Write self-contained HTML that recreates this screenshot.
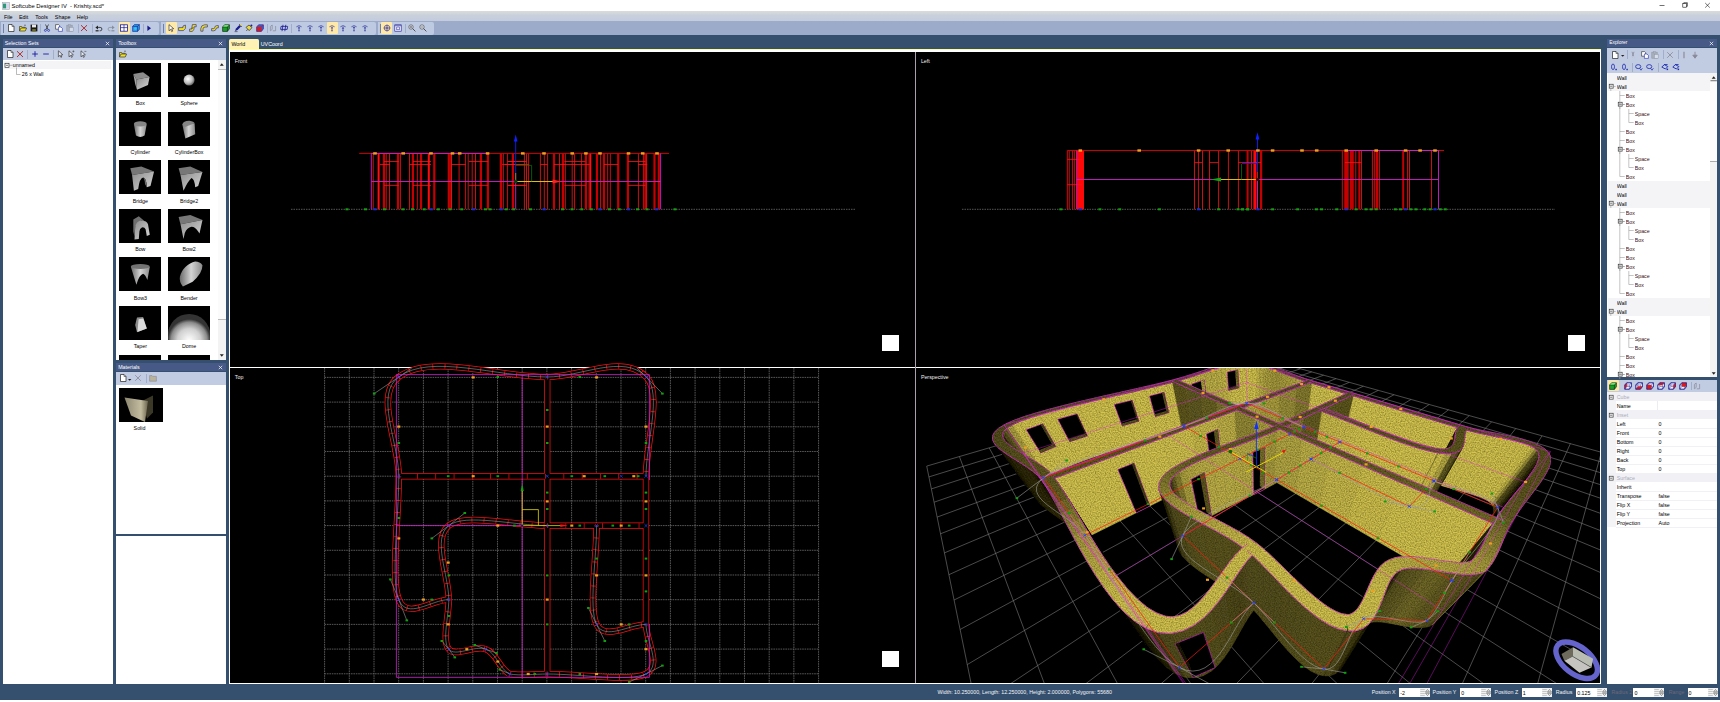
<!DOCTYPE html>
<html><head><meta charset="utf-8"><title>Softcube Designer IV - Krishty.scd*</title><style>
html,body{margin:0;padding:0;background:#fff;overflow:hidden}
#r{position:relative;width:1720px;height:702px;overflow:hidden;font-family:"Liberation Sans",sans-serif}
#r div,#r svg,#r span{position:absolute;display:block}
#r svg{overflow:visible}
#r .t{white-space:pre;line-height:8px;height:8px}
#r svg text{font-family:"Liberation Sans",sans-serif}
</style></head><body><div id="r">
<div style="left:0px;top:0px;width:1720px;height:702px;background:#fff;"></div>
<svg style="left:1.5px;top:2px" width="8" height="8" viewBox="0 0 8 8"><rect x=".3" y=".3" width="7.400" height="7.400" fill="#e8e8f0" stroke="#99a" stroke-width=".5"/><rect x="1" y="1.600" width="3.200" height="4.800" fill="#2a9a78"/><rect x="4.600" y="1.600" width="2.400" height="4.800" fill="#d8d8ee"/></svg>
<span class="t" style="left:11.6px;top:1.5999999999999996px;color:#000;font-size:5.85px;">Softcube Designer IV&nbsp; - Krishty.scd*</span>
<svg style="left:1655px;top:0px" width="60" height="11" viewBox="0 0 60 11"><path d="M4.500 5.500h5" stroke="#111" stroke-width=".6"/><rect x="27.800" y="3.600" width="3.600" height="3.600" fill="none" stroke="#111" stroke-width=".6"/><path d="M28.800 3.600v-.9h3.600v3.600h-1" fill="none" stroke="#111" stroke-width=".6"/><path d="M50.200 3l4.600 4.600M54.800 3l-4.600 4.600" stroke="#111" stroke-width=".6"/></svg>
<div style="left:0px;top:11px;width:1720px;height:10px;background:linear-gradient(#d8ddd9,#c9d0dc 45%,#c3cbdd);"></div>
<span class="t" style="left:3.9px;top:12.600000000000001px;color:#000;font-size:5.4px;">File</span>
<span class="t" style="left:18.9px;top:12.600000000000001px;color:#000;font-size:5.4px;">Edit</span>
<span class="t" style="left:35.3px;top:12.600000000000001px;color:#000;font-size:5.4px;">Tools</span>
<span class="t" style="left:54.8px;top:12.600000000000001px;color:#000;font-size:5.4px;">Shape</span>
<span class="t" style="left:76.8px;top:12.600000000000001px;color:#000;font-size:5.4px;">Help</span>
<div style="left:0px;top:21px;width:1720px;height:14px;background:#9cabc9;"></div>
<div style="left:1px;top:22px;width:158px;height:12.5px;background:#bdcae1;border-radius:0 2px 2px 0"></div>
<div style="left:3.2px;top:24px;width:0.6px;height:8.5px;background:#6f7fa6;"></div>
<div style="left:161px;top:22px;width:214.5px;height:12.5px;background:#bdcae1;border-radius:0 2px 2px 0"></div>
<div style="left:163.2px;top:24px;width:0.6px;height:8.5px;background:#6f7fa6;"></div>
<div style="left:377.5px;top:22px;width:56.0px;height:12.5px;background:#bdcae1;border-radius:0 2px 2px 0"></div>
<div style="left:379.7px;top:24px;width:0.6px;height:8.5px;background:#6f7fa6;"></div>
<div style="left:118.7px;top:22.45px;width:11px;height:11.5px;background:#ffe9a8;border-radius:1px"></div>
<div style="left:165.7px;top:22.45px;width:11px;height:11.5px;background:#ffe9a8;border-radius:1px"></div>
<div style="left:326.7px;top:22.45px;width:11px;height:11.5px;background:#ffe9a8;border-radius:1px"></div>
<div style="left:381.3px;top:22.45px;width:11px;height:11.5px;background:#ffe9a8;border-radius:1px"></div>
<svg style="left:7.4px;top:24.2px" width="8" height="8" viewBox="0 0 8 8"><path d="M1.5 .5h3.5l2 2v5h-5.5z" fill="#fff" stroke="#222" stroke-width=".7"/><path d="M5 .5v2h2" fill="none" stroke="#222" stroke-width=".5"/></svg>
<svg style="left:18.8px;top:24.2px" width="8" height="8" viewBox="0 0 8 8"><path d="M.5 7V2.5h2l.7.8h3v1" fill="#e8d840" stroke="#222" stroke-width=".6"/><path d="M.5 7l1.5-3h5.6l-1.4 3z" fill="#f0e020" stroke="#222" stroke-width=".6"/><path d="M5 1.5q1-1.2 2 0" fill="none" stroke="#222" stroke-width=".5"/></svg>
<svg style="left:29.6px;top:24.2px" width="8" height="8" viewBox="0 0 8 8"><rect x=".6" y=".6" width="6.8" height="6.8" fill="#1a1a1a"/><rect x="2" y=".6" width="4" height="2.8" fill="#e8e8e8"/><rect x="2.2" y="5" width="3.6" height="2.4" fill="#6b6b20"/></svg>
<svg style="left:43.2px;top:24.2px" width="8" height="8" viewBox="0 0 8 8"><path d="M2.5 .5l2.5 5M5.5 .5l-2.5 5" stroke="#222" stroke-width=".7" fill="none"/><circle cx="2.4" cy="6.4" r="1" fill="none" stroke="#1a2ab0" stroke-width=".7"/><circle cx="5.6" cy="6.4" r="1" fill="none" stroke="#1a2ab0" stroke-width=".7"/></svg>
<svg style="left:55px;top:24.2px" width="8" height="8" viewBox="0 0 8 8"><path d="M.6 .6h3l1 1v3.6h-4z" fill="#fff" stroke="#222" stroke-width=".6"/><path d="M3.4 3h2.6l1.4 1.4v3h-4z" fill="#fff" stroke="#1a2ab0" stroke-width=".6"/></svg>
<svg style="left:66px;top:24.2px" width="8" height="8" viewBox="0 0 8 8"><g opacity="0.35" style="filter:grayscale(1)"><rect x=".8" y="1.2" width="5.4" height="6" fill="#8a7a50" stroke="#333" stroke-width=".6"/><rect x="2.4" y=".4" width="2.2" height="1.6" fill="#999" stroke="#333" stroke-width=".4"/><rect x="3.4" y="3.4" width="3.8" height="4" fill="#fff" stroke="#333" stroke-width=".5"/></g></svg>
<svg style="left:80px;top:24.2px" width="8" height="8" viewBox="0 0 8 8"><path d="M1 1.2l6 5.8M7 1.2l-6 5.8" stroke="#a81414" stroke-width=".85" fill="none"/></svg>
<svg style="left:94.8px;top:24.2px" width="8" height="8" viewBox="0 0 8 8"><path d="M2.2 3.4h3a1.7 1.7 0 010 3.4H4.6" fill="none" stroke="#222" stroke-width=".8"/><path d="M.4 3.4l2.6-2v4z" fill="#222"/><rect x=".6" y="6.2" width="3" height="1.2" fill="#222"/></svg>
<svg style="left:106.6px;top:24.2px" width="8" height="8" viewBox="0 0 8 8"><g opacity="0.35" style="filter:grayscale(1)"><path d="M5.8 3.4h-3a1.7 1.7 0 000 3.4h.6" fill="none" stroke="#222" stroke-width=".8"/><path d="M7.6 3.4l-2.6-2v4z" fill="#222"/><rect x="4.4" y="6.2" width="3" height="1.2" fill="#222"/></g></svg>
<svg style="left:120.2px;top:24.2px" width="8" height="8" viewBox="0 0 8 8"><rect x=".5" y=".8" width="7" height="6.4" fill="#fff" stroke="#1a1a90" stroke-width=".8"/><path d="M4 .8v6.4M.5 3.6h7" stroke="#1a1a90" stroke-width=".7"/></svg>
<svg style="left:131.8px;top:24.2px" width="8" height="8" viewBox="0 0 8 8"><path d="M.6 2.4l1.8-1.8h5v4.6l-1.8 2.2h-5z" fill="#20a0e8" stroke="#1a1a90" stroke-width=".6"/><path d="M.6 2.4h5v5M5.6 2.4l1.8-1.8" fill="none" stroke="#1a1a90" stroke-width=".6"/><circle cx="3.4" cy="4.6" r="1.3" fill="#30c8f0"/></svg>
<svg style="left:145.2px;top:24.2px" width="8" height="8" viewBox="0 0 8 8"><path d="M2.4 1.4l3.6 2.8-3.6 2.8z" fill="#1a1a90"/></svg>
<svg style="left:167.2px;top:24.2px" width="8" height="8" viewBox="0 0 8 8"><path d="M2 .6v6.2l1.6-1.5 1.1 2.3 1-.5-1.1-2.2 2.1-.2z" fill="#fff" stroke="#111" stroke-width=".6"/></svg>
<svg style="left:178.2px;top:24.2px" width="8" height="8" viewBox="0 0 8 8"><path d="M.6 3.6h4.4v-1.6l2.4-1v3.4l-2 2.2h-4.8z" fill="#f4e010" stroke="#1a1a90" stroke-width=".6"/></svg>
<svg style="left:189.2px;top:24.2px" width="8" height="8" viewBox="0 0 8 8"><path d="M3.4 .6h3.8v2.2h-2.2v2.4l-1.6 2.2h-2.8v-2.4h2z" fill="#f4e010" stroke="#1a1a90" stroke-width=".6"/><path d="M2.6 5q1.4-.2 1.4-2" fill="none" stroke="#1a1a90" stroke-width=".5"/></svg>
<svg style="left:200.2px;top:24.2px" width="8" height="8" viewBox="0 0 8 8"><path d="M.8 7.2v-2.6q.2-3.6 3.8-3.8h2.8v2.2h-2.4q-1.8.2-2 1.8v2.4z" fill="#f4e010" stroke="#1a1a90" stroke-width=".6"/></svg>
<svg style="left:211.2px;top:24.2px" width="8" height="8" viewBox="0 0 8 8"><path d="M.6 6.8v-2.2h2q1 0 1.2-1.2.2-1.8 2-1.8h1.6v2.2h-1.4q-.8 0-1 1.200-.4 1.800-2.200 1.800z" fill="#f4e010" stroke="#1a1a90" stroke-width=".6"/></svg>
<svg style="left:222.2px;top:24.2px" width="8" height="8" viewBox="0 0 8 8"><path d="M.6 3l2-2.200h4.800v4l-2 2.600h-4.800z" fill="#18a028" stroke="#111" stroke-width=".6"/><path d="M.6 3h4.800v4.400M5.400 3l2-2.200" fill="none" stroke="#111" stroke-width=".5"/><path d="M.9 2.800l1.800-1.800h4.200l-1.700 1.800z" fill="#70e070"/></svg>
<svg style="left:233.6px;top:24.2px" width="8" height="8" viewBox="0 0 8 8"><path d="M1 7l1-2.600 3.400-3.400 1.600 1.600-3.400 3.400z" fill="#1a1a90"/><path d="M5.400 .4l2.200 2.200" stroke="#111" stroke-width=".9"/><circle cx="6.600" cy="1" r=".8" fill="#f4e010"/><path d="M.6 7.600h3" stroke="#111" stroke-width=".5"/></svg>
<svg style="left:244.6px;top:24.2px" width="8" height="8" viewBox="0 0 8 8"><path d="M1 3.400l3-2.400 3 2.600-2.800 3z" fill="#e8d840" stroke="#111" stroke-width=".6"/><circle cx="6.400" cy="1.400" r="1" fill="#1a1a90"/><path d="M1.400 6.800l1.400-1.400" stroke="#111" stroke-width=".7"/></svg>
<svg style="left:255.6px;top:24.2px" width="8" height="8" viewBox="0 0 8 8"><path d="M.6 3l2-2.200h4.800v4l-2 2.600h-4.800z" fill="#e01818" stroke="#1a1a90" stroke-width=".6"/><path d="M.9 2.800l1.800-1.800h4.200l-1.700 1.800z" fill="#2060e0"/><path d="M5.600 3.200l1.600-1.900v3.500l-1.600 2.100z" fill="#2060e0"/></svg>
<svg style="left:269.2px;top:24.2px" width="8" height="8" viewBox="0 0 8 8"><path d="M1.400 6.800v-4.400l1.800-1.400v4.400zM3.800 6.800h2.800v-4.800" fill="none" stroke="#889" stroke-width=".7"/></svg>
<svg style="left:280px;top:24.2px" width="8" height="8" viewBox="0 0 8 8"><path d="M3 .8l-1 6.400M5.800 .8l-1 6.400M1 2.400h6.600M.6 5.400h6.600M1 2.400l-.4 3M7.600 2.400l-.4 3" fill="none" stroke="#1a1a90" stroke-width=".8"/></svg>
<svg style="left:295px;top:24.2px" width="8" height="8" viewBox="0 0 8 8"><path d="M4 2.600v4.800" stroke="#1a1a90" stroke-width=".6"/><path d="M1.400 2.800q2.600-2.400 5.200 0" fill="none" stroke="#1a1a90" stroke-width=".6"/><path d="M2.900 3.9h2.200" stroke="#1a1a90" stroke-width=".6"/><path d="M3.300 6.600h1.400" stroke="#1a1a90" stroke-width=".5"/></svg>
<svg style="left:306px;top:24.2px" width="8" height="8" viewBox="0 0 8 8"><path d="M4 2.600v4.800" stroke="#1a1a90" stroke-width=".6"/><path d="M1.400 2.800q2.600-2.400 5.200 0" fill="none" stroke="#1a1a90" stroke-width=".6"/><path d="M2.900 4.2h2.200" stroke="#1a1a90" stroke-width=".6"/><path d="M3.300 6.600h1.400" stroke="#1a1a90" stroke-width=".5"/></svg>
<svg style="left:317px;top:24.2px" width="8" height="8" viewBox="0 0 8 8"><path d="M4 2.600v4.800" stroke="#1a1a90" stroke-width=".6"/><path d="M1.400 2.800q2.600-2.400 5.200 0" fill="none" stroke="#1a1a90" stroke-width=".6"/><path d="M2.900 3.6h2.200" stroke="#1a1a90" stroke-width=".6"/><path d="M3.300 6.600h1.400" stroke="#1a1a90" stroke-width=".5"/></svg>
<svg style="left:328.2px;top:24.2px" width="8" height="8" viewBox="0 0 8 8"><path d="M4 2.600v4.800" stroke="#1a1a90" stroke-width=".6"/><path d="M1.400 2.800q2.600-2.400 5.200 0" fill="none" stroke="#1a1a90" stroke-width=".6"/><path d="M2.900 3.9h2.200" stroke="#1a1a90" stroke-width=".6"/><path d="M3.300 6.600h1.400" stroke="#1a1a90" stroke-width=".5"/></svg>
<svg style="left:339px;top:24.2px" width="8" height="8" viewBox="0 0 8 8"><path d="M4 2.600v4.800" stroke="#1a1a90" stroke-width=".6"/><path d="M1.400 2.800q2.600-2.400 5.200 0" fill="none" stroke="#1a1a90" stroke-width=".6"/><path d="M2.900 4.2h2.200" stroke="#1a1a90" stroke-width=".6"/><path d="M3.300 6.600h1.400" stroke="#1a1a90" stroke-width=".5"/></svg>
<svg style="left:350px;top:24.2px" width="8" height="8" viewBox="0 0 8 8"><path d="M4 2.600v4.800" stroke="#1a1a90" stroke-width=".6"/><path d="M1.400 2.800q2.600-2.400 5.200 0" fill="none" stroke="#1a1a90" stroke-width=".6"/><path d="M2.900 3.6h2.200" stroke="#1a1a90" stroke-width=".6"/><path d="M3.300 6.600h1.400" stroke="#1a1a90" stroke-width=".5"/></svg>
<svg style="left:361px;top:24.2px" width="8" height="8" viewBox="0 0 8 8"><path d="M4 2.600v4.800" stroke="#1a1a90" stroke-width=".6"/><path d="M1.400 2.800q2.600-2.400 5.200 0" fill="none" stroke="#1a1a90" stroke-width=".6"/><path d="M2.900 3.9h2.200" stroke="#1a1a90" stroke-width=".6"/><path d="M3.300 6.600h1.400" stroke="#1a1a90" stroke-width=".5"/></svg>
<svg style="left:382.8px;top:24.2px" width="8" height="8" viewBox="0 0 8 8"><circle cx="4" cy="4" r="2.800" fill="none" stroke="#1a1a90" stroke-width=".6"/><circle cx="4" cy="4" r="1.100" fill="none" stroke="#1a1a90" stroke-width=".5"/><path d="M4 .4v7.200M.4 4h7.200" stroke="#1a1a90" stroke-width=".4"/></svg>
<svg style="left:393.6px;top:24.2px" width="8" height="8" viewBox="0 0 8 8"><rect x=".8" y=".8" width="6.400" height="6.400" fill="#eef" stroke="#1a1a90" stroke-width=".6"/><rect x="2.800" y="3" width="2.600" height="2.800" fill="none" stroke="#1a1a90" stroke-width=".5"/><path d="M.8 1.700h6.400" stroke="#1a1a90" stroke-width=".6"/></svg>
<svg style="left:408px;top:24.2px" width="8" height="8" viewBox="0 0 8 8"><circle cx="3" cy="3" r="2.200" fill="#dfe3ee" stroke="#333" stroke-width=".55"/><path d="M4.600 4.600l2.800 2.800" stroke="#333" stroke-width=".8"/><path d="M1.800 3h2.400M3 1.800v2.400" stroke="#333" stroke-width=".5"/></svg>
<svg style="left:419px;top:24.2px" width="8" height="8" viewBox="0 0 8 8"><circle cx="3" cy="3" r="2.200" fill="#dfe3ee" stroke="#333" stroke-width=".55"/><path d="M4.600 4.600l2.800 2.800" stroke="#333" stroke-width=".8"/><path d="M1.800 3h2.400" stroke="#333" stroke-width=".5"/></svg>
<div style="left:40.2px;top:24px;width:0.5px;height:8.5px;background:#a0aeCC;"></div>
<div style="left:77.6px;top:24px;width:0.5px;height:8.5px;background:#a0aeCC;"></div>
<div style="left:91.6px;top:24px;width:0.5px;height:8.5px;background:#a0aeCC;"></div>
<div style="left:142.6px;top:24px;width:0.5px;height:8.5px;background:#a0aeCC;"></div>
<div style="left:267px;top:24px;width:0.5px;height:8.5px;background:#a0aeCC;"></div>
<div style="left:290.6px;top:24px;width:0.5px;height:8.5px;background:#a0aeCC;"></div>
<div style="left:404.6px;top:24px;width:0.5px;height:8.5px;background:#a0aeCC;"></div>
<div style="left:0px;top:35px;width:1720px;height:665.4px;background:#35506e;"></div>
<div style="left:2.5px;top:38.8px;width:110.5px;height:8.5px;background:#475986;"></div>
<span class="t" style="left:4.7px;top:39.35px;color:#fff;font-size:5.3px;">Selection Sets</span>
<svg style="left:104.5px;top:40.65px" width="5" height="5" viewBox="0 0 5 5"><path d="M.8 .8l3.400 3.400M4.200 .8l-3.400 3.400" stroke="#fff" stroke-width=".7"/></svg>
<div style="left:2.5px;top:48px;width:110.5px;height:12px;background:#c1cbe1;"></div>
<svg style="left:5.6px;top:50.2px" width="8" height="8" viewBox="0 0 8 8"><path d="M1.5 .5h3.5l2 2v5h-5.5z" fill="#fff" stroke="#222" stroke-width=".7"/><path d="M5 .5v2h2" fill="none" stroke="#222" stroke-width=".5"/></svg>
<svg style="left:16.4px;top:50.2px" width="8" height="8" viewBox="0 0 8 8"><path d="M1 1.2l6 5.8M7 1.2l-6 5.8" stroke="#a81414" stroke-width=".85" fill="none"/></svg>
<svg style="left:30.8px;top:50.2px" width="8" height="8" viewBox="0 0 8 8"><path d="M4 1.200v5.600M1.200 4h5.600" stroke="#1c1ca0" stroke-width=".9"/></svg>
<svg style="left:42px;top:50.2px" width="8" height="8" viewBox="0 0 8 8"><path d="M1.200 4h5.600" stroke="#1c1ca0" stroke-width=".9"/></svg>
<svg style="left:56px;top:50.2px" width="8" height="8" viewBox="0 0 8 8"><path d="M2.400 .8v6l1.500-1.400 1 2 .9-.4-1-2 2-.2z" fill="#e4e9f2" stroke="#222" stroke-width=".6"/></svg>
<svg style="left:67.4px;top:50.2px" width="8" height="8" viewBox="0 0 8 8"><path d="M2 .8v6l1.500-1.400 1 2 .9-.4-1-2 2-.2z" fill="#e4e9f2" stroke="#222" stroke-width=".6"/><path d="M5.400 1.400h2M6.400 .4v2" stroke="#333" stroke-width=".5"/></svg>
<svg style="left:78.6px;top:50.2px" width="8" height="8" viewBox="0 0 8 8"><path d="M2 .8v6l1.500-1.400 1 2 .9-.4-1-2 2-.2z" fill="#e4e9f2" stroke="#222" stroke-width=".6"/><path d="M5.400 1.400h2" stroke="#333" stroke-width=".5"/></svg>
<div style="left:27.4px;top:50px;width:0.5px;height:8.5px;background:#a3aec9;"></div>
<div style="left:53px;top:50px;width:0.5px;height:8.5px;background:#a3aec9;"></div>
<div style="left:2.5px;top:60px;width:110.5px;height:624.2px;background:#fff;"></div>
<div style="left:4.2px;top:60.6px;width:107px;height:8.8px;background:#f4f4f7;"></div>
<svg style="left:3.5px;top:61px" width="20" height="18" viewBox="0 0 20 18"><rect x="1" y="2.300" width="4" height="4" fill="#fff" stroke="#333" stroke-width=".7"/><path d="M2 4.300h2" stroke="#111" stroke-width=".6"/><path d="M5 4.300h3.500M12.500 6.500v7h4" fill="none" stroke="#777" stroke-width=".5"/></svg>
<span class="t" style="left:12.8px;top:61.3px;color:#000;font-size:5.3px;">unnamed</span>
<span class="t" style="left:21.8px;top:70.3px;color:#000;font-size:5.3px;">26 x Wall</span>
<div style="left:116px;top:38.8px;width:110px;height:8.5px;background:#475986;"></div>
<span class="t" style="left:118.2px;top:39.35px;color:#fff;font-size:5.3px;">Toolbox</span>
<svg style="left:217.5px;top:40.65px" width="5" height="5" viewBox="0 0 5 5"><path d="M.8 .8l3.400 3.400M4.200 .8l-3.400 3.400" stroke="#fff" stroke-width=".7"/></svg>
<div style="left:116px;top:48px;width:110px;height:12px;background:#c1cbe1;"></div>
<svg style="left:118.6px;top:50.2px" width="8" height="8" viewBox="0 0 8 8"><path d="M.5 7V2.5h2l.7.8h3v1" fill="#e8d840" stroke="#222" stroke-width=".6"/><path d="M.5 7l1.5-3h5.6l-1.4 3z" fill="#f0e020" stroke="#222" stroke-width=".6"/><path d="M5 1.5q1-1.2 2 0" fill="none" stroke="#222" stroke-width=".5"/></svg>
<div style="left:116px;top:60px;width:110px;height:299.8px;background:#fff;"></div>
<svg style="left:0px;top:0px" width="1" height="1" viewBox="0 0 1 1"><defs><linearGradient id="gA" x1="0" y1="0" x2="1" y2="1"><stop offset="0" stop-color="#8c8c8c"/><stop offset="1" stop-color="#d8d8d8"/></linearGradient><linearGradient id="gB" x1="0" y1="0" x2="1" y2="0"><stop offset="0" stop-color="#6a6a6a"/><stop offset=".5" stop-color="#d4d4d4"/><stop offset="1" stop-color="#8a8a8a"/></linearGradient><radialGradient id="gS" cx=".4" cy=".4" r=".65"><stop offset="0" stop-color="#fff"/><stop offset=".6" stop-color="#bbb"/><stop offset="1" stop-color="#555"/></radialGradient><radialGradient id="gD" cx=".5" cy=".62" r=".5"><stop offset="0" stop-color="#fff"/><stop offset=".55" stop-color="#d0d0d0"/><stop offset=".85" stop-color="#8a8a8a"/><stop offset="1" stop-color="#333"/></radialGradient></defs></svg><div style="left:119.2px;top:63.2px;width:42.2px;height:34px;background:#000;"></div><svg style="left:119.2px;top:63.2px;overflow:hidden" width="42.2" height="34" viewBox="0 0 42.2 34"><path d="M14.3 11L24.100 9.200 30.600 14.100 17.400 16.500z" fill="#8c8c8c"/><path d="M17.400 16.500L30.600 14.100 29 22 18 26.700z" fill="url(#gA)"/><path d="M14.300 11L17.400 16.500 18 26.700 16.200 21z" fill="#a4a4a4"/></svg><span class="t" style="left:140.3px;top:99.4px;color:#000;font-size:5.3px;transform:translateX(-50%)">Box</span><div style="left:168px;top:63.2px;width:42.2px;height:34px;background:#000;"></div><svg style="left:168px;top:63.2px;overflow:hidden" width="42.2" height="34" viewBox="0 0 42.2 34"><circle cx="21.100" cy="17.100" r="5.500" fill="url(#gS)"/></svg><span class="t" style="left:189.1px;top:99.4px;color:#000;font-size:5.3px;transform:translateX(-50%)">Sphere</span><div style="left:119.2px;top:111.75px;width:42.2px;height:34px;background:#000;"></div><svg style="left:119.2px;top:111.75px;overflow:hidden" width="42.2" height="34" viewBox="0 0 42.2 34"><path d="M14.900 12.400L17 23.600Q21.300 26.400 25.600 23.600L27.700 12.400z" fill="url(#gB)"/><ellipse cx="21.300" cy="11.900" rx="6.400" ry="2.600" fill="#858585"/></svg><span class="t" style="left:140.3px;top:147.95px;color:#000;font-size:5.3px;transform:translateX(-50%)">Cylinder</span><div style="left:168px;top:111.75px;width:42.2px;height:34px;background:#000;"></div><svg style="left:168px;top:111.75px;overflow:hidden" width="42.2" height="34" viewBox="0 0 42.2 34"><path d="M14.300 12.500L17.400 26.600 27.200 22.300 26.600 11.300z" fill="url(#gB)"/><path d="M14.300 12.500Q15.500 8.600 21.500 8.800 26.200 9.400 26.600 11.300L17 15z" fill="#858585"/></svg><span class="t" style="left:189.1px;top:147.95px;color:#000;font-size:5.3px;transform:translateX(-50%)">CylinderBox</span><div style="left:119.2px;top:160.3px;width:42.2px;height:34px;background:#000;"></div><svg style="left:119.2px;top:160.3px;overflow:hidden" width="42.2" height="34" viewBox="0 0 42.2 34"><path d="M11.300 8.200L22.300 6.600 35.100 11.500 13.100 14.900z" fill="#777"/><path d="M13.100 14.900L35.100 11.500 31.500 26 27.800 27.200Q27.500 17.500 24.100 17.400 20.500 18 19.200 29L14.900 30.800z" fill="url(#gA)"/><path d="M24.100 17.400Q27.500 17.500 27.800 27.200L26 24Q25.800 19 24.100 17.400z" fill="#6c6c6c"/></svg><span class="t" style="left:140.3px;top:196.5px;color:#000;font-size:5.3px;transform:translateX(-50%)">Bridge</span><div style="left:168px;top:160.3px;width:42.2px;height:34px;background:#000;"></div><svg style="left:168px;top:160.3px;overflow:hidden" width="42.2" height="34" viewBox="0 0 42.2 34"><path d="M10.600 8.200L22.300 6.600 34.500 11.900 12.500 14.900z" fill="#777"/><path d="M12.500 14.900L34.500 11.900 30.200 26 27.200 27.200Q26.500 19 23.500 18 20 21 15.500 30.800z" fill="url(#gA)"/></svg><span class="t" style="left:189.1px;top:196.5px;color:#000;font-size:5.3px;transform:translateX(-50%)">Bridge2</span><div style="left:119.2px;top:208.85px;width:42.2px;height:34px;background:#000;"></div><svg style="left:119.2px;top:208.85px;overflow:hidden" width="42.2" height="34" viewBox="0 0 42.2 34"><path d="M14.300 10.400L19.800 7.300 27.200 13.500 22.300 11.600 16.200 17.700 15.500 27.500 14.300 22.600z" fill="#6e6e6e"/><path d="M15.500 30.600L16.200 17.700Q17.500 12 22.300 11.600 28 12 29 15.300L30.800 25.700 27.800 26.900 26.600 20.200Q25.500 18 22.900 18.400 20.600 19.500 20.400 22.600L19.800 30z" fill="url(#gA)"/></svg><span class="t" style="left:140.3px;top:245.05px;color:#000;font-size:5.3px;transform:translateX(-50%)">Bow</span><div style="left:168px;top:208.85px;width:42.2px;height:34px;background:#000;"></div><svg style="left:168px;top:208.85px;overflow:hidden" width="42.2" height="34" viewBox="0 0 42.2 34"><path d="M10.600 8L22.300 6.100 34.500 11 12.500 15.300z" fill="#777"/><path d="M12.500 15.300L34.500 11 31.500 24.500 30.200 22.600Q27 17.500 23.500 17.700 19 18.500 16.800 23.900L15.500 30z" fill="url(#gA)"/></svg><span class="t" style="left:189.1px;top:245.05px;color:#000;font-size:5.3px;transform:translateX(-50%)">Bow2</span><div style="left:119.2px;top:257.4px;width:42.2px;height:34px;background:#000;"></div><svg style="left:119.2px;top:257.4px;overflow:hidden" width="42.2" height="34" viewBox="0 0 42.2 34"><path d="M11.900 10L17.400 27.800Q20 18 24.100 16.800 26.500 18 28.400 22.900L30.800 10z" fill="url(#gB)"/><ellipse cx="21.300" cy="9.400" rx="9.500" ry="2.500" fill="#727272"/></svg><span class="t" style="left:140.3px;top:293.6px;color:#000;font-size:5.3px;transform:translateX(-50%)">Bow3</span><div style="left:168px;top:257.4px;width:42.2px;height:34px;background:#000;"></div><svg style="left:168px;top:257.4px;overflow:hidden" width="42.2" height="34" viewBox="0 0 42.2 34"><path d="M14.900 29.600Q11 25 11.900 19.800 13.500 13.500 17.400 10 22 5.500 27.200 4.500 32 4.500 34.500 8.200 34.500 12 32.100 16.200 29 21 24.700 24.700z" fill="url(#gB)"/></svg><span class="t" style="left:189.1px;top:293.6px;color:#000;font-size:5.3px;transform:translateX(-50%)">Bender</span><div style="left:119.2px;top:305.95px;width:42.2px;height:34px;background:#000;"></div><svg style="left:119.2px;top:305.95px;overflow:hidden" width="42.2" height="34" viewBox="0 0 42.2 34"><path d="M18 26.300L16.200 19 18 11.600 24.100 11 27.800 22.600z" fill="#8a8a8a"/><path d="M19.600 13.200L24.300 12.600 27.800 22.600 18.400 26z" fill="#dcdcdc"/></svg><span class="t" style="left:140.3px;top:342.15px;color:#000;font-size:5.3px;transform:translateX(-50%)">Taper</span><div style="left:168px;top:305.95px;width:42.2px;height:34px;background:#000;"></div><svg style="left:168px;top:305.95px;overflow:hidden" width="42.2" height="34" viewBox="0 0 42.2 34"><circle cx="21.100" cy="29.300" r="21.300" fill="url(#gD)"/></svg><span class="t" style="left:189.1px;top:342.15px;color:#000;font-size:5.3px;transform:translateX(-50%)">Dome</span><div style="left:119.2px;top:354.5px;width:42.2px;height:5.3px;background:#000;"></div><div style="left:168px;top:354.5px;width:42.2px;height:5.3px;background:#000;"></div>
<div style="left:218.4px;top:60px;width:7.6px;height:299.8px;background:#f3f3f3;"></div>
<div style="left:218.4px;top:68.5px;width:7.6px;height:249.5px;background:#fbfbfb;border-bottom:.5px solid #bbb;border-top:.5px solid #bbb"></div>
<svg style="left:218.4px;top:61px" width="7.6" height="7" viewBox="0 0 7.6 7"><path d="M1.800 4.800l2-2.600 2 2.600z" fill="#222"/></svg>
<svg style="left:218.4px;top:352px" width="7.6" height="7" viewBox="0 0 7.6 7"><path d="M1.800 2.200l2 2.600 2-2.600z" fill="#222"/></svg>
<div style="left:116px;top:363.1px;width:110px;height:7.800000000000001px;background:#475986;"></div>
<span class="t" style="left:118.2px;top:363.3px;color:#fff;font-size:5.3px;">Materials</span>
<svg style="left:217.5px;top:364.59999999999997px" width="5" height="5" viewBox="0 0 5 5"><path d="M.8 .8l3.400 3.400M4.200 .8l-3.400 3.400" stroke="#fff" stroke-width=".7"/></svg>
<div style="left:116px;top:371.6px;width:110px;height:13px;background:#c1cbe1;"></div>
<svg style="left:118.6px;top:374.2px" width="8" height="8" viewBox="0 0 8 8"><path d="M1.5 .5h3.5l2 2v5h-5.5z" fill="#fff" stroke="#222" stroke-width=".7"/><path d="M5 .5v2h2" fill="none" stroke="#222" stroke-width=".5"/></svg>
<svg style="left:128px;top:376px" width="4" height="6" viewBox="0 0 4 6"><path d="M0 3h3.400l-1.700 1.800z" fill="#222"/></svg>
<svg style="left:134.2px;top:374.2px" width="8" height="8" viewBox="0 0 8 8"><path d="M1.200 1.200l5.600 5.600M6.800 1.200l-5.600 5.600" stroke="#889" stroke-width=".8"/></svg>
<div style="left:145.6px;top:374px;width:0.5px;height:8.5px;background:#a0aeCC;"></div>
<svg style="left:149.2px;top:374.2px" width="8" height="8" viewBox="0 0 8 8"><path d="M.6 7.200v-5.600h2.400l.6.800h3.800v4.800z" fill="#b9b39a" stroke="#889" stroke-width=".6"/></svg>
<div style="left:116px;top:384.6px;width:110px;height:149px;background:#fff;"></div>
<div style="left:116px;top:536px;width:110px;height:148.2px;background:#fff;"></div>
<div style="left:118.6px;top:387.6px;width:44.2px;height:34.8px;background:#000;"></div><svg style="left:118.6px;top:387.6px" width="44.2" height="34.8" viewBox="0 0 44.2 34.8"><defs><linearGradient id="gM" x1="0" y1="0" x2="1" y2="0"><stop offset="0" stop-color="#8c8670"/><stop offset=".7" stop-color="#c4bca0"/><stop offset="1" stop-color="#6a644c"/></linearGradient></defs><path d="M23 13l11-5.500 0 17-6 6z" fill="#3c3828"/><path d="M5.500 9.500l23.500 3.500-3 21-14-6.500z" fill="url(#gM)"/></svg>
<span class="t" style="left:133.6px;top:424px;color:#000;font-size:5.3px;">Solid</span>
<div style="left:229px;top:38.7px;width:30px;height:10.5px;background:#fff2b4;border-radius:1.5px 1.5px 0 0"></div>
<span class="t" style="left:231.4px;top:39.9px;color:#000;font-size:5.3px;">World</span>
<span class="t" style="left:260.8px;top:39.9px;color:#fff;font-size:5.3px;">UVCoord</span>
<div style="left:229px;top:48.7px;width:1372px;height:1.8px;background:#ffff9a;"></div>
<div style="left:229px;top:50.4px;width:1372px;height:633.8px;background:#fff;"></div>
<div style="left:230.2px;top:51.8px;width:1370px;height:631.6px;background:#000;"></div>
<div style="left:230.2px;top:367px;width:1370px;height:1px;background:#fff;"></div><div style="left:914.6px;top:51.8px;width:1px;height:631.2px;background:#a9a0ac;"></div><span class="t" style="left:234.8px;top:56.5px;color:#f0f0f0;font-size:5.3px;">Front</span><span class="t" style="left:920.9px;top:56.5px;color:#f0f0f0;font-size:5.3px;">Left</span><span class="t" style="left:234.8px;top:372.6px;color:#f0f0f0;font-size:5.3px;">Top</span><span class="t" style="left:920.9px;top:372.6px;color:#f0f0f0;font-size:5.3px;">Perspective</span><div style="left:882.4px;top:335.1px;width:16.4px;height:15.9px;background:#fff;"></div><div style="left:1568.2px;top:335.1px;width:16.4px;height:15.9px;background:#fff;"></div><div style="left:882.4px;top:651.3px;width:16.4px;height:15.9px;background:#fff;"></div><svg style="left:0;top:0" width="1720" height="702" viewBox="0 0 1720 702"><path d="M291 209.3H855" stroke="#7a7a7a" stroke-width=".7" stroke-dasharray="1.5 1"/><path d="M378.6 153.4V209.3M384 153.4V209.3M398 153.4V209.3M412.9 153.4V209.3M421 153.4V209.3M428.8 153.4V209.3M434.3 153.4V209.3M448.8 153.4V209.3M480.9 153.4V209.3M487.9 153.4V209.3M500.9 153.4V209.3M512.9 153.4V209.3M554 153.4V209.3M562.9 153.4V209.3M585.9 153.4V209.3M589.7 153.4V209.3M597 153.4V209.3M604 153.4V209.3M618.2 153.4V209.3M627.9 153.4V209.3M645.4 153.4V209.3M654.5 153.4V209.3M658.8 153.4V209.3" stroke="#c40000" stroke-width="2.200" fill="none"/><path d="M373.2 153.4V209.3M386.2 153.4V209.3M389.5 153.4V209.3M400.4 153.4V209.3M409.5 153.4V209.3M417.3 153.4V209.3M451.2 153.4V209.3M459.1 153.4V209.3M465.4 153.4V209.3M468.2 153.4V209.3M472.2 153.4V209.3M475.5 153.4V209.3M503.3 153.4V209.3M507.4 153.4V209.3M524.4 153.4V209.3M526.5 153.4V209.3M528.6 153.4V209.3M540.4 153.4V209.3M544.3 153.4V209.3M547.6 153.4V209.3M559.5 153.4V209.3M565.3 153.4V209.3M572.2 153.4V209.3M574.6 153.4V209.3M581.6 153.4V209.3M590.6 153.4V209.3M600.6 153.4V209.3M607.7 153.4V209.3M610.3 153.4V209.3M638.4 153.4V209.3M643.4 153.4V209.3M646.6 153.4V209.3" stroke="#ff1414" stroke-width=".8" fill="none"/><path d="M378.6 153.4V209.3M428.8 153.4V209.3M590.6 153.4V209.3M451.2 153.4V209.3" stroke="#ff1010" stroke-width="1.300" fill="none"/><path d="M384.1 161.5H398.8M413.1 161.5H431M468.8 161.5H488.2M508.1 161.5H525M379.8 164.5H390.1M409.5 164.5H431M451.2 164.5H465.8M502.1 164.5H525M384.1 185.4H398.8M413.1 185.4H431M468.8 185.4H488.2M508.1 185.4H525M507.4 161.5H526.8M564.3 161.5H585.5M627.9 161.5H645.4M505 164.5H529.2M540.4 164.5H547.6M554 164.5H589.7M604 164.5H618.2M638.2 164.5H647.3M507.4 185.4H526.8M564.3 185.4H585.9M627.9 185.4H645.4" stroke="#ff1414" stroke-width=".8" fill="none"/><path d="M359.2 153.4H669" stroke="#e40000" stroke-width=".9"/><path d="M371.3 209.3V153.4H487M371.3 181.5H660.6M660.6 153.4V209.3M515.7 181.5V209.3" stroke="#d020d0" stroke-width=".9" fill="none"/><path d="M515.7 181.5V140" stroke="#1020ff" stroke-width=".9"/><path d="M513.9 141.500L515.700 134.500 517.500 141.500z" fill="#1020ff"/><path d="M515.7 181.5H554" stroke="#e0d000" stroke-width=".9"/><path d="M552.5 179.400L561.500 181.5 552.500 183.600z" fill="#ff2020"/><path d="M515.7 165.400H531.600V181.5" stroke="#0a7a0a" stroke-width=".7" fill="none"/><path d="M515.7 173V181.5" stroke="#d08000" stroke-width=".9"/><circle cx="515.7" cy="181.5" r="1.600" fill="#0a3a0a" stroke="#1a5a1a" stroke-width=".4"/><rect x="373.2" y="152.20000000000002" width="3.600" height="2.400" fill="#f0a020"/><rect x="401.4" y="152.20000000000002" width="3.600" height="2.400" fill="#f0a020"/><rect x="429.2" y="152.20000000000002" width="3.600" height="2.400" fill="#f0a020"/><rect x="450.7" y="152.20000000000002" width="3.600" height="2.400" fill="#f0a020"/><rect x="457.9" y="152.20000000000002" width="3.600" height="2.400" fill="#f0a020"/><rect x="485.8" y="152.20000000000002" width="3.600" height="2.400" fill="#f0a020"/><rect x="521" y="152.20000000000002" width="3.600" height="2.400" fill="#f0a020"/><rect x="542.2" y="152.20000000000002" width="3.600" height="2.400" fill="#f0a020"/><rect x="570.4" y="152.20000000000002" width="3.600" height="2.400" fill="#f0a020"/><rect x="584.1" y="152.20000000000002" width="3.600" height="2.400" fill="#f0a020"/><rect x="598.2" y="152.20000000000002" width="3.600" height="2.400" fill="#f0a020"/><rect x="626.7" y="152.20000000000002" width="3.600" height="2.400" fill="#f0a020"/><rect x="640.9" y="152.20000000000002" width="3.600" height="2.400" fill="#f0a020"/><rect x="655.2" y="152.20000000000002" width="3.600" height="2.400" fill="#f0a020"/><rect x="345.5" y="208.3" width="3" height="2" fill="#10a010"/><rect x="364" y="208.3" width="3" height="2" fill="#10a010"/><rect x="383" y="208.3" width="3" height="2" fill="#10a010"/><rect x="401.5" y="208.3" width="3" height="2" fill="#10a010"/><rect x="411" y="208.3" width="3" height="2" fill="#10a010"/><rect x="422.8" y="208.3" width="3" height="2" fill="#10a010"/><rect x="436.8" y="208.3" width="3" height="2" fill="#10a010"/><rect x="448.5" y="208.3" width="3" height="2" fill="#10a010"/><rect x="460.2" y="208.3" width="3" height="2" fill="#10a010"/><rect x="484" y="208.3" width="3" height="2" fill="#10a010"/><rect x="488.5" y="208.3" width="3" height="2" fill="#10a010"/><rect x="504.8" y="208.3" width="3" height="2" fill="#10a010"/><rect x="512.2" y="208.3" width="3" height="2" fill="#10a010"/><rect x="529" y="208.3" width="3" height="2" fill="#10a010"/><rect x="561" y="208.3" width="3" height="2" fill="#10a010"/><rect x="570.5" y="208.3" width="3" height="2" fill="#10a010"/><rect x="580.2" y="208.3" width="3" height="2" fill="#10a010"/><rect x="589.8" y="208.3" width="3" height="2" fill="#10a010"/><rect x="608" y="208.3" width="3" height="2" fill="#10a010"/><rect x="617.8" y="208.3" width="3" height="2" fill="#10a010"/><rect x="636" y="208.3" width="3" height="2" fill="#10a010"/><rect x="645.5" y="208.3" width="3" height="2" fill="#10a010"/><rect x="673.5" y="208.3" width="3" height="2" fill="#10a010"/><rect x="373.4" y="208.3" width="3.200" height="2" fill="#1030e0"/><rect x="429.6" y="208.3" width="3.200" height="2" fill="#1030e0"/><rect x="472.1" y="208.3" width="3.200" height="2" fill="#1030e0"/><rect x="499.6" y="208.3" width="3.200" height="2" fill="#1030e0"/><rect x="542.6" y="208.3" width="3.200" height="2" fill="#1030e0"/><rect x="598.4" y="208.3" width="3.200" height="2" fill="#1030e0"/><rect x="627.1" y="208.3" width="3.200" height="2" fill="#1030e0"/><rect x="655.1" y="208.3" width="3.200" height="2" fill="#1030e0"/></svg><svg style="left:0;top:0" width="1720" height="702" viewBox="0 0 1720 702"><path d="M962 209.3H1555" stroke="#7a7a7a" stroke-width=".7" stroke-dasharray="1.500 1"/><rect x="1077" y="150.5" width="7" height="58.80000000000001" fill="#ff0808"/><rect x="1246.6" y="150.5" width="2" height="58.80000000000001" fill="#c40000"/><rect x="1253.4" y="150.5" width="3" height="58.80000000000001" fill="#ff0808"/><rect x="1260" y="150.5" width="2.2" height="58.80000000000001" fill="#c40000"/><rect x="1344.2" y="150.5" width="4.5" height="58.80000000000001" fill="#c40000"/><rect x="1350" y="150.5" width="3.8" height="58.80000000000001" fill="#c40000"/><rect x="1358.3" y="150.5" width="1.9" height="58.80000000000001" fill="#c40000"/><rect x="1375.6" y="150.5" width="2.5" height="58.80000000000001" fill="#c40000"/><rect x="1402.2" y="150.5" width="2" height="58.80000000000001" fill="#c40000"/><path d="M1067.3 150.5V209.3M1069.2 150.5V209.3M1072.4 150.5V209.3M1074.3 150.5V209.3M1194.5 150.5V209.3M1198.4 150.5V209.3M1202.5 150.5V209.3M1209.5 150.5V209.3M1218.6 150.5V209.3M1228.4 150.5V209.3M1238.4 150.5V209.3M1251.5 150.5V209.3M1342.3 150.5V209.3M1355.8 150.5V209.3M1361.5 150.5V209.3M1372.4 150.5V209.3M1374.3 150.5V209.3M1379.4 150.5V209.3M1407.6 150.5V209.3M1409.5 150.5V209.3M1431.5 150.5V209.3" stroke="#ff1414" stroke-width=".8" fill="none"/><path d="M1067.3 159.400H1082M1067.3 184.700H1082M1194.5 162.600H1202.500M1209.5 162.600H1218.600M1238.4 162.600H1261M1344.9 162.600H1361.500" stroke="#ff1414" stroke-width=".8" fill="none"/><path d="M1067.3 150.5H1444" stroke="#e40000" stroke-width=".9"/><path d="M1076.6 150.5V209.3M1076.6 179.5H1438.500M1347.4 150.5H1438.500V209.3M1257.5 179.5V209.3" stroke="#d020d0" stroke-width=".9" fill="none"/><path d="M1257.5 179.5V138" stroke="#1020ff" stroke-width=".9"/><path d="M1255.6 139.500L1257.500 132.300 1259.400 139.500z" fill="#1020ff"/><path d="M1257.5 179.5H1220" stroke="#e0d000" stroke-width=".9"/><path d="M1221 177.500L1211 179.5 1221 181.500z" fill="#10a818"/><path d="M1241.9 163.500H1257.500" stroke="#1020ff" stroke-width=".8"/><path d="M1241.5 164V179.5" stroke="#0a7a0a" stroke-width=".7"/><path d="M1257.5 172V179.5" stroke="#d02000" stroke-width=".9"/><circle cx="1257.5" cy="179.5" r="1.600" fill="#3a0a0a"/><rect x="1078.5" y="149.3" width="3.600" height="2.400" fill="#f0a020"/><rect x="1137.4" y="149.3" width="3.600" height="2.400" fill="#f0a020"/><rect x="1196.8" y="149.3" width="3.600" height="2.400" fill="#f0a020"/><rect x="1226.4" y="149.3" width="3.600" height="2.400" fill="#f0a020"/><rect x="1256.1" y="149.3" width="3.600" height="2.400" fill="#f0a020"/><rect x="1270.8" y="149.3" width="3.600" height="2.400" fill="#f0a020"/><rect x="1300.2" y="149.3" width="3.600" height="2.400" fill="#f0a020"/><rect x="1314.9" y="149.3" width="3.600" height="2.400" fill="#f0a020"/><rect x="1344.4" y="149.3" width="3.600" height="2.400" fill="#f0a020"/><rect x="1374.4" y="149.3" width="3.600" height="2.400" fill="#f0a020"/><rect x="1403.8" y="149.3" width="3.600" height="2.400" fill="#f0a020"/><rect x="1418.3" y="149.3" width="3.600" height="2.400" fill="#f0a020"/><rect x="1433.2" y="149.3" width="3.600" height="2.400" fill="#f0a020"/><rect x="1059.4" y="208.3" width="3" height="2" fill="#10a010"/><rect x="1098.4" y="208.3" width="3" height="2" fill="#10a010"/><rect x="1118.2" y="208.3" width="3" height="2" fill="#10a010"/><rect x="1157.9" y="208.3" width="3" height="2" fill="#10a010"/><rect x="1217.1" y="208.3" width="3" height="2" fill="#10a010"/><rect x="1236.5" y="208.3" width="3" height="2" fill="#10a010"/><rect x="1241" y="208.3" width="3" height="2" fill="#10a010"/><rect x="1246.1" y="208.3" width="3" height="2" fill="#10a010"/><rect x="1241.1" y="208.3" width="3" height="2" fill="#10a010"/><rect x="1246.2" y="208.3" width="3" height="2" fill="#10a010"/><rect x="1271.1" y="208.3" width="3" height="2" fill="#10a010"/><rect x="1296.1" y="208.3" width="3" height="2" fill="#10a010"/><rect x="1314.9" y="208.3" width="3" height="2" fill="#10a010"/><rect x="1320" y="208.3" width="3" height="2" fill="#10a010"/><rect x="1335.3" y="208.3" width="3" height="2" fill="#10a010"/><rect x="1354.6" y="208.3" width="3" height="2" fill="#10a010"/><rect x="1364.5" y="208.3" width="3" height="2" fill="#10a010"/><rect x="1369.6" y="208.3" width="3" height="2" fill="#10a010"/><rect x="1374.7" y="208.3" width="3" height="2" fill="#10a010"/><rect x="1393.9" y="208.3" width="3" height="2" fill="#10a010"/><rect x="1399" y="208.3" width="3" height="2" fill="#10a010"/><rect x="1409.3" y="208.3" width="3" height="2" fill="#10a010"/><rect x="1414.4" y="208.3" width="3" height="2" fill="#10a010"/><rect x="1423.3" y="208.3" width="3" height="2" fill="#10a010"/><rect x="1428.7" y="208.3" width="3" height="2" fill="#10a010"/><rect x="1438.9" y="208.3" width="3" height="2" fill="#10a010"/><rect x="1443.8" y="208.3" width="3" height="2" fill="#10a010"/><rect x="1078.7" y="208.3" width="3.200" height="2" fill="#1030e0"/><rect x="1197" y="208.3" width="3.200" height="2" fill="#1030e0"/><rect x="1256.3" y="208.3" width="3.200" height="2" fill="#1030e0"/><rect x="1344.6" y="208.3" width="3.200" height="2" fill="#1030e0"/><rect x="1404" y="208.3" width="3.200" height="2" fill="#1030e0"/><rect x="1433.5" y="208.3" width="3.200" height="2" fill="#1030e0"/></svg><svg style="left:230.2px;top:368px" width="684.400" height="315.200" viewBox="230.2 368 684.4 315.2"><path d="M324.8 368V683.200M349.5 368V683.200M374.2 368V683.200M398.9 368V683.200M423.6 368V683.200M448.3 368V683.200M473 368V683.200M497.7 368V683.200M522.4 368V683.200M547.1 368V683.200M571.8 368V683.200M596.5 368V683.200M621.2 368V683.200M645.9 368V683.200M670.6 368V683.200M695.3 368V683.200M720 368V683.200M744.7 368V683.200M769.4 368V683.200M794.1 368V683.200M818.8 368V683.200M324.8 377.4H818.8M324.8 402.1H818.8M324.8 426.8H818.8M324.8 451.5H818.8M324.8 476.2H818.8M324.8 500.9H818.8M324.8 525.6H818.8M324.8 550.3H818.8M324.8 575H818.8M324.8 599.7H818.8M324.8 624.4H818.8M324.8 649.1H818.8M324.8 673.8H818.8" stroke="#7c7c7c" stroke-width=".7" stroke-dasharray="1.600 .8" fill="none"/><path d="M399 377C374.4 393.6 399 443 399 476.2M399 377C430 353 498 377 547.4 377M547.4 377C580.3 377.2 624 353 646.6 377M646.6 377C662.6 393.6 646.2 443 646.2 476.2M399 476.2C399 518 390.6 579.4 399 599.6M399 599.6C407 620.4 432 599.6 449 599.6M449 525.6C465 513 514.6 525.6 547.4 525.6M449 525.6C432 538.4 449 575.4 449 599.6M449 599.6C449 616 442 641 449 649.2M449 649.2C455 657.4 475 645 486 649.2M486 649.2C496.6 653 500 669.6 510 674M510 674C520 676 535 674 547.4 674M547.4 674C580 674 629.4 682 646.2 674M646.2 624.4C646.2 641 662.6 665.6 646.2 674M596.8 624.4C605 641 629.4 624.4 646.2 624.4M596.8 525.6C596.8 558.6 588.6 608 596.8 624.4M399 476.2L646.2 476.2M547.4 377L547.4 674M547.4 476.2L547.4 476.2M547.4 525.6L646.2 525.6M646.2 476.2L646.2 624.4" stroke="#f81010" stroke-width="6.4" fill="none" stroke-linecap="butt" stroke-linejoin="round"/><path d="M399 377C374.4 393.6 399 443 399 476.2M399 377C430 353 498 377 547.4 377M547.4 377C580.3 377.2 624 353 646.6 377M646.6 377C662.6 393.6 646.2 443 646.2 476.2M399 476.2C399 518 390.6 579.4 399 599.6M399 599.6C407 620.4 432 599.6 449 599.6M449 525.6C465 513 514.6 525.6 547.4 525.6M449 525.6C432 538.4 449 575.4 449 599.6M449 599.6C449 616 442 641 449 649.2M449 649.2C455 657.4 475 645 486 649.2M486 649.2C496.6 653 500 669.6 510 674M510 674C520 676 535 674 547.4 674M547.4 674C580 674 629.4 682 646.2 674M646.2 624.4C646.2 641 662.6 665.6 646.2 674M596.8 624.4C605 641 629.4 624.4 646.2 624.4M596.8 525.6C596.8 558.6 588.6 608 596.8 624.4M399 476.2L646.2 476.2M547.4 377L547.4 674M547.4 476.2L547.4 476.2M547.4 525.6L646.2 525.6M646.2 476.2L646.2 624.4" stroke="#000" stroke-width="4.9" fill="none" stroke-linecap="square"/><path d="M399 377C374.4 393.6 399 443 399 476.2M399 377C430 353 498 377 547.4 377M547.4 377C580.3 377.2 624 353 646.6 377M646.6 377C662.6 393.6 646.2 443 646.2 476.2M399 476.2C399 518 390.6 579.4 399 599.6M399 599.6C407 620.4 432 599.6 449 599.6M449 525.6C465 513 514.6 525.6 547.4 525.6M449 525.6C432 538.4 449 575.4 449 599.6M449 599.6C449 616 442 641 449 649.2M449 649.2C455 657.4 475 645 486 649.2M486 649.2C496.6 653 500 669.6 510 674M510 674C520 676 535 674 547.4 674M547.4 674C580 674 629.4 682 646.2 674M646.2 624.4C646.2 641 662.6 665.6 646.2 674M596.8 624.4C605 641 629.4 624.4 646.2 624.4M596.8 525.6C596.8 558.6 588.6 608 596.8 624.4" stroke="#f81010" stroke-width="4.9" fill="none" stroke-dasharray=".7 11.300"/><path d="M399 476.2H646.2M547.400 525.600H646.200" stroke="#f81010" stroke-width="4.9" fill="none" stroke-dasharray=".7 17.600"/><path d="M399 377C374.4 393.6 399 443 399 476.2M399 377C430 353 498 377 547.4 377M547.4 377C580.3 377.2 624 353 646.6 377M646.6 377C662.6 393.6 646.2 443 646.2 476.2M399 476.2C399 518 390.6 579.4 399 599.6M399 599.6C407 620.4 432 599.6 449 599.6M449 525.6C465 513 514.6 525.6 547.4 525.6M449 525.6C432 538.4 449 575.4 449 599.6M449 599.6C449 616 442 641 449 649.2M449 649.2C455 657.4 475 645 486 649.2M486 649.2C496.6 653 500 669.6 510 674M510 674C520 676 535 674 547.4 674M547.4 674C580 674 629.4 682 646.2 674M646.2 624.4C646.2 641 662.6 665.6 646.2 674M596.8 624.4C605 641 629.4 624.4 646.2 624.4M596.8 525.6C596.8 558.6 588.6 608 596.8 624.4" stroke="#9a9a9a" stroke-width=".6" fill="none"/><path d="M399 377L374.4 393.6M399 377L412 368M646.6 377L662.6 393.6M646.6 377L637 368M449 525.6L465 513M449 525.6L432 538.4M399 599.6L390.6 579.4M399 599.6L407 620.4M449 649.2L442 641M449 649.2L455 657.4M596.8 624.4L588.6 608M596.8 624.4L605 641M646.2 674L662.6 665.6M646.2 674L629.4 682M486 649.2L475 645M486 649.2L496.6 653M510 674L500 669.6" stroke="#9a9a9a" stroke-width=".6" fill="none"/><path d="M396.6 374.600H649.600M396.600 374.600V677.400H649.600M396.600 525.600H522.400M522.400 374.600V677.400M649.600 374.600V480M649.600 624V677.400" stroke="#d020d0" stroke-width=".8" fill="none"/><path d="M522.4 525.600V489M522.400 509.600H538.600V525.600M522.400 525.600H561" stroke="#e0d800" stroke-width=".8" fill="none"/><path d="M520.8 491L522.400 484 524 491z" fill="#10a010"/><path d="M560.5 524.200L568 525.600 560.500 527z" fill="#ff1010"/><rect x="521.4" y="524.600" width="2" height="2" fill="#101060"/><rect x="373.1" y="392.6" width="2.600" height="2" fill="#10a010"/><rect x="661.3" y="392.6" width="2.600" height="2" fill="#10a010"/><rect x="397.7" y="442" width="2.600" height="2" fill="#10a010"/><rect x="546.1" y="409" width="2.600" height="2" fill="#10a010"/><rect x="546.1" y="442" width="2.600" height="2" fill="#10a010"/><rect x="644.9" y="442" width="2.600" height="2" fill="#10a010"/><rect x="496.7" y="376" width="2.600" height="2" fill="#10a010"/><rect x="578.7" y="376" width="2.600" height="2" fill="#10a010"/><rect x="447.1" y="475.2" width="2.600" height="2" fill="#10a010"/><rect x="496.7" y="475.2" width="2.600" height="2" fill="#10a010"/><rect x="570.7" y="475.2" width="2.600" height="2" fill="#10a010"/><rect x="603.7" y="475.2" width="2.600" height="2" fill="#10a010"/><rect x="637.1" y="475.2" width="2.600" height="2" fill="#10a010"/><rect x="546.1" y="491.6" width="2.600" height="2" fill="#10a010"/><rect x="644.9" y="491.6" width="2.600" height="2" fill="#10a010"/><rect x="546.1" y="508" width="2.600" height="2" fill="#10a010"/><rect x="644.9" y="508" width="2.600" height="2" fill="#10a010"/><rect x="397.7" y="517" width="2.600" height="2" fill="#10a010"/><rect x="463.7" y="512" width="2.600" height="2" fill="#10a010"/><rect x="430.7" y="537.4" width="2.600" height="2" fill="#10a010"/><rect x="447.7" y="574.4" width="2.600" height="2" fill="#10a010"/><rect x="389.3" y="578.4" width="2.600" height="2" fill="#10a010"/><rect x="430.7" y="598.6" width="2.600" height="2" fill="#10a010"/><rect x="405.7" y="619.4" width="2.600" height="2" fill="#10a010"/><rect x="447.7" y="615" width="2.600" height="2" fill="#10a010"/><rect x="546.1" y="574.4" width="2.600" height="2" fill="#10a010"/><rect x="595.5" y="557.6" width="2.600" height="2" fill="#10a010"/><rect x="644.9" y="557.6" width="2.600" height="2" fill="#10a010"/><rect x="644.9" y="590.4" width="2.600" height="2" fill="#10a010"/><rect x="587.3" y="607" width="2.600" height="2" fill="#10a010"/><rect x="578.7" y="524.6" width="2.600" height="2" fill="#10a010"/><rect x="611.7" y="524.6" width="2.600" height="2" fill="#10a010"/><rect x="628.1" y="524.6" width="2.600" height="2" fill="#10a010"/><rect x="546.1" y="623.4" width="2.600" height="2" fill="#10a010"/><rect x="628.1" y="623.4" width="2.600" height="2" fill="#10a010"/><rect x="440.7" y="640" width="2.600" height="2" fill="#10a010"/><rect x="453.7" y="656.4" width="2.600" height="2" fill="#10a010"/><rect x="473.7" y="644" width="2.600" height="2" fill="#10a010"/><rect x="495.3" y="652" width="2.600" height="2" fill="#10a010"/><rect x="498.7" y="668.6" width="2.600" height="2" fill="#10a010"/><rect x="533.7" y="673" width="2.600" height="2" fill="#10a010"/><rect x="578.7" y="673" width="2.600" height="2" fill="#10a010"/><rect x="628.1" y="681" width="2.600" height="2" fill="#10a010"/><rect x="661.3" y="664.6" width="2.600" height="2" fill="#10a010"/><rect x="644.9" y="640" width="2.600" height="2" fill="#10a010"/><rect x="603.7" y="640" width="2.600" height="2" fill="#10a010"/><rect x="513.3" y="524.6" width="2.600" height="2" fill="#10a010"/><rect x="397.5" y="425.5" width="3" height="2.200" fill="#f0a020"/><rect x="545.9" y="425.5" width="3" height="2.200" fill="#f0a020"/><rect x="644.7" y="425.5" width="3" height="2.200" fill="#f0a020"/><rect x="471.9" y="376.3" width="3" height="2.200" fill="#f0a020"/><rect x="595.3" y="376.3" width="3" height="2.200" fill="#f0a020"/><rect x="471.9" y="475.1" width="3" height="2.200" fill="#f0a020"/><rect x="582.9" y="475.1" width="3" height="2.200" fill="#f0a020"/><rect x="632.5" y="475.1" width="3" height="2.200" fill="#f0a020"/><rect x="545.9" y="500.3" width="3" height="2.200" fill="#f0a020"/><rect x="644.7" y="500.3" width="3" height="2.200" fill="#f0a020"/><rect x="397.5" y="537.3" width="3" height="2.200" fill="#f0a020"/><rect x="446.9" y="561.5" width="3" height="2.200" fill="#f0a020"/><rect x="422.1" y="598.5" width="3" height="2.200" fill="#f0a020"/><rect x="496.5" y="524.5" width="3" height="2.200" fill="#f0a020"/><rect x="570.5" y="524.5" width="3" height="2.200" fill="#f0a020"/><rect x="619.9" y="524.5" width="3" height="2.200" fill="#f0a020"/><rect x="595.3" y="574.3" width="3" height="2.200" fill="#f0a020"/><rect x="644.7" y="574.3" width="3" height="2.200" fill="#f0a020"/><rect x="545.9" y="598.5" width="3" height="2.200" fill="#f0a020"/><rect x="446.9" y="623.3" width="3" height="2.200" fill="#f0a020"/><rect x="619.9" y="623.3" width="3" height="2.200" fill="#f0a020"/><rect x="465.5" y="648.1" width="3" height="2.200" fill="#f0a020"/><rect x="496.5" y="660.5" width="3" height="2.200" fill="#f0a020"/><rect x="526.9" y="672.9" width="3" height="2.200" fill="#f0a020"/><rect x="595.3" y="672.9" width="3" height="2.200" fill="#f0a020"/><rect x="644.7" y="648.1" width="3" height="2.200" fill="#f0a020"/><path d="M397.5 375.5l3 3m0-3l-3 3M545.9 375.5l3 3m0-3l-3 3M645.1 375.5l3 3m0-3l-3 3M397.5 474.7l3 3m0-3l-3 3M545.9 474.7l3 3m0-3l-3 3M644.7 474.7l3 3m0-3l-3 3M619.9 474.7l3 3m0-3l-3 3M447.5 524.1l3 3m0-3l-3 3M545.9 524.1l3 3m0-3l-3 3M595.3 524.1l3 3m0-3l-3 3M644.7 524.1l3 3m0-3l-3 3M397.5 598.1l3 3m0-3l-3 3M447.5 598.1l3 3m0-3l-3 3M447.5 647.7l3 3m0-3l-3 3M484.5 647.7l3 3m0-3l-3 3M508.5 672.5l3 3m0-3l-3 3M545.9 672.5l3 3m0-3l-3 3M644.7 672.5l3 3m0-3l-3 3M595.3 622.9l3 3m0-3l-3 3M644.7 622.9l3 3m0-3l-3 3" stroke="#2040ff" stroke-width=".7" fill="none"/></svg><svg style="left:915.6px;top:368.0px;overflow:hidden" width="684.6" height="315.2" viewBox="915.6 368.0 684.6 315.2"><path d="M2096.5 6192.2L926.3 466.1M1846.9 2828.5L959 456.6M1777.8 1897.3L988.8 447.9M1745.5 1460.6L1016.3 439.9M1726.7 1207.2L1041.5 432.5M1714.4 1041.7L1064.8 425.7M1705.7 925.1L1086.5 419.4M1699.3 838.6L1106.6 413.5M1694.3 771.8L1125.3 408M1690.4 718.6L1142.8 402.9M1687.2 675.4L1159.1 398.1M1684.5 639.5L1174.5 393.6M1682.3 609.2L1189 389.4M1680.4 583.3L1202.6 385.4M1678.7 561L1215.4 381.7M1677.3 541.4L1227.5 378.1M1676 524.2L1239 374.8M1674.9 508.9L1249.9 371.6M1673.8 495.3L1260.2 368.6M1672.9 483L1270 365.7M1672.1 472L1279.3 363M2096.5 6192.2L1672.1 472M1400.8 2787.8L1634.9 461.6M1212 1864.3L1601 452.2M1124.1 1434L1570 443.6M1073.2 1185L1541.6 435.8M1040.1 1022.8L1515.4 428.5M1016.7 908.7L1491.3 421.8M999.4 824L1468.9 415.6M986.1 758.7L1448.1 409.8M975.5 706.8L1428.8 404.5M966.9 664.6L1410.7 399.4M959.7 629.5L1393.7 394.7M953.7 600L1377.9 390.3M948.5 574.7L1363 386.2M944 552.9L1348.9 382.3M940.1 533.8L1335.7 378.6M936.7 517.1L1323.2 375.2M933.7 502.2L1311.3 371.9M931 488.9L1300.1 368.8M928.5 476.9L1289.4 365.8M926.3 466.1L1279.3 363" stroke="#7a7e7a" stroke-width=".6" fill="none"/><filter id="tx" x="0" y="0" width="100%" height="100%"><feTurbulence type="fractalNoise" baseFrequency=".8" numOctaves="1" seed="7" result="n"/><feColorMatrix in="n" type="matrix" values="0 0 0 0 0 0 0 0 0 0 0 0 0 0 0 1.300 0 0 0 -.42" result="a"/><feComposite in="a" in2="SourceGraphic" operator="in" result="d"/><feMerge><feMergeNode in="SourceGraphic"/><feMergeNode in="d"/></feMerge></filter><g filter="url(#tx)"><path d="M1246.5 404.1L1243.1 404.3L1241.4 362.7L1245.2 362.5z" fill="#d4c550" stroke="#d4c550" stroke-width=".5"/><path d="M1245.2 362.5L1241.4 362.7" stroke="#f028f0" stroke-width=".65" fill="none"/><path d="M1249.2 404.3L1245.8 404.1L1244.5 362.5L1248.2 362.7z" fill="#d4c550" stroke="#d4c550" stroke-width=".5"/><path d="M1248.2 362.7L1244.5 362.5" stroke="#f028f0" stroke-width=".65" fill="none"/><path d="M1243.1 404.3L1239.7 404.8L1237.8 363.1L1241.4 362.7z" fill="#d4c550" stroke="#d4c550" stroke-width=".5"/><path d="M1241.4 362.7L1237.8 363.1" stroke="#f028f0" stroke-width=".65" fill="none"/><path d="M1252.4 404.9L1249.2 404.3L1248.2 362.7L1251.8 363.2z" fill="#d4c550" stroke="#d4c550" stroke-width=".5"/><path d="M1251.8 363.2L1248.2 362.7" stroke="#f028f0" stroke-width=".65" fill="none"/><path d="M1239.7 404.8L1236.2 405.6L1233.8 363.7L1237.8 363.1z" fill="#d4c550" stroke="#d4c550" stroke-width=".5"/><path d="M1237.8 363.1L1233.8 363.7" stroke="#f028f0" stroke-width=".65" fill="none"/><path d="M1240.4 361.3L1244.8 361.1L1245.2 362.5L1241.4 362.7z" fill="#46411a" stroke="#46411a" stroke-width=".5"/><path d="M1240.4 361.3L1244.8 361.1M1241.4 362.7L1245.2 362.5" stroke="#f028f0" stroke-width=".65" fill="none"/><path d="M1255.8 405.8L1252.4 404.9L1251.8 363.2L1255.5 363.9z" fill="#d4c550" stroke="#d4c550" stroke-width=".5"/><path d="M1255.5 363.9L1251.8 363.2" stroke="#f028f0" stroke-width=".65" fill="none"/><path d="M1245.5 361.1L1249.8 361.3L1248.2 362.7L1244.5 362.5z" fill="#46411a" stroke="#46411a" stroke-width=".5"/><path d="M1245.5 361.1L1249.8 361.3M1244.5 362.5L1248.2 362.7" stroke="#f028f0" stroke-width=".65" fill="none"/><path d="M1235.8 361.8L1240.4 361.3L1241.4 362.7L1237.8 363.1z" fill="#46411a" stroke="#46411a" stroke-width=".5"/><path d="M1235.8 361.8L1240.4 361.3M1237.8 363.1L1241.4 362.7" stroke="#f028f0" stroke-width=".65" fill="none"/><path d="M1236.2 405.6L1232.4 406.7L1229.6 364.6L1233.8 363.7z" fill="#d4c550" stroke="#d4c550" stroke-width=".5"/><path d="M1233.8 363.7L1229.6 364.6" stroke="#f028f0" stroke-width=".65" fill="none"/><path d="M1249.8 361.3L1254.3 361.9L1251.8 363.2L1248.2 362.7z" fill="#46411a" stroke="#46411a" stroke-width=".5"/><path d="M1249.8 361.3L1254.3 361.9M1248.2 362.7L1251.8 363.2" stroke="#f028f0" stroke-width=".65" fill="none"/><path d="M1231.2 362.5L1235.8 361.8L1237.8 363.1L1233.8 363.7z" fill="#46411a" stroke="#46411a" stroke-width=".5"/><path d="M1231.2 362.5L1235.8 361.8M1233.8 363.7L1237.8 363.1" stroke="#f028f0" stroke-width=".65" fill="none"/><path d="M1259.3 407L1255.8 405.8L1255.5 363.9L1259.4 364.8z" fill="#c6b84b" stroke="#c6b84b" stroke-width=".5"/><path d="M1259.4 364.8L1255.5 363.9" stroke="#f028f0" stroke-width=".65" fill="none"/><path d="M1254.3 361.9L1258.6 362.7L1255.5 363.9L1251.8 363.2z" fill="#46411b" stroke="#46411b" stroke-width=".5"/><path d="M1254.3 361.9L1258.6 362.7M1251.8 363.2L1255.5 363.9" stroke="#f028f0" stroke-width=".65" fill="none"/><path d="M1232.4 406.7L1228.4 408.1L1225.1 365.8L1229.6 364.6z" fill="#cdbf4d" stroke="#cdbf4d" stroke-width=".5"/><path d="M1229.6 364.6L1225.1 365.8" stroke="#f028f0" stroke-width=".65" fill="none"/><path d="M1226.5 363.5L1231.2 362.5L1233.8 363.7L1229.6 364.6z" fill="#47421b" stroke="#47421b" stroke-width=".5"/><path d="M1226.5 363.5L1231.2 362.5M1229.6 364.6L1233.8 363.7" stroke="#f028f0" stroke-width=".65" fill="none"/><path d="M1263 408.4L1259.3 407L1259.4 364.8L1263.5 366z" fill="#b9ac46" stroke="#b9ac46" stroke-width=".5"/><path d="M1263.5 366L1259.4 364.8" stroke="#f028f0" stroke-width=".65" fill="none"/><path d="M1258.6 362.7L1262.9 363.7L1259.4 364.8L1255.5 363.9z" fill="#47421b" stroke="#47421b" stroke-width=".5"/><path d="M1258.6 362.7L1262.9 363.7M1255.5 363.9L1259.4 364.8" stroke="#f028f0" stroke-width=".65" fill="none"/><path d="M1228.4 408.1L1224.2 409.8L1220.5 367.1L1225.1 365.8z" fill="#c5b74a" stroke="#c5b74a" stroke-width=".5"/><path d="M1225.1 365.8L1220.5 367.1" stroke="#f028f0" stroke-width=".65" fill="none"/><path d="M1221.7 364.7L1226.5 363.5L1229.6 364.6L1225.1 365.8z" fill="#47421b" stroke="#47421b" stroke-width=".5"/><path d="M1221.7 364.7L1226.5 363.5M1225.1 365.8L1229.6 364.6" stroke="#f028f0" stroke-width=".65" fill="none"/><path d="M1262.9 363.7L1267.2 365L1263.5 366L1259.4 364.8z" fill="#48431b" stroke="#48431b" stroke-width=".5"/><path d="M1262.9 363.7L1267.2 365M1259.4 364.8L1263.5 366" stroke="#f028f0" stroke-width=".65" fill="none"/><path d="M1266.7 410.1L1263 408.4L1263.5 366L1267.6 367.4z" fill="#b0a342" stroke="#b0a342" stroke-width=".5"/><path d="M1267.6 367.4L1263.5 366" stroke="#f028f0" stroke-width=".65" fill="none"/><path d="M1216.9 366.1L1221.7 364.7L1225.1 365.8L1220.5 367.1z" fill="#48431b" stroke="#48431b" stroke-width=".5"/><path d="M1216.9 366.1L1221.7 364.7M1220.5 367.1L1225.1 365.8" stroke="#f028f0" stroke-width=".65" fill="none"/><path d="M1224.2 409.8L1219.8 411.7L1215.6 368.6L1220.5 367.1z" fill="#c0b349" stroke="#c0b349" stroke-width=".5"/><path d="M1220.5 367.1L1215.6 368.6" stroke="#f028f0" stroke-width=".65" fill="none"/><path d="M1267.2 365L1271.6 366.4L1267.6 367.4L1263.5 366z" fill="#49431b" stroke="#49431b" stroke-width=".5"/><path d="M1267.2 365L1271.6 366.4M1263.5 366L1267.6 367.4" stroke="#f028f0" stroke-width=".65" fill="none"/><path d="M1270.6 412.1L1266.7 410.1L1267.6 367.4L1272 368.9z" fill="#aa9e40" stroke="#aa9e40" stroke-width=".5"/><path d="M1272 368.9L1267.6 367.4" stroke="#f028f0" stroke-width=".65" fill="none"/><clipPath id="o6"><path d="M1228.2 390.6L1238.5 387.9L1237.6 369.7L1226.9 372.1z"/></clipPath><path d="M1228.2 390.6L1238.5 387.9L1237.6 369.7L1226.9 372.1z" fill="#000" stroke="#e020e0" stroke-width=".6"/><g clip-path="url(#o6)"><path d="M1228.2 390.6L1238.5 387.9L1235.7 386.6L1225.5 389.2z" fill="#565020"/><path d="M1238.5 387.9L1235.7 386.6L1234.7 368.5L1237.6 369.7z" fill="#766d2c"/></g><path d="M1211.8 367.6L1216.9 366.1L1220.5 367.1L1215.6 368.6z" fill="#49441b" stroke="#49441b" stroke-width=".5"/><path d="M1211.8 367.6L1216.9 366.1M1215.6 368.6L1220.5 367.1" stroke="#f028f0" stroke-width=".65" fill="none"/><path d="M1219.8 411.7L1215.3 413.8L1210.4 370.3L1215.6 368.6z" fill="#beb148" stroke="#beb148" stroke-width=".5"/><path d="M1215.6 368.6L1210.4 370.3" stroke="#f028f0" stroke-width=".65" fill="none"/><path d="M1271.6 366.4L1276.1 368L1272 368.9L1267.6 367.4z" fill="#4a441c" stroke="#4a441c" stroke-width=".5"/><path d="M1271.6 366.4L1276.1 368M1267.6 367.4L1272 368.9" stroke="#f028f0" stroke-width=".65" fill="none"/><path d="M1274.7 414.2L1270.6 412.1L1272 368.9L1276.5 370.7z" fill="#a4993e" stroke="#a4993e" stroke-width=".5"/><path d="M1276.5 370.7L1272 368.9" stroke="#f028f0" stroke-width=".65" fill="none"/><path d="M1206.6 369.3L1211.8 367.6L1215.6 368.6L1210.4 370.3z" fill="#4a451c" stroke="#4a451c" stroke-width=".5"/><path d="M1206.6 369.3L1211.8 367.6M1210.4 370.3L1215.6 368.6" stroke="#f028f0" stroke-width=".65" fill="none"/><path d="M1215.3 413.8L1210.6 415.9L1205.1 372.1L1210.4 370.3z" fill="#beb148" stroke="#beb148" stroke-width=".5"/><path d="M1210.4 370.3L1205.1 372.1" stroke="#f028f0" stroke-width=".65" fill="none"/><path d="M1276.1 368L1280.7 369.7L1276.5 370.7L1272 368.9z" fill="#4b451c" stroke="#4b451c" stroke-width=".5"/><path d="M1276.1 368L1280.7 369.7M1272 368.9L1276.5 370.7" stroke="#f028f0" stroke-width=".65" fill="none"/><path d="M1278.8 416.4L1274.7 414.2L1276.5 370.7L1281.2 372.5z" fill="#a4983e" stroke="#a4983e" stroke-width=".5"/><path d="M1281.2 372.5L1276.5 370.7" stroke="#f028f0" stroke-width=".65" fill="none"/><path d="M1201.3 371.1L1206.6 369.3L1210.4 370.3L1205.1 372.1z" fill="#4b451c" stroke="#4b451c" stroke-width=".5"/><path d="M1201.3 371.1L1206.6 369.3M1205.1 372.1L1210.4 370.3" stroke="#f028f0" stroke-width=".65" fill="none"/><path d="M1210.6 415.9L1205.7 418.2L1199.6 374L1205.1 372.1z" fill="#c1b349" stroke="#c1b349" stroke-width=".5"/><path d="M1205.1 372.1L1199.6 374" stroke="#f028f0" stroke-width=".65" fill="none"/><path d="M1195.8 372.9L1201.3 371.1L1205.1 372.1L1199.6 374z" fill="#4c461d" stroke="#4c461d" stroke-width=".5"/><path d="M1195.8 372.9L1201.3 371.1M1199.6 374L1205.1 372.1" stroke="#f028f0" stroke-width=".65" fill="none"/><path d="M1205.7 418.2L1200.7 420.5L1193.9 375.8L1199.6 374z" fill="#c5b74a" stroke="#c5b74a" stroke-width=".5"/><path d="M1199.6 374L1193.9 375.8" stroke="#f028f0" stroke-width=".65" fill="none"/><path d="M1280.7 369.7L1285.4 371.5L1281.2 372.5L1276.5 370.7z" fill="#4c461d" stroke="#4c461d" stroke-width=".5"/><path d="M1280.7 369.7L1285.4 371.5M1276.5 370.7L1281.2 372.5" stroke="#f028f0" stroke-width=".65" fill="none"/><path d="M1283.2 418.8L1278.8 416.4L1281.2 372.5L1286 374.4z" fill="#a99d40" stroke="#a99d40" stroke-width=".5"/><path d="M1286 374.4L1281.2 372.5" stroke="#f028f0" stroke-width=".65" fill="none"/><path d="M1200.7 420.5L1195.6 422.8L1188.1 377.7L1193.9 375.8z" fill="#cbbc4c" stroke="#cbbc4c" stroke-width=".5"/><path d="M1193.9 375.8L1188.1 377.7" stroke="#f028f0" stroke-width=".65" fill="none"/><path d="M1190.1 374.7L1195.8 372.9L1199.6 374L1193.9 375.8z" fill="#4d471d" stroke="#4d471d" stroke-width=".5"/><path d="M1190.1 374.7L1195.8 372.9M1193.9 375.8L1199.6 374" stroke="#f028f0" stroke-width=".65" fill="none"/><path d="M1285.4 371.5L1290.3 373.3L1286 374.4L1281.2 372.5z" fill="#4d481d" stroke="#4d481d" stroke-width=".5"/><path d="M1285.4 371.5L1290.3 373.3M1281.2 372.5L1286 374.4" stroke="#f028f0" stroke-width=".65" fill="none"/><path d="M1287.6 421.1L1283.2 418.8L1286 374.4L1291 376.3z" fill="#ada141" stroke="#ada141" stroke-width=".5"/><path d="M1291 376.3L1286 374.4" stroke="#f028f0" stroke-width=".65" fill="none"/><path d="M1195.6 422.8L1190.4 425L1182.1 379.5L1188.1 377.7z" fill="#d2c34f" stroke="#d2c34f" stroke-width=".5"/><path d="M1188.1 377.7L1182.1 379.5" stroke="#f028f0" stroke-width=".65" fill="none"/><path d="M1184.4 376.5L1190.1 374.7L1193.9 375.8L1188.1 377.7z" fill="#4e481d" stroke="#4e481d" stroke-width=".5"/><path d="M1184.4 376.5L1190.1 374.7M1188.1 377.7L1193.9 375.8" stroke="#f028f0" stroke-width=".65" fill="none"/><path d="M1292.2 423.5L1287.6 421.1L1291 376.3L1296.3 378.3z" fill="#b4a744" stroke="#b4a744" stroke-width=".5"/><path d="M1296.3 378.3L1291 376.3" stroke="#f028f0" stroke-width=".65" fill="none"/><path d="M1290.3 373.3L1295.3 375.2L1291 376.3L1286 374.4z" fill="#4e491e" stroke="#4e491e" stroke-width=".5"/><path d="M1290.3 373.3L1295.3 375.2M1286 374.4L1291 376.3" stroke="#f028f0" stroke-width=".65" fill="none"/><path d="M1182.1 425.4L1185.1 427.1L1176.1 381.2L1172.8 379.8z" fill="#615a25" stroke="#615a25" stroke-width=".5"/><path d="M1190.4 425L1185.1 427.1L1176.1 381.2L1182.1 379.5z" fill="#d4c550" stroke="#d4c550" stroke-width=".5"/><path d="M1182.1 379.5L1176.1 381.2" stroke="#f028f0" stroke-width=".65" fill="none"/><path d="M1178.6 378.2L1184.4 376.5L1188.1 377.7L1182.1 379.5z" fill="#4f491e" stroke="#4f491e" stroke-width=".5"/><path d="M1178.6 378.2L1184.4 376.5M1182.1 379.5L1188.1 377.7" stroke="#f028f0" stroke-width=".65" fill="none"/><clipPath id="o5"><path d="M1194.5 403.9L1206.4 399.1L1203.9 379.8L1191.3 384.2z"/></clipPath><path d="M1194.5 403.9L1206.4 399.1L1203.9 379.8L1191.3 384.2z" fill="#000" stroke="#e020e0" stroke-width=".6"/><g clip-path="url(#o5)"><path d="M1194.5 403.9L1206.4 399.1L1202.7 397.9L1190.8 402.6z" fill="#585221"/><path d="M1206.4 399.1L1202.7 397.9L1200.1 378.7L1203.9 379.8z" fill="#aa9e40"/></g><path d="M1296.9 425.8L1292.2 423.5L1296.3 378.3L1301.6 380.2z" fill="#bcaf47" stroke="#bcaf47" stroke-width=".5"/><path d="M1301.6 380.2L1296.3 378.3" stroke="#f028f0" stroke-width=".65" fill="none"/><path d="M1185 427.1L1176.8 430L1166.5 383.7L1176 381.2z" fill="#d4c550" stroke="#d4c550" stroke-width=".5"/><path d="M1176 381.2L1166.5 383.7" stroke="#f028f0" stroke-width=".65" fill="none"/><path d="M1295.3 375.2L1300.4 377.1L1296.3 378.3L1291 376.3z" fill="#4f4a1e" stroke="#4f4a1e" stroke-width=".5"/><path d="M1295.3 375.2L1300.4 377.1M1291 376.3L1296.3 378.3" stroke="#f028f0" stroke-width=".65" fill="none"/><path d="M1172.8 379.8L1178.6 378.2L1182.1 379.5L1176.1 381.2z" fill="#504a1e" stroke="#504a1e" stroke-width=".5"/><path d="M1172.8 379.8L1178.6 378.2M1176.1 381.2L1182.1 379.5" stroke="#f028f0" stroke-width=".65" fill="none"/><path d="M1176.8 430L1167.5 433.2L1155.9 386.3L1166.5 383.7z" fill="#d4c550" stroke="#d4c550" stroke-width=".5"/><path d="M1166.5 383.7L1155.9 386.3" stroke="#f028f0" stroke-width=".65" fill="none"/><path d="M1305.2 426.3L1301.7 427.9L1307.1 381.9L1310.9 380.6z" fill="#8f8536" stroke="#8f8536" stroke-width=".5"/><path d="M1301.7 427.9L1296.9 425.8L1301.6 380.2L1307.1 381.9z" fill="#c4b64a" stroke="#c4b64a" stroke-width=".5"/><path d="M1307.1 381.9L1301.6 380.2" stroke="#f028f0" stroke-width=".65" fill="none"/><path d="M1163.6 382.2L1172.9 379.8L1176 381.2L1166.5 383.7z" fill="#514b1e" stroke="#514b1e" stroke-width=".5"/><path d="M1163.6 382.2L1172.9 379.8M1166.5 383.7L1176 381.2" stroke="#f028f0" stroke-width=".65" fill="none"/><path d="M1300.4 377.1L1305.6 378.9L1301.6 380.2L1296.3 378.3z" fill="#514b1e" stroke="#514b1e" stroke-width=".5"/><path d="M1300.4 377.1L1305.6 378.9M1296.3 378.3L1301.6 380.2" stroke="#f028f0" stroke-width=".65" fill="none"/><path d="M1193.6 434.2L1181.3 427.1L1171.9 381.2L1185.3 387.2z" fill="#605924" stroke="#605924" stroke-width=".5"/><path d="M1185.3 387.2L1171.9 381.2" stroke="#f028f0" stroke-width=".65" fill="none"/><path d="M1167.5 433.2L1157.5 436.4L1144.3 389L1155.9 386.3z" fill="#d4c550" stroke="#d4c550" stroke-width=".5"/><path d="M1155.9 386.3L1144.3 389" stroke="#f028f0" stroke-width=".65" fill="none"/><path d="M1153.2 384.7L1163.6 382.2L1166.5 383.7L1155.9 386.3z" fill="#524c1f" stroke="#524c1f" stroke-width=".5"/><path d="M1153.2 384.7L1163.6 382.2M1155.9 386.3L1166.5 383.7" stroke="#f028f0" stroke-width=".65" fill="none"/><path d="M1305.6 378.9L1310.9 380.6L1307.1 381.9L1301.6 380.2z" fill="#524c1f" stroke="#524c1f" stroke-width=".5"/><path d="M1305.6 378.9L1310.9 380.6M1301.6 380.2L1307.1 381.9" stroke="#f028f0" stroke-width=".65" fill="none"/><path d="M1157.5 436.4L1146.8 439.8L1131.9 391.9L1144.3 389z" fill="#d4c550" stroke="#d4c550" stroke-width=".5"/><path d="M1144.3 389L1131.9 391.9" stroke="#f028f0" stroke-width=".65" fill="none"/><path d="M1177 379.8L1190.5 385.7L1185.3 387.2L1171.9 381.2z" fill="#524d1f" stroke="#524d1f" stroke-width=".5"/><path d="M1177 379.8L1190.5 385.7M1171.9 381.2L1185.3 387.2" stroke="#f028f0" stroke-width=".65" fill="none"/><path d="M1319.1 435.1L1301.8 427.9L1307.1 381.9L1326.9 387.9z" fill="#d0c24f" stroke="#d0c24f" stroke-width=".5"/><path d="M1326.9 387.9L1307.1 381.9" stroke="#f028f0" stroke-width=".65" fill="none"/><path d="M1141.8 387.3L1153.2 384.7L1155.9 386.3L1144.3 389z" fill="#524d1f" stroke="#524d1f" stroke-width=".5"/><path d="M1141.8 387.3L1153.2 384.7M1144.3 389L1155.9 386.3" stroke="#f028f0" stroke-width=".65" fill="none"/><path d="M1146.8 439.8L1135.5 443.4L1118.9 394.8L1131.9 391.9z" fill="#d4c550" stroke="#d4c550" stroke-width=".5"/><path d="M1131.9 391.9L1118.9 394.8" stroke="#f028f0" stroke-width=".65" fill="none"/><path d="M1305.6 428L1291.6 435L1295.8 387.8L1311.4 381.9z" fill="#867d33" stroke="#867d33" stroke-width=".5"/><path d="M1311.4 381.9L1295.8 387.8" stroke="#f028f0" stroke-width=".65" fill="none"/><path d="M1129.5 390.1L1141.8 387.3L1144.3 389L1131.9 391.9z" fill="#534d1f" stroke="#534d1f" stroke-width=".5"/><path d="M1129.5 390.1L1141.8 387.3M1131.9 391.9L1144.3 389" stroke="#f028f0" stroke-width=".65" fill="none"/><path d="M1135.5 443.4L1124 447L1105.3 398L1118.9 394.8z" fill="#d4c550" stroke="#d4c550" stroke-width=".5"/><path d="M1118.9 394.8L1105.3 398" stroke="#f028f0" stroke-width=".65" fill="none"/><path d="M1310.9 380.6L1330.6 386.4L1326.9 387.9L1307.1 381.9z" fill="#544e20" stroke="#544e20" stroke-width=".5"/><path d="M1310.9 380.6L1330.6 386.4M1307.1 381.9L1326.9 387.9" stroke="#f028f0" stroke-width=".65" fill="none"/><path d="M1124 447L1112.2 450.8L1091.5 401.2L1105.3 398z" fill="#d4c550" stroke="#d4c550" stroke-width=".5"/><path d="M1105.3 398L1091.5 401.2" stroke="#f028f0" stroke-width=".65" fill="none"/><path d="M1116.6 393L1129.5 390.1L1131.9 391.9L1118.9 394.8z" fill="#544e20" stroke="#544e20" stroke-width=".5"/><path d="M1116.6 393L1129.5 390.1M1118.9 394.8L1131.9 391.9" stroke="#f028f0" stroke-width=".65" fill="none"/><path d="M1112.2 450.8L1100.6 454.7L1077.7 404.5L1091.5 401.2z" fill="#d4c550" stroke="#d4c550" stroke-width=".5"/><path d="M1091.5 401.2L1077.7 404.5" stroke="#f028f0" stroke-width=".65" fill="none"/><path d="M1291.1 386.2L1306.7 380.5L1311.4 381.9L1295.8 387.8z" fill="#544e20" stroke="#544e20" stroke-width=".5"/><path d="M1291.1 386.2L1306.7 380.5M1295.8 387.8L1311.4 381.9" stroke="#f028f0" stroke-width=".65" fill="none"/><path d="M1103.2 396L1116.6 393L1118.9 394.8L1105.3 398z" fill="#554f20" stroke="#554f20" stroke-width=".5"/><path d="M1103.2 396L1116.6 393M1105.3 398L1118.9 394.8" stroke="#f028f0" stroke-width=".65" fill="none"/><path d="M1100.6 454.7L1089.2 458.6L1064.1 407.9L1077.7 404.5z" fill="#d4c550" stroke="#d4c550" stroke-width=".5"/><path d="M1077.7 404.5L1064.1 407.9" stroke="#f028f0" stroke-width=".65" fill="none"/><clipPath id="o4"><path d="M1154.8 416.7L1168.5 412.7L1163.8 392.3L1149.2 396z"/></clipPath><path d="M1154.8 416.7L1168.5 412.7L1163.8 392.3L1149.2 396z" fill="#000" stroke="#e020e0" stroke-width=".6"/><g clip-path="url(#o4)"><path d="M1154.8 416.7L1168.5 412.7L1165.8 410.9L1152.2 414.8z" fill="#5a5322"/><path d="M1168.5 412.7L1165.8 410.9L1161 390.6L1163.8 392.3z" fill="#595221"/></g><path d="M1089.2 458.6L1078.3 462.6L1051 411.3L1064.1 407.9z" fill="#d4c550" stroke="#d4c550" stroke-width=".5"/><path d="M1064.1 407.9L1051 411.3" stroke="#f028f0" stroke-width=".65" fill="none"/><path d="M1089.4 399.2L1103.2 396L1105.3 398L1091.5 401.2z" fill="#554f20" stroke="#554f20" stroke-width=".5"/><path d="M1089.4 399.2L1103.2 396M1091.5 401.2L1105.3 398" stroke="#f028f0" stroke-width=".65" fill="none"/><path d="M1337.8 443L1319.1 435.1L1326.9 387.9L1348.5 394.5z" fill="#d4c550" stroke="#d4c550" stroke-width=".5"/><path d="M1348.5 394.5L1326.9 387.9" stroke="#f028f0" stroke-width=".65" fill="none"/><path d="M1078.3 462.6L1068.3 466.6L1038.8 414.8L1051 411.3z" fill="#d4c550" stroke="#d4c550" stroke-width=".5"/><path d="M1051 411.3L1038.8 414.8" stroke="#f028f0" stroke-width=".65" fill="none"/><path d="M1207 442L1193.6 434.2L1185.3 387.2L1200 393.7z" fill="#625b25" stroke="#625b25" stroke-width=".5"/><path d="M1200 393.7L1185.3 387.2" stroke="#f028f0" stroke-width=".65" fill="none"/><path d="M1075.5 402.4L1089.4 399.2L1091.5 401.2L1077.7 404.5z" fill="#554f20" stroke="#554f20" stroke-width=".5"/><path d="M1075.5 402.4L1089.4 399.2M1077.7 404.5L1091.5 401.2" stroke="#f028f0" stroke-width=".65" fill="none"/><path d="M1068.3 466.6L1059.4 470.6L1027.9 418.3L1038.8 414.8z" fill="#d4c550" stroke="#d4c550" stroke-width=".5"/><path d="M1038.8 414.8L1027.9 418.3" stroke="#f028f0" stroke-width=".65" fill="none"/><path d="M1061.8 405.8L1075.5 402.4L1077.7 404.5L1064.1 407.9z" fill="#554f20" stroke="#554f20" stroke-width=".5"/><path d="M1061.8 405.8L1075.5 402.4M1064.1 407.9L1077.7 404.5" stroke="#f028f0" stroke-width=".65" fill="none"/><path d="M1341.1 441L1337.8 443L1348.5 394.5L1352.1 392.9z" fill="#5f5824" stroke="#5f5824" stroke-width=".5"/><path d="M1059.4 470.6L1052 474.4L1018.6 421.7L1027.9 418.3z" fill="#d4c550" stroke="#d4c550" stroke-width=".5"/><path d="M1027.9 418.3L1018.6 421.7" stroke="#f028f0" stroke-width=".65" fill="none"/><path d="M1048.4 409.3L1061.8 405.8L1064.1 407.9L1051 411.3z" fill="#554f20" stroke="#554f20" stroke-width=".5"/><path d="M1048.4 409.3L1061.8 405.8M1051 411.3L1064.1 407.9" stroke="#f028f0" stroke-width=".65" fill="none"/><path d="M1040.8 477L1046 478.3L1011 425.2L1005.2 424z" fill="#5f5824" stroke="#5f5824" stroke-width=".5"/><path d="M1035.7 412.9L1048.4 409.3L1051 411.3L1038.8 414.8z" fill="#554f20" stroke="#554f20" stroke-width=".5"/><path d="M1035.7 412.9L1048.4 409.3M1038.8 414.8L1051 411.3" stroke="#f028f0" stroke-width=".65" fill="none"/><path d="M1330.6 386.4L1352.1 392.9L1348.5 394.5L1326.9 387.9z" fill="#554f20" stroke="#554f20" stroke-width=".5"/><path d="M1330.6 386.4L1352.1 392.9M1326.9 387.9L1348.5 394.5" stroke="#f028f0" stroke-width=".65" fill="none"/><path d="M1052 474.4L1046 478.3L1011 425.2L1018.6 421.7z" fill="#d4c550" stroke="#d4c550" stroke-width=".5"/><path d="M1018.6 421.7L1011 425.2" stroke="#f028f0" stroke-width=".65" fill="none"/><path d="M1291.6 435L1276.4 442.5L1278.8 394.2L1295.8 387.8z" fill="#9a8f3a" stroke="#9a8f3a" stroke-width=".5"/><path d="M1295.8 387.8L1278.8 394.2" stroke="#f028f0" stroke-width=".65" fill="none"/><path d="M1024 416.5L1035.7 412.9L1038.8 414.8L1027.9 418.3z" fill="#564f20" stroke="#564f20" stroke-width=".5"/><path d="M1024 416.5L1035.7 412.9M1027.9 418.3L1038.8 414.8" stroke="#f028f0" stroke-width=".65" fill="none"/><clipPath id="o3"><path d="M1121.8 426L1138.5 421.3L1131.8 400.2L1113.9 404.6z"/></clipPath><path d="M1121.8 426L1138.5 421.3L1131.8 400.2L1113.9 404.6z" fill="#000" stroke="#e020e0" stroke-width=".6"/><g clip-path="url(#o3)"><path d="M1121.8 426L1138.5 421.3L1136.2 419.3L1119.6 423.9z" fill="#5a5422"/><path d="M1138.5 421.3L1136.2 419.3L1129.4 398.3L1131.8 400.2z" fill="#443f1a"/></g><path d="M1190.5 385.7L1205.3 392.1L1200 393.7L1185.3 387.2z" fill="#564f20" stroke="#564f20" stroke-width=".5"/><path d="M1190.5 385.7L1205.3 392.1M1185.3 387.2L1200 393.7" stroke="#f028f0" stroke-width=".65" fill="none"/><path d="M1046.7 477.8L1042.7 481.5L1006.6 428L1011.9 424.7z" fill="#aea142" stroke="#aea142" stroke-width=".5"/><path d="M1011.9 424.7L1006.6 428" stroke="#f028f0" stroke-width=".65" fill="none"/><path d="M1013.5 420.3L1024 416.5L1027.9 418.3L1018.6 421.7z" fill="#565020" stroke="#565020" stroke-width=".5"/><path d="M1013.5 420.3L1024 416.5M1018.6 421.7L1027.9 418.3" stroke="#f028f0" stroke-width=".65" fill="none"/><path d="M1005.2 424L1013.5 420.3L1018.6 421.7L1011 425.2z" fill="#565020" stroke="#565020" stroke-width=".5"/><path d="M1005.2 424L1013.5 420.3M1011 425.2L1018.6 421.7" stroke="#f028f0" stroke-width=".65" fill="none"/><path d="M1365.5 454.5L1337.8 443L1348.5 394.5L1380.9 404.4z" fill="#d4c550" stroke="#d4c550" stroke-width=".5"/><path d="M1380.9 404.4L1348.5 394.5" stroke="#f028f0" stroke-width=".65" fill="none"/><path d="M1042.7 481.5L1040.6 484.9L1003.5 431.1L1006.6 428z" fill="#665f26" stroke="#665f26" stroke-width=".5"/><path d="M1006.6 428L1003.5 431.1" stroke="#f028f0" stroke-width=".65" fill="none"/><path d="M1274 392.5L1291.1 386.2L1295.8 387.8L1278.8 394.2z" fill="#565020" stroke="#565020" stroke-width=".5"/><path d="M1274 392.5L1291.1 386.2M1278.8 394.2L1295.8 387.8" stroke="#f028f0" stroke-width=".65" fill="none"/><path d="M1341.9 443L1328.2 451.3L1338.1 401.6L1353.2 394.5z" fill="#5f5824" stroke="#5f5824" stroke-width=".5"/><path d="M1353.2 394.5L1338.1 401.6" stroke="#f028f0" stroke-width=".65" fill="none"/><clipPath id="o2"><path d="M1069.3 441.7L1087.1 436.1L1076.7 413.9L1057.4 419.2z"/></clipPath><path d="M1069.3 441.7L1087.1 436.1L1076.7 413.9L1057.4 419.2z" fill="#000" stroke="#e020e0" stroke-width=".6"/><g clip-path="url(#o2)"><path d="M1069.3 441.7L1087.1 436.1L1084.7 433.9L1067.1 439.4z" fill="#5b5522"/><path d="M1087.1 436.1L1084.7 433.9L1074.3 411.8L1076.7 413.9z" fill="#302d12"/></g><path d="M1011.9 424.7L1006.6 428L998.1 428.3L1004.3 424.5z" fill="#565021" stroke="#565021" stroke-width=".5"/><path d="M1011.9 424.7L1006.6 428M1004.3 424.5L998.1 428.3" stroke="#f028f0" stroke-width=".65" fill="none"/><path d="M1040.6 484.9L1040.1 488.3L1002.2 434.2L1003.5 431.1z" fill="#565021" stroke="#565021" stroke-width=".5"/><path d="M1003.5 431.1L1002.2 434.2" stroke="#f028f0" stroke-width=".65" fill="none"/><path d="M1352.1 392.9L1384.4 402.5L1380.9 404.4L1348.5 394.5z" fill="#565021" stroke="#565021" stroke-width=".5"/><path d="M1352.1 392.9L1384.4 402.5M1348.5 394.5L1380.9 404.4" stroke="#f028f0" stroke-width=".65" fill="none"/><path d="M1221.5 450.5L1207 442L1200 393.7L1216.3 400.9z" fill="#6b6328" stroke="#6b6328" stroke-width=".5"/><path d="M1216.3 400.9L1200 393.7" stroke="#f028f0" stroke-width=".65" fill="none"/><path d="M1006.6 428L1003.5 431.1L993.9 432.3L998.1 428.3z" fill="#575021" stroke="#575021" stroke-width=".5"/><path d="M1006.6 428L1003.5 431.1M998.1 428.3L993.9 432.3" stroke="#f028f0" stroke-width=".65" fill="none"/><clipPath id="o1"><path d="M1040.4 453L1055.5 446.6L1042.4 423.7L1025.9 429.7z"/></clipPath><path d="M1040.4 453L1055.5 446.6L1042.4 423.7L1025.9 429.7z" fill="#000" stroke="#e020e0" stroke-width=".6"/><g clip-path="url(#o1)"><path d="M1040.4 453L1055.5 446.6L1051.8 444.7L1036.7 450.9z" fill="#5c5523"/><path d="M1055.5 446.6L1051.8 444.7L1038.6 422L1042.4 423.7z" fill="#4e491e"/></g><path d="M1332.4 399.7L1347.5 392.8L1353.2 394.5L1338.1 401.6z" fill="#575121" stroke="#575121" stroke-width=".5"/><path d="M1332.4 399.7L1347.5 392.8M1338.1 401.6L1353.2 394.5" stroke="#f028f0" stroke-width=".65" fill="none"/><path d="M1040.1 488.3L1040.9 491.8L1002.5 437.3L1002.2 434.2z" fill="#302c12" stroke="#302c12" stroke-width=".5"/><path d="M1002.2 434.2L1002.5 437.3" stroke="#f028f0" stroke-width=".65" fill="none"/><path d="M1396.7 467.5L1365.5 454.5L1380.9 404.4L1418.2 415.7z" fill="#d4c550" stroke="#d4c550" stroke-width=".5"/><path d="M1418.2 415.7L1380.9 404.4" stroke="#f028f0" stroke-width=".65" fill="none"/><path d="M1276.4 442.5L1259.9 450.8L1260.1 401.2L1278.8 394.2z" fill="#ac9f41" stroke="#ac9f41" stroke-width=".5"/><path d="M1278.8 394.2L1260.1 401.2" stroke="#f028f0" stroke-width=".65" fill="none"/><path d="M1003.5 431.1L1002.2 434.2L992 436.2L993.9 432.3z" fill="#575121" stroke="#575121" stroke-width=".5"/><path d="M1003.5 431.1L1002.2 434.2M993.9 432.3L992 436.2" stroke="#f028f0" stroke-width=".65" fill="none"/><path d="M1205.3 392.1L1221.7 399.1L1216.3 400.9L1200 393.7z" fill="#575121" stroke="#575121" stroke-width=".5"/><path d="M1205.3 392.1L1221.7 399.1M1200 393.7L1216.3 400.9" stroke="#f028f0" stroke-width=".65" fill="none"/><path d="M1040.9 491.8L1043.1 495.4L1004.4 440.6L1002.5 437.3z" fill="#100f06" stroke="#100f06" stroke-width=".5"/><path d="M1002.5 437.3L1004.4 440.6" stroke="#f028f0" stroke-width=".65" fill="none"/><path d="M1483.5 498.7L1479.5 497L1519.5 442.1L1524.6 443.6z" fill="#d4c550" stroke="#d4c550" stroke-width=".5"/><path d="M1524.6 443.6L1519.5 442.1" stroke="#f028f0" stroke-width=".65" fill="none"/><path d="M1479.5 497L1474.9 495.4L1513.7 440.6L1519.5 442.1z" fill="#d4c550" stroke="#d4c550" stroke-width=".5"/><path d="M1519.5 442.1L1513.7 440.6" stroke="#f028f0" stroke-width=".65" fill="none"/><path d="M1486.9 500.5L1483.5 498.7L1524.6 443.6L1528.9 445.2z" fill="#d4c550" stroke="#d4c550" stroke-width=".5"/><path d="M1528.9 445.2L1524.6 443.6" stroke="#f028f0" stroke-width=".65" fill="none"/><path d="M1384.4 402.5L1421.4 413.5L1418.2 415.7L1380.9 404.4z" fill="#575121" stroke="#575121" stroke-width=".5"/><path d="M1384.4 402.5L1421.4 413.5M1380.9 404.4L1418.2 415.7" stroke="#f028f0" stroke-width=".65" fill="none"/><path d="M1474.9 495.4L1469.8 493.8L1507.4 439.1L1513.7 440.6z" fill="#d4c550" stroke="#d4c550" stroke-width=".5"/><path d="M1513.7 440.6L1507.4 439.1" stroke="#f028f0" stroke-width=".65" fill="none"/><path d="M1002.2 434.2L1002.5 437.3L992.2 440L992 436.2z" fill="#575121" stroke="#575121" stroke-width=".5"/><path d="M1002.2 434.2L1002.5 437.3M992 436.2L992.2 440" stroke="#f028f0" stroke-width=".65" fill="none"/><path d="M1489.5 502.2L1486.9 500.5L1528.9 445.2L1532.3 446.8z" fill="#d4c550" stroke="#d4c550" stroke-width=".5"/><path d="M1532.3 446.8L1528.9 445.2" stroke="#f028f0" stroke-width=".65" fill="none"/><path d="M1469.8 493.8L1464.4 492.2L1500.7 437.7L1507.4 439.1z" fill="#d4c550" stroke="#d4c550" stroke-width=".5"/><path d="M1507.4 439.1L1500.7 437.7" stroke="#f028f0" stroke-width=".65" fill="none"/><path d="M1435 479.5L1432.2 482.4L1461.5 428.8L1464.3 426.3z" fill="#27240f" stroke="#27240f" stroke-width=".5"/><path d="M1255.3 399.3L1274 392.5L1278.8 394.2L1260.1 401.2z" fill="#585121" stroke="#585121" stroke-width=".5"/><path d="M1255.3 399.3L1274 392.5M1260.1 401.2L1278.8 394.2" stroke="#f028f0" stroke-width=".65" fill="none"/><path d="M1432.2 482.4L1396.7 467.5L1418.2 415.7L1461.5 428.8z" fill="#d4c550" stroke="#d4c550" stroke-width=".5"/><path d="M1461.5 428.8L1418.2 415.7" stroke="#f028f0" stroke-width=".65" fill="none"/><path d="M1491.4 504.2L1489.5 502.2L1532.3 446.8L1535 448.6z" fill="#c0b348" stroke="#c0b348" stroke-width=".5"/><path d="M1535 448.6L1532.3 446.8" stroke="#f028f0" stroke-width=".65" fill="none"/><path d="M1464.4 492.2L1458.8 490.6L1493.9 436.3L1500.7 437.7z" fill="#d4c550" stroke="#d4c550" stroke-width=".5"/><path d="M1500.7 437.7L1493.9 436.3" stroke="#f028f0" stroke-width=".65" fill="none"/><path d="M1458.8 490.6L1453.2 489.1L1487 434.9L1493.9 436.3z" fill="#d4c550" stroke="#d4c550" stroke-width=".5"/><path d="M1493.9 436.3L1487 434.9" stroke="#f028f0" stroke-width=".65" fill="none"/><path d="M1437.3 482.3L1436 484.1L1466.1 430.4L1467.4 428.8z" fill="#100e06" stroke="#100e06" stroke-width=".5"/><path d="M1467.4 428.8L1466.1 430.4" stroke="#f028f0" stroke-width=".65" fill="none"/><path d="M1501.5 507.8L1493 506.7L1537.4 451L1547.8 452z" fill="#c4b64a" stroke="#c4b64a" stroke-width=".5"/><path d="M1453.2 489.1L1447.6 487.5L1480.2 433.5L1487 434.9z" fill="#d4c550" stroke="#d4c550" stroke-width=".5"/><path d="M1487 434.9L1480.2 433.5" stroke="#f028f0" stroke-width=".65" fill="none"/><path d="M1493 506.7L1491.4 504.2L1535 448.6L1537.4 451z" fill="#938938" stroke="#938938" stroke-width=".5"/><path d="M1537.4 451L1535 448.6" stroke="#f028f0" stroke-width=".65" fill="none"/><path d="M1328.2 451.3L1313.3 460.3L1321.5 409.4L1338.1 401.6z" fill="#615b25" stroke="#615b25" stroke-width=".5"/><path d="M1338.1 401.6L1321.5 409.4" stroke="#f028f0" stroke-width=".65" fill="none"/><path d="M1447.6 487.5L1442.2 485.9L1473.6 432L1480.2 433.5z" fill="#d4c550" stroke="#d4c550" stroke-width=".5"/><path d="M1480.2 433.5L1473.6 432" stroke="#f028f0" stroke-width=".65" fill="none"/><path d="M1038.3 502.8L1034.9 498.8L994.1 443.7L997.4 447.4z" fill="#0e0d05" stroke="#0e0d05" stroke-width=".5"/><path d="M997.4 447.4L994.1 443.7" stroke="#f028f0" stroke-width=".65" fill="none"/><path d="M1437 484.2L1432.5 482.5L1461.7 428.9L1467.3 430.5z" fill="#d4c550" stroke="#d4c550" stroke-width=".5"/><path d="M1467.3 430.5L1461.7 428.9" stroke="#f028f0" stroke-width=".65" fill="none"/><path d="M1442.2 485.9L1437 484.2L1467.3 430.5L1473.6 432z" fill="#d4c550" stroke="#d4c550" stroke-width=".5"/><path d="M1473.6 432L1467.3 430.5" stroke="#f028f0" stroke-width=".65" fill="none"/><path d="M1493.3 509.2L1492.7 506.2L1537 450.5L1538.3 453.3z" fill="#565020" stroke="#565020" stroke-width=".5"/><path d="M1538.3 453.3L1537 450.5" stroke="#f028f0" stroke-width=".65" fill="none"/><path d="M1521.2 439L1527.8 441L1524.6 443.6L1519.5 442.1z" fill="#585221" stroke="#585221" stroke-width=".5"/><path d="M1521.2 439L1527.8 441M1519.5 442.1L1524.6 443.6" stroke="#f028f0" stroke-width=".65" fill="none"/><path d="M1427.4 483.7L1428.5 481.5L1457 428L1456 430z" fill="#070603" stroke="#070603" stroke-width=".5"/><path d="M1456 430L1457 428" stroke="#f028f0" stroke-width=".65" fill="none"/><path d="M1514.4 437.3L1521.2 439L1519.5 442.1L1513.7 440.6z" fill="#585221" stroke="#585221" stroke-width=".5"/><path d="M1514.4 437.3L1521.2 439M1513.7 440.6L1519.5 442.1" stroke="#f028f0" stroke-width=".65" fill="none"/><path d="M1527.8 441L1534.1 443.3L1528.9 445.2L1524.6 443.6z" fill="#585221" stroke="#585221" stroke-width=".5"/><path d="M1527.8 441L1534.1 443.3M1524.6 443.6L1528.9 445.2" stroke="#f028f0" stroke-width=".65" fill="none"/><path d="M1002.5 437.3L1004.4 440.6L994.1 443.7L992.2 440z" fill="#585221" stroke="#585221" stroke-width=".5"/><path d="M1002.5 437.3L1004.4 440.6M992.2 440L994.1 443.7" stroke="#f028f0" stroke-width=".65" fill="none"/><path d="M1507.5 435.7L1514.4 437.3L1513.7 440.6L1507.4 439.1z" fill="#585221" stroke="#585221" stroke-width=".5"/><path d="M1507.5 435.7L1514.4 437.3M1507.4 439.1L1513.7 440.6" stroke="#f028f0" stroke-width=".65" fill="none"/><path d="M1534.1 443.3L1539.9 446L1532.3 446.8L1528.9 445.2z" fill="#585221" stroke="#585221" stroke-width=".5"/><path d="M1534.1 443.3L1539.9 446M1528.9 445.2L1532.3 446.8" stroke="#f028f0" stroke-width=".65" fill="none"/><path d="M1500.6 434.2L1507.5 435.7L1507.4 439.1L1500.7 437.7z" fill="#585221" stroke="#585221" stroke-width=".5"/><path d="M1500.6 434.2L1507.5 435.7M1500.7 437.7L1507.4 439.1" stroke="#f028f0" stroke-width=".65" fill="none"/><path d="M1237.4 459.7L1221.5 450.5L1216.3 400.9L1234.3 408.9z" fill="#7f7630" stroke="#7f7630" stroke-width=".5"/><path d="M1234.3 408.9L1216.3 400.9" stroke="#f028f0" stroke-width=".65" fill="none"/><path d="M1421.4 413.5L1464.3 426.3L1461.5 428.8L1418.2 415.7z" fill="#585221" stroke="#585221" stroke-width=".5"/><path d="M1421.4 413.5L1464.3 426.3M1418.2 415.7L1461.5 428.8" stroke="#f028f0" stroke-width=".65" fill="none"/><path d="M1493.7 432.8L1500.6 434.2L1500.7 437.7L1493.9 436.3z" fill="#585221" stroke="#585221" stroke-width=".5"/><path d="M1493.7 432.8L1500.6 434.2M1493.9 436.3L1500.7 437.7" stroke="#f028f0" stroke-width=".65" fill="none"/><path d="M1539.9 446L1544.6 449L1535 448.6L1532.3 446.8z" fill="#585221" stroke="#585221" stroke-width=".5"/><path d="M1539.9 446L1544.6 449M1532.3 446.8L1535 448.6" stroke="#f028f0" stroke-width=".65" fill="none"/><path d="M1487 431.5L1493.7 432.8L1493.9 436.3L1487 434.9z" fill="#585221" stroke="#585221" stroke-width=".5"/><path d="M1487 431.5L1493.7 432.8M1487 434.9L1493.9 436.3" stroke="#f028f0" stroke-width=".65" fill="none"/><path d="M1493 512.6L1493.3 509.2L1538.3 453.3L1538.6 456.4z" fill="#45401a" stroke="#45401a" stroke-width=".5"/><path d="M1538.6 456.4L1538.3 453.3" stroke="#f028f0" stroke-width=".65" fill="none"/><path d="M1259.9 450.8L1241.9 459.8L1239.4 408.9L1260.1 401.2z" fill="#b5a844" stroke="#b5a844" stroke-width=".5"/><path d="M1260.1 401.2L1239.4 408.9" stroke="#f028f0" stroke-width=".65" fill="none"/><path d="M1480.6 430.2L1487 431.5L1487 434.9L1480.2 433.5z" fill="#585221" stroke="#585221" stroke-width=".5"/><path d="M1480.6 430.2L1487 431.5M1480.2 433.5L1487 434.9" stroke="#f028f0" stroke-width=".65" fill="none"/><path d="M1426.5 486.2L1427.4 483.7L1456 430L1455.3 432.3z" fill="#161508" stroke="#161508" stroke-width=".5"/><path d="M1455.3 432.3L1456 430" stroke="#f028f0" stroke-width=".65" fill="none"/><path d="M1474.6 428.9L1480.6 430.2L1480.2 433.5L1473.6 432z" fill="#585221" stroke="#585221" stroke-width=".5"/><path d="M1474.6 428.9L1480.6 430.2M1473.6 432L1480.2 433.5" stroke="#f028f0" stroke-width=".65" fill="none"/><path d="M1464 426.2L1469.1 427.6L1467.3 430.5L1461.7 428.9z" fill="#585221" stroke="#585221" stroke-width=".5"/><path d="M1464 426.2L1469.1 427.6M1461.7 428.9L1467.3 430.5" stroke="#f028f0" stroke-width=".65" fill="none"/><path d="M1469.1 427.6L1474.6 428.9L1473.6 432L1467.3 430.5z" fill="#585221" stroke="#585221" stroke-width=".5"/><path d="M1469.1 427.6L1474.6 428.9M1467.3 430.5L1473.6 432" stroke="#f028f0" stroke-width=".65" fill="none"/><path d="M1042.8 506.8L1038.3 502.8L997.4 447.4L1001.9 451.1z" fill="#1e1c0b" stroke="#1e1c0b" stroke-width=".5"/><path d="M1001.9 451.1L997.4 447.4" stroke="#f028f0" stroke-width=".65" fill="none"/><path d="M1544.6 449L1547.8 452L1537.4 451L1535 448.6z" fill="#585221" stroke="#585221" stroke-width=".5"/><path d="M1544.6 449L1547.8 452M1535 448.6L1537.4 451" stroke="#f028f0" stroke-width=".65" fill="none"/><path d="M1315.7 407.3L1332.4 399.7L1338.1 401.6L1321.5 409.4z" fill="#585221" stroke="#585221" stroke-width=".5"/><path d="M1315.7 407.3L1332.4 399.7M1321.5 409.4L1338.1 401.6" stroke="#f028f0" stroke-width=".65" fill="none"/><path d="M1457 428L1458.5 426.3L1467.4 428.8L1466.1 430.4z" fill="#595221" stroke="#595221" stroke-width=".5"/><path d="M1457 428L1458.5 426.3M1466.1 430.4L1467.4 428.8" stroke="#f028f0" stroke-width=".65" fill="none"/><path d="M1004.4 440.6L1007.7 443.9L997.4 447.4L994.1 443.7z" fill="#595221" stroke="#595221" stroke-width=".5"/><path d="M1004.4 440.6L1007.7 443.9M994.1 443.7L997.4 447.4" stroke="#f028f0" stroke-width=".65" fill="none"/><path d="M1425.8 488.8L1426.5 486.2L1455.3 432.3L1454.9 434.6z" fill="#201d0c" stroke="#201d0c" stroke-width=".5"/><path d="M1454.9 434.6L1455.3 432.3" stroke="#f028f0" stroke-width=".65" fill="none"/><path d="M1491.8 516.3L1493 512.6L1538.6 456.4L1538 460z" fill="#302c12" stroke="#302c12" stroke-width=".5"/><path d="M1538 460L1538.6 456.4" stroke="#f028f0" stroke-width=".65" fill="none"/><path d="M1538.3 453.3L1537 450.5L1548.3 452.6L1549.9 455.8z" fill="#595221" stroke="#595221" stroke-width=".5"/><path d="M1538.3 453.3L1537 450.5M1549.9 455.8L1548.3 452.6" stroke="#f028f0" stroke-width=".65" fill="none"/><path d="M1237.7 457.4L1241.9 459.8L1239.4 408.9L1234.7 406.8z" fill="#8e8436" stroke="#8e8436" stroke-width=".5"/><path d="M1242.1 457.4L1237.4 459.7L1234.3 408.9L1239.7 406.9z" fill="#bcae47" stroke="#bcae47" stroke-width=".5"/><path d="M1314.7 463.2L1308.8 460.3L1316.3 409.3L1323.2 411.9z" fill="#c9ba4c" stroke="#c9ba4c" stroke-width=".5"/><path d="M1323.2 411.9L1316.3 409.3" stroke="#f028f0" stroke-width=".65" fill="none"/><path d="M1221.7 399.1L1239.7 406.9L1234.3 408.9L1216.3 400.9z" fill="#595322" stroke="#595322" stroke-width=".5"/><path d="M1221.7 399.1L1239.7 406.9M1216.3 400.9L1234.3 408.9" stroke="#f028f0" stroke-width=".65" fill="none"/><path d="M1456 430L1457 428L1466.1 430.4L1465.3 432.2z" fill="#595322" stroke="#595322" stroke-width=".5"/><path d="M1456 430L1457 428M1465.3 432.2L1466.1 430.4" stroke="#f028f0" stroke-width=".65" fill="none"/><path d="M1234.7 406.8L1255.3 399.3L1260.1 401.2L1239.4 408.9z" fill="#595322" stroke="#595322" stroke-width=".5"/><path d="M1234.7 406.8L1255.3 399.3M1239.4 408.9L1260.1 401.2" stroke="#f028f0" stroke-width=".65" fill="none"/><path d="M1425.2 491.5L1425.8 488.8L1454.9 434.6L1454.6 437z" fill="#24210d" stroke="#24210d" stroke-width=".5"/><path d="M1454.6 437L1454.9 434.6" stroke="#f028f0" stroke-width=".65" fill="none"/><path d="M1048 510.8L1042.8 506.8L1001.9 451.1L1007.3 454.8z" fill="#28250f" stroke="#28250f" stroke-width=".5"/><path d="M1007.3 454.8L1001.9 451.1" stroke="#f028f0" stroke-width=".65" fill="none"/><path d="M1538.6 456.4L1538.3 453.3L1549.9 455.8L1550.5 459.5z" fill="#595322" stroke="#595322" stroke-width=".5"/><path d="M1538.6 456.4L1538.3 453.3M1550.5 459.5L1549.9 455.8" stroke="#f028f0" stroke-width=".65" fill="none"/><path d="M1489.8 520.4L1491.8 516.3L1538 460L1536.5 463.9z" fill="#211f0d" stroke="#211f0d" stroke-width=".5"/><path d="M1536.5 463.9L1538 460" stroke="#f028f0" stroke-width=".65" fill="none"/><path d="M1320.9 466.5L1314.7 463.2L1323.2 411.9L1330.6 414.7z" fill="#c9bb4c" stroke="#c9bb4c" stroke-width=".5"/><path d="M1330.6 414.7L1323.2 411.9" stroke="#f028f0" stroke-width=".65" fill="none"/><path d="M1455.3 432.3L1456 430L1465.3 432.2L1464.8 434.3z" fill="#595322" stroke="#595322" stroke-width=".5"/><path d="M1455.3 432.3L1456 430M1464.8 434.3L1465.3 432.2" stroke="#f028f0" stroke-width=".65" fill="none"/><path d="M1007.7 443.9L1012.1 447.4L1001.9 451.1L997.4 447.4z" fill="#595322" stroke="#595322" stroke-width=".5"/><path d="M1007.7 443.9L1012.1 447.4M997.4 447.4L1001.9 451.1" stroke="#f028f0" stroke-width=".65" fill="none"/><path d="M1424.6 494.2L1425.2 491.5L1454.6 437L1454.2 439.5z" fill="#23200d" stroke="#23200d" stroke-width=".5"/><path d="M1454.2 439.5L1454.6 437" stroke="#f028f0" stroke-width=".65" fill="none"/><path d="M1313.3 460.3L1296.9 470.2L1303 418L1321.5 409.4z" fill="#665f27" stroke="#665f27" stroke-width=".5"/><path d="M1321.5 409.4L1303 418" stroke="#f028f0" stroke-width=".65" fill="none"/><path d="M1327.5 470L1320.9 466.5L1330.6 414.7L1338.4 417.9z" fill="#cabc4c" stroke="#cabc4c" stroke-width=".5"/><path d="M1338.4 417.9L1330.6 414.7" stroke="#f028f0" stroke-width=".65" fill="none"/><path d="M1320.8 407.3L1327.7 409.9L1323.2 411.9L1316.3 409.3z" fill="#5a5322" stroke="#5a5322" stroke-width=".5"/><path d="M1320.8 407.3L1327.7 409.9M1316.3 409.3L1323.2 411.9" stroke="#f028f0" stroke-width=".65" fill="none"/><path d="M1538 460L1538.6 456.4L1550.5 459.5L1550 463.4z" fill="#5a5322" stroke="#5a5322" stroke-width=".5"/><path d="M1538 460L1538.6 456.4M1550 463.4L1550.5 459.5" stroke="#f028f0" stroke-width=".65" fill="none"/><path d="M1454.9 434.6L1455.3 432.3L1464.8 434.3L1464.5 436.6z" fill="#5a5322" stroke="#5a5322" stroke-width=".5"/><path d="M1454.9 434.6L1455.3 432.3M1464.5 436.6L1464.8 434.3" stroke="#f028f0" stroke-width=".65" fill="none"/><path d="M1241.9 459.8L1222.1 469.6L1216.4 417.5L1239.4 408.9z" fill="#bfb148" stroke="#bfb148" stroke-width=".5"/><path d="M1239.4 408.9L1216.4 417.5" stroke="#f028f0" stroke-width=".65" fill="none"/><path d="M1254.8 469.9L1237.4 459.7L1234.3 408.9L1254.2 417.7z" fill="#948a38" stroke="#948a38" stroke-width=".5"/><path d="M1254.2 417.7L1234.3 408.9" stroke="#f028f0" stroke-width=".65" fill="none"/><path d="M1487.1 524.9L1489.8 520.4L1536.5 463.9L1534.2 468.1z" fill="#171609" stroke="#171609" stroke-width=".5"/><path d="M1534.2 468.1L1536.5 463.9" stroke="#f028f0" stroke-width=".65" fill="none"/><path d="M1423.8 496.7L1424.6 494.2L1454.2 439.5L1453.7 441.8z" fill="#1c1a0b" stroke="#1c1a0b" stroke-width=".5"/><path d="M1453.7 441.8L1454.2 439.5" stroke="#f028f0" stroke-width=".65" fill="none"/><path d="M1053.7 514.9L1048 510.8L1007.3 454.8L1013.4 458.6z" fill="#2e2b12" stroke="#2e2b12" stroke-width=".5"/><path d="M1013.4 458.6L1007.3 454.8" stroke="#f028f0" stroke-width=".65" fill="none"/><path d="M1334.5 473.8L1327.5 470L1338.4 417.9L1346.7 421.2z" fill="#ccbd4d" stroke="#ccbd4d" stroke-width=".5"/><path d="M1346.7 421.2L1338.4 417.9" stroke="#f028f0" stroke-width=".65" fill="none"/><path d="M1327.7 409.9L1335.2 412.7L1330.6 414.7L1323.2 411.9z" fill="#5a5422" stroke="#5a5422" stroke-width=".5"/><path d="M1327.7 409.9L1335.2 412.7M1323.2 411.9L1330.6 414.7" stroke="#f028f0" stroke-width=".65" fill="none"/><path d="M1454.6 437L1454.9 434.6L1464.5 436.6L1464.3 439.1z" fill="#5a5422" stroke="#5a5422" stroke-width=".5"/><path d="M1454.6 437L1454.9 434.6M1464.3 439.1L1464.5 436.6" stroke="#f028f0" stroke-width=".65" fill="none"/><path d="M1012.1 447.4L1017.5 450.9L1007.3 454.8L1001.9 451.1z" fill="#5a5422" stroke="#5a5422" stroke-width=".5"/><path d="M1012.1 447.4L1017.5 450.9M1001.9 451.1L1007.3 454.8" stroke="#f028f0" stroke-width=".65" fill="none"/><path d="M1422.8 499.1L1423.8 496.7L1453.7 441.8L1452.8 443.9z" fill="#100e06" stroke="#100e06" stroke-width=".5"/><path d="M1452.8 443.9L1453.7 441.8" stroke="#f028f0" stroke-width=".65" fill="none"/><path d="M1536.5 463.9L1538 460L1550 463.4L1548.6 467.7z" fill="#5a5422" stroke="#5a5422" stroke-width=".5"/><path d="M1536.5 463.9L1538 460M1548.6 467.7L1550 463.4" stroke="#f028f0" stroke-width=".65" fill="none"/><path d="M1341.8 477.8L1334.5 473.8L1346.7 421.2L1355.5 424.8z" fill="#cebf4e" stroke="#cebf4e" stroke-width=".5"/><path d="M1355.5 424.8L1346.7 421.2" stroke="#f028f0" stroke-width=".65" fill="none"/><path d="M1297.1 415.7L1315.7 407.3L1321.5 409.4L1303 418z" fill="#5a5422" stroke="#5a5422" stroke-width=".5"/><path d="M1297.1 415.7L1315.7 407.3M1303 418L1321.5 409.4" stroke="#f028f0" stroke-width=".65" fill="none"/><path d="M1335.2 412.7L1343.1 415.8L1338.4 417.9L1330.6 414.7z" fill="#5a5422" stroke="#5a5422" stroke-width=".5"/><path d="M1335.2 412.7L1343.1 415.8M1330.6 414.7L1338.4 417.9" stroke="#f028f0" stroke-width=".65" fill="none"/><path d="M1483.8 529.7L1487.1 524.9L1534.2 468.1L1531.1 472.7z" fill="#110f06" stroke="#110f06" stroke-width=".5"/><path d="M1531.1 472.7L1534.2 468.1" stroke="#f028f0" stroke-width=".65" fill="none"/><path d="M1454.2 439.5L1454.6 437L1464.3 439.1L1464 441.6z" fill="#5b5422" stroke="#5b5422" stroke-width=".5"/><path d="M1454.2 439.5L1454.6 437M1464 441.6L1464.3 439.1" stroke="#f028f0" stroke-width=".65" fill="none"/><path d="M1430.8 502L1429.3 504.5L1461.3 448.9L1462.7 446.6z" fill="#0b0a04" stroke="#0b0a04" stroke-width=".5"/><path d="M1462.7 446.6L1461.3 448.9" stroke="#f028f0" stroke-width=".65" fill="none"/><path d="M1211.7 415.2L1234.7 406.8L1239.4 408.9L1216.4 417.5z" fill="#5b5422" stroke="#5b5422" stroke-width=".5"/><path d="M1211.7 415.2L1234.7 406.8M1216.4 417.5L1239.4 408.9" stroke="#f028f0" stroke-width=".65" fill="none"/><path d="M1059.6 519.1L1053.7 514.9L1013.4 458.6L1019.7 462.6z" fill="#312d12" stroke="#312d12" stroke-width=".5"/><path d="M1019.7 462.6L1013.4 458.6" stroke="#f028f0" stroke-width=".65" fill="none"/><path d="M1239.7 406.9L1259.7 415.5L1254.2 417.7L1234.3 408.9z" fill="#5b5422" stroke="#5b5422" stroke-width=".5"/><path d="M1239.7 406.9L1259.7 415.5M1234.3 408.9L1254.2 417.7" stroke="#f028f0" stroke-width=".65" fill="none"/><path d="M1349.3 482L1341.8 477.8L1355.5 424.8L1364.5 428.4z" fill="#d1c24f" stroke="#d1c24f" stroke-width=".5"/><path d="M1364.5 428.4L1355.5 424.8" stroke="#f028f0" stroke-width=".65" fill="none"/><path d="M1343.1 415.8L1351.5 419L1346.7 421.2L1338.4 417.9z" fill="#5b5522" stroke="#5b5522" stroke-width=".5"/><path d="M1343.1 415.8L1351.5 419M1338.4 417.9L1346.7 421.2" stroke="#f028f0" stroke-width=".65" fill="none"/><path d="M1453.7 441.8L1454.2 439.5L1464 441.6L1463.5 444.2z" fill="#5b5522" stroke="#5b5522" stroke-width=".5"/><path d="M1453.7 441.8L1454.2 439.5M1463.5 444.2L1464 441.6" stroke="#f028f0" stroke-width=".65" fill="none"/><path d="M1429.3 504.5L1427.1 506.7L1459.1 450.9L1461.3 448.9z" fill="#292610" stroke="#292610" stroke-width=".5"/><path d="M1461.3 448.9L1459.1 450.9" stroke="#f028f0" stroke-width=".65" fill="none"/><path d="M1534.2 468.1L1536.5 463.9L1548.6 467.7L1546.5 472.2z" fill="#5b5522" stroke="#5b5522" stroke-width=".5"/><path d="M1534.2 468.1L1536.5 463.9M1546.5 472.2L1548.6 467.7" stroke="#f028f0" stroke-width=".65" fill="none"/><path d="M1017.5 450.9L1023.5 454.5L1013.4 458.6L1007.3 454.8z" fill="#5b5522" stroke="#5b5522" stroke-width=".5"/><path d="M1017.5 450.9L1023.5 454.5M1007.3 454.8L1013.4 458.6" stroke="#f028f0" stroke-width=".65" fill="none"/><path d="M1222.1 469.6L1200.4 480.5L1190.7 427.1L1216.4 417.5z" fill="#c8ba4c" stroke="#c8ba4c" stroke-width=".5"/><path d="M1216.4 417.5L1190.7 427.1" stroke="#f028f0" stroke-width=".65" fill="none"/><path d="M1357 486.1L1349.3 482L1364.5 428.4L1373.9 432.2z" fill="#d4c550" stroke="#d4c550" stroke-width=".5"/><path d="M1373.9 432.2L1364.5 428.4" stroke="#f028f0" stroke-width=".65" fill="none"/><path d="M1479.9 534.9L1483.8 529.7L1531.1 472.7L1527.5 477.7z" fill="#0c0b04" stroke="#0c0b04" stroke-width=".5"/><path d="M1527.5 477.7L1531.1 472.7" stroke="#f028f0" stroke-width=".65" fill="none"/><path d="M1427.1 506.7L1424.1 508.4L1455.7 452.5L1459.1 450.9z" fill="#524d1f" stroke="#524d1f" stroke-width=".5"/><path d="M1459.1 450.9L1455.7 452.5" stroke="#f028f0" stroke-width=".65" fill="none"/><path d="M1452.8 443.9L1453.7 441.8L1463.5 444.2L1462.7 446.6z" fill="#5b5522" stroke="#5b5522" stroke-width=".5"/><path d="M1452.8 443.9L1453.7 441.8M1462.7 446.6L1463.5 444.2" stroke="#f028f0" stroke-width=".65" fill="none"/><path d="M1351.5 419L1360.2 422.5L1355.5 424.8L1346.7 421.2z" fill="#5b5522" stroke="#5b5522" stroke-width=".5"/><path d="M1351.5 419L1360.2 422.5M1346.7 421.2L1355.5 424.8" stroke="#f028f0" stroke-width=".65" fill="none"/><path d="M1296.9 470.2L1278.9 481.1L1282.3 427.7L1303 418z" fill="#7c732f" stroke="#7c732f" stroke-width=".5"/><path d="M1303 418L1282.3 427.7" stroke="#f028f0" stroke-width=".65" fill="none"/><path d="M1065.5 523.4L1059.6 519.1L1019.7 462.6L1026.1 466.7z" fill="#302c12" stroke="#302c12" stroke-width=".5"/><path d="M1026.1 466.7L1019.7 462.6" stroke="#f028f0" stroke-width=".65" fill="none"/><path d="M1364.9 490.3L1357 486.1L1373.9 432.2L1383.5 436z" fill="#d4c550" stroke="#d4c550" stroke-width=".5"/><path d="M1383.5 436L1373.9 432.2" stroke="#f028f0" stroke-width=".65" fill="none"/><path d="M1274 481.1L1254.8 469.9L1254.2 417.7L1276.6 427.7z" fill="#aa9e40" stroke="#aa9e40" stroke-width=".5"/><path d="M1276.6 427.7L1254.2 417.7" stroke="#f028f0" stroke-width=".65" fill="none"/><path d="M1424.1 508.4L1420 509.4L1451 453.5L1455.7 452.5z" fill="#625b25" stroke="#625b25" stroke-width=".5"/><path d="M1455.7 452.5L1451 453.5" stroke="#f028f0" stroke-width=".65" fill="none"/><path d="M1531.1 472.7L1534.2 468.1L1546.5 472.2L1543.6 477.1z" fill="#5c5523" stroke="#5c5523" stroke-width=".5"/><path d="M1531.1 472.7L1534.2 468.1M1543.6 477.1L1546.5 472.2" stroke="#f028f0" stroke-width=".65" fill="none"/><path d="M1451.6 445.8L1452.8 443.9L1462.7 446.6L1461.3 448.9z" fill="#5c5523" stroke="#5c5523" stroke-width=".5"/><path d="M1451.6 445.8L1452.8 443.9M1461.3 448.9L1462.7 446.6" stroke="#f028f0" stroke-width=".65" fill="none"/><path d="M1360.2 422.5L1369.2 426.1L1364.5 428.4L1355.5 424.8z" fill="#5c5523" stroke="#5c5523" stroke-width=".5"/><path d="M1360.2 422.5L1369.2 426.1M1355.5 424.8L1364.5 428.4" stroke="#f028f0" stroke-width=".65" fill="none"/><path d="M1372.8 494.3L1364.9 490.3L1383.5 436L1393.2 439.6z" fill="#d4c550" stroke="#d4c550" stroke-width=".5"/><path d="M1393.2 439.6L1383.5 436" stroke="#f028f0" stroke-width=".65" fill="none"/><path d="M1023.5 454.5L1030 458.3L1019.7 462.6L1013.4 458.6z" fill="#5c5523" stroke="#5c5523" stroke-width=".5"/><path d="M1023.5 454.5L1030 458.3M1013.4 458.6L1019.7 462.6" stroke="#f028f0" stroke-width=".65" fill="none"/><path d="M1420 509.4L1414.9 509.6L1445 453.7L1451 453.5z" fill="#b4a844" stroke="#b4a844" stroke-width=".5"/><path d="M1451 453.5L1445 453.7" stroke="#f028f0" stroke-width=".65" fill="none"/><path d="M1408.3 503.9L1409.5 508.8L1438.4 453L1436.3 448.4z" fill="#585221" stroke="#585221" stroke-width=".5"/><path d="M1475.5 540.3L1479.9 534.9L1527.5 477.7L1523.3 483z" fill="#090803" stroke="#090803" stroke-width=".5"/><path d="M1523.3 483L1527.5 477.7" stroke="#f028f0" stroke-width=".65" fill="none"/><path d="M1186.1 424.6L1211.7 415.2L1216.4 417.5L1190.7 427.1z" fill="#5c5623" stroke="#5c5623" stroke-width=".5"/><path d="M1186.1 424.6L1211.7 415.2M1190.7 427.1L1216.4 417.5" stroke="#f028f0" stroke-width=".65" fill="none"/><path d="M1380.6 498.2L1372.8 494.3L1393.2 439.6L1402.8 443.1z" fill="#d4c550" stroke="#d4c550" stroke-width=".5"/><path d="M1402.8 443.1L1393.2 439.6" stroke="#f028f0" stroke-width=".65" fill="none"/><path d="M1449.8 447.3L1451.6 445.8L1461.3 448.9L1459.1 450.9z" fill="#5c5623" stroke="#5c5623" stroke-width=".5"/><path d="M1449.8 447.3L1451.6 445.8M1459.1 450.9L1461.3 448.9" stroke="#f028f0" stroke-width=".65" fill="none"/><clipPath id="o8"><path d="M1212 474.8L1221.9 469.8L1217.5 429.3L1206.2 433.9z"/></clipPath><path d="M1212 474.8L1221.9 469.8L1217.5 429.3L1206.2 433.9z" fill="#000" stroke="#e020e0" stroke-width=".6"/><g clip-path="url(#o8)"><path d="M1221.9 469.8L1217.8 467.1L1212.9 426.9L1217.5 429.3z" fill="#645d26"/></g><path d="M1278.7 478.3L1274 481.1L1276.6 427.7L1282.1 425.1z" fill="#8c8235" stroke="#8c8235" stroke-width=".5"/><path d="M1273.9 478.2L1278.9 481.1L1282.3 427.7L1276.4 425.1z" fill="#b1a543" stroke="#b1a543" stroke-width=".5"/><path d="M1414.9 509.6L1409.5 508.8L1438.4 453L1445 453.7z" fill="#d0c14e" stroke="#d0c14e" stroke-width=".5"/><path d="M1445 453.7L1438.4 453" stroke="#f028f0" stroke-width=".65" fill="none"/><path d="M1369.2 426.1L1378.5 429.7L1373.9 432.2L1364.5 428.4z" fill="#5c5623" stroke="#5c5623" stroke-width=".5"/><path d="M1369.2 426.1L1378.5 429.7M1364.5 428.4L1373.9 432.2" stroke="#f028f0" stroke-width=".65" fill="none"/><path d="M1388.2 501.6L1380.6 498.2L1402.8 443.1L1412.2 446.3z" fill="#d4c550" stroke="#d4c550" stroke-width=".5"/><path d="M1412.2 446.3L1402.8 443.1" stroke="#f028f0" stroke-width=".65" fill="none"/><path d="M1071.1 527.9L1065.5 523.4L1026.1 466.7L1032 471z" fill="#2a2710" stroke="#2a2710" stroke-width=".5"/><path d="M1032 471L1026.1 466.7" stroke="#f028f0" stroke-width=".65" fill="none"/><path d="M1200.4 480.5L1176.4 492.5L1161.8 438L1190.7 427.1z" fill="#d1c24f" stroke="#d1c24f" stroke-width=".5"/><path d="M1190.7 427.1L1161.8 438" stroke="#f028f0" stroke-width=".65" fill="none"/><path d="M1408.6 508.7L1402.5 507.1L1429.9 451.3L1437.3 452.8z" fill="#d4c550" stroke="#d4c550" stroke-width=".5"/><path d="M1437.3 452.8L1429.9 451.3" stroke="#f028f0" stroke-width=".65" fill="none"/><path d="M1395.6 504.6L1388.2 501.6L1412.2 446.3L1421.3 449.1z" fill="#d4c550" stroke="#d4c550" stroke-width=".5"/><path d="M1421.3 449.1L1412.2 446.3" stroke="#f028f0" stroke-width=".65" fill="none"/><path d="M1402.5 507.1L1395.6 504.6L1421.3 449.1L1429.9 451.3z" fill="#d4c550" stroke="#d4c550" stroke-width=".5"/><path d="M1429.9 451.3L1421.3 449.1" stroke="#f028f0" stroke-width=".65" fill="none"/><path d="M1447.6 448.3L1449.8 447.3L1459.1 450.9L1455.7 452.5z" fill="#5d5623" stroke="#5d5623" stroke-width=".5"/><path d="M1447.6 448.3L1449.8 447.3M1455.7 452.5L1459.1 450.9" stroke="#f028f0" stroke-width=".65" fill="none"/><path d="M1527.5 477.7L1531.1 472.7L1543.6 477.1L1540.1 482.4z" fill="#5d5623" stroke="#5d5623" stroke-width=".5"/><path d="M1527.5 477.7L1531.1 472.7M1540.1 482.4L1543.6 477.1" stroke="#f028f0" stroke-width=".65" fill="none"/><path d="M1276.4 425.1L1297.1 415.7L1303 418L1282.3 427.7z" fill="#5d5623" stroke="#5d5623" stroke-width=".5"/><path d="M1276.4 425.1L1297.1 415.7M1282.3 427.7L1303 418" stroke="#f028f0" stroke-width=".65" fill="none"/><path d="M1378.5 429.7L1387.9 433.3L1383.5 436L1373.9 432.2z" fill="#5d5623" stroke="#5d5623" stroke-width=".5"/><path d="M1378.5 429.7L1387.9 433.3M1373.9 432.2L1383.5 436" stroke="#f028f0" stroke-width=".65" fill="none"/><path d="M1259.7 415.5L1282.1 425.1L1276.6 427.7L1254.2 417.7z" fill="#5d5623" stroke="#5d5623" stroke-width=".5"/><path d="M1259.7 415.5L1282.1 425.1M1254.2 417.7L1276.6 427.7" stroke="#f028f0" stroke-width=".65" fill="none"/><path d="M1278.9 481.2L1273 484.5L1275.5 430.7L1282.3 427.7z" fill="#978c39" stroke="#978c39" stroke-width=".5"/><path d="M1282.3 427.7L1275.5 430.7" stroke="#f028f0" stroke-width=".65" fill="none"/><path d="M1030 458.3L1036.4 462.3L1026.1 466.7L1019.7 462.6z" fill="#5d5623" stroke="#5d5623" stroke-width=".5"/><path d="M1030 458.3L1036.4 462.3M1019.7 462.6L1026.1 466.7" stroke="#f028f0" stroke-width=".65" fill="none"/><path d="M1444.9 448.9L1447.6 448.3L1455.7 452.5L1451 453.5z" fill="#5d5623" stroke="#5d5623" stroke-width=".5"/><path d="M1444.9 448.9L1447.6 448.3M1451 453.5L1455.7 452.5" stroke="#f028f0" stroke-width=".65" fill="none"/><path d="M1470.8 546L1475.5 540.3L1523.3 483L1518.7 488.5z" fill="#070703" stroke="#070703" stroke-width=".5"/><path d="M1518.7 488.5L1523.3 483" stroke="#f028f0" stroke-width=".65" fill="none"/><path d="M1387.9 433.3L1397.3 436.8L1393.2 439.6L1383.5 436z" fill="#5d5623" stroke="#5d5623" stroke-width=".5"/><path d="M1387.9 433.3L1397.3 436.8M1383.5 436L1393.2 439.6" stroke="#f028f0" stroke-width=".65" fill="none"/><path d="M1441.5 449L1444.9 448.9L1451 453.5L1445 453.7z" fill="#5d5723" stroke="#5d5723" stroke-width=".5"/><path d="M1441.5 449L1444.9 448.9M1445 453.7L1451 453.5" stroke="#f028f0" stroke-width=".65" fill="none"/><path d="M1076.1 532.6L1071.1 527.9L1032 471L1037.2 475.5z" fill="#201e0c" stroke="#201e0c" stroke-width=".5"/><path d="M1037.2 475.5L1032 471" stroke="#f028f0" stroke-width=".65" fill="none"/><path d="M1397.3 436.8L1406.5 440L1402.8 443.1L1393.2 439.6z" fill="#5d5723" stroke="#5d5723" stroke-width=".5"/><path d="M1397.3 436.8L1406.5 440M1393.2 439.6L1402.8 443.1" stroke="#f028f0" stroke-width=".65" fill="none"/><path d="M1273 484.5L1266.4 488L1267.7 433.9L1275.5 430.7z" fill="#a79b3f" stroke="#a79b3f" stroke-width=".5"/><path d="M1275.5 430.7L1267.7 433.9" stroke="#f028f0" stroke-width=".65" fill="none"/><path d="M1295.3 493.5L1274 481.1L1276.6 427.7L1301.9 438.9z" fill="#b4a744" stroke="#b4a744" stroke-width=".5"/><path d="M1301.9 438.9L1276.6 427.7" stroke="#f028f0" stroke-width=".65" fill="none"/><path d="M1436.3 448.4L1441.5 449L1445 453.7L1438.4 453z" fill="#5d5723" stroke="#5d5723" stroke-width=".5"/><path d="M1436.3 448.4L1441.5 449M1438.4 453L1445 453.7" stroke="#f028f0" stroke-width=".65" fill="none"/><path d="M1406.5 440L1415.4 443L1412.2 446.3L1402.8 443.1z" fill="#5d5723" stroke="#5d5723" stroke-width=".5"/><path d="M1406.5 440L1415.4 443M1402.8 443.1L1412.2 446.3" stroke="#f028f0" stroke-width=".65" fill="none"/><path d="M1176.4 492.5L1149.7 505.8L1129.1 450.2L1161.8 438z" fill="#d4c550" stroke="#d4c550" stroke-width=".5"/><path d="M1161.8 438L1129.1 450.2" stroke="#f028f0" stroke-width=".65" fill="none"/><path d="M1430.8 447.3L1437.3 448.6L1437.3 452.8L1429.9 451.3z" fill="#5e5723" stroke="#5e5723" stroke-width=".5"/><path d="M1430.8 447.3L1437.3 448.6M1429.9 451.3L1437.3 452.8" stroke="#f028f0" stroke-width=".65" fill="none"/><path d="M1157.4 435L1186.1 424.6L1190.7 427.1L1161.8 438z" fill="#5e5723" stroke="#5e5723" stroke-width=".5"/><path d="M1157.4 435L1186.1 424.6M1161.8 438L1190.7 427.1" stroke="#f028f0" stroke-width=".65" fill="none"/><path d="M1523.3 483L1527.5 477.7L1540.1 482.4L1536 487.9z" fill="#5e5723" stroke="#5e5723" stroke-width=".5"/><path d="M1523.3 483L1527.5 477.7M1536 487.9L1540.1 482.4" stroke="#f028f0" stroke-width=".65" fill="none"/><path d="M1415.4 443L1423.6 445.4L1421.3 449.1L1412.2 446.3z" fill="#5e5723" stroke="#5e5723" stroke-width=".5"/><path d="M1415.4 443L1423.6 445.4M1412.2 446.3L1421.3 449.1" stroke="#f028f0" stroke-width=".65" fill="none"/><path d="M1423.6 445.4L1430.8 447.3L1429.9 451.3L1421.3 449.1z" fill="#5e5723" stroke="#5e5723" stroke-width=".5"/><path d="M1423.6 445.4L1430.8 447.3M1421.3 449.1L1429.9 451.3" stroke="#f028f0" stroke-width=".65" fill="none"/><path d="M1036.4 462.3L1042.7 466.5L1032 471L1026.1 466.7z" fill="#5e5723" stroke="#5e5723" stroke-width=".5"/><path d="M1036.4 462.3L1042.7 466.5M1026.1 466.7L1032 471" stroke="#f028f0" stroke-width=".65" fill="none"/><path d="M1465.9 551.9L1470.8 546L1518.7 488.5L1513.7 494.4z" fill="#070602" stroke="#070602" stroke-width=".5"/><path d="M1513.7 494.4L1518.7 488.5" stroke="#f028f0" stroke-width=".65" fill="none"/><path d="M1266.4 488L1259.1 491.7L1259.3 437.2L1267.7 433.9z" fill="#b0a342" stroke="#b0a342" stroke-width=".5"/><path d="M1267.7 433.9L1259.3 437.2" stroke="#f028f0" stroke-width=".65" fill="none"/><path d="M1080.2 537.6L1076.1 532.6L1037.2 475.5L1041.4 480.3z" fill="#161508" stroke="#161508" stroke-width=".5"/><path d="M1041.4 480.3L1037.2 475.5" stroke="#f028f0" stroke-width=".65" fill="none"/><path d="M1269.8 427.9L1276.5 425.1L1282.3 427.7L1275.5 430.7z" fill="#5e5724" stroke="#5e5724" stroke-width=".5"/><path d="M1269.8 427.9L1276.5 425.1M1275.5 430.7L1282.3 427.7" stroke="#f028f0" stroke-width=".65" fill="none"/><path d="M1149.7 505.8L1119.8 520.8L1091.8 464.2L1129.1 450.2z" fill="#d4c550" stroke="#d4c550" stroke-width=".5"/><path d="M1129.1 450.2L1091.8 464.2" stroke="#f028f0" stroke-width=".65" fill="none"/><path d="M1088.9 533L1080.2 537.6L1041.4 480.3L1052.8 475.9z" fill="#d4c550" stroke="#d4c550" stroke-width=".5"/><path d="M1083 533L1086.2 537.5L1048.8 480.3L1045.6 475.9z" fill="#0b0b04" stroke="#0b0b04" stroke-width=".5"/><path d="M1518.7 488.5L1523.3 483L1536 487.9L1531.6 493.7z" fill="#5f5824" stroke="#5f5824" stroke-width=".5"/><path d="M1518.7 488.5L1523.3 483M1531.6 493.7L1536 487.9" stroke="#f028f0" stroke-width=".65" fill="none"/><path d="M1259.1 491.7L1251.4 495.4L1250.2 440.6L1259.3 437.2z" fill="#b5a844" stroke="#b5a844" stroke-width=".5"/><path d="M1259.3 437.2L1250.2 440.6" stroke="#f028f0" stroke-width=".65" fill="none"/><path d="M1262.3 430.9L1269.8 427.9L1275.5 430.7L1267.7 433.9z" fill="#5f5824" stroke="#5f5824" stroke-width=".5"/><path d="M1262.3 430.9L1269.8 427.9M1267.7 433.9L1275.5 430.7" stroke="#f028f0" stroke-width=".65" fill="none"/><path d="M1282.1 425.1L1307.3 436L1301.9 438.9L1276.6 427.7z" fill="#5f5824" stroke="#5f5824" stroke-width=".5"/><path d="M1282.1 425.1L1307.3 436M1276.6 427.7L1301.9 438.9" stroke="#f028f0" stroke-width=".65" fill="none"/><path d="M1119.8 520.8L1086.2 537.5L1048.8 480.3L1091.8 464.2z" fill="#d4c550" stroke="#d4c550" stroke-width=".5"/><path d="M1091.8 464.2L1048.8 480.3" stroke="#f028f0" stroke-width=".65" fill="none"/><path d="M1125 446.9L1157.4 435L1161.8 438L1129.1 450.2z" fill="#5f5824" stroke="#5f5824" stroke-width=".5"/><path d="M1125 446.9L1157.4 435M1129.1 450.2L1161.8 438" stroke="#f028f0" stroke-width=".65" fill="none"/><path d="M1042.7 466.5L1048.3 471.1L1037.2 475.5L1032 471z" fill="#5f5824" stroke="#5f5824" stroke-width=".5"/><path d="M1042.7 466.5L1048.3 471.1M1032 471L1037.2 475.5" stroke="#f028f0" stroke-width=".65" fill="none"/><path d="M1460.8 558.1L1465.9 551.9L1513.7 494.4L1508.7 500.6z" fill="#070703" stroke="#070703" stroke-width=".5"/><path d="M1508.7 500.6L1513.7 494.4" stroke="#f028f0" stroke-width=".65" fill="none"/><path d="M1319.1 507.4L1295.3 493.5L1301.9 438.9L1330.6 451.6z" fill="#beb148" stroke="#beb148" stroke-width=".5"/><path d="M1330.6 451.6L1301.9 438.9" stroke="#f028f0" stroke-width=".65" fill="none"/><path d="M1251.4 495.4L1243.4 499.3L1240.6 444.2L1250.2 440.6z" fill="#b9ac46" stroke="#b9ac46" stroke-width=".5"/><path d="M1250.2 440.6L1240.6 444.2" stroke="#f028f0" stroke-width=".65" fill="none"/><path d="M1254 434.1L1262.3 430.9L1267.7 433.9L1259.3 437.2z" fill="#605924" stroke="#605924" stroke-width=".5"/><path d="M1254 434.1L1262.3 430.9M1259.3 437.2L1267.7 433.9" stroke="#f028f0" stroke-width=".65" fill="none"/><path d="M1513.7 494.4L1518.7 488.5L1531.6 493.7L1526.9 499.9z" fill="#605924" stroke="#605924" stroke-width=".5"/><path d="M1513.7 494.4L1518.7 488.5M1526.9 499.9L1531.6 493.7" stroke="#f028f0" stroke-width=".65" fill="none"/><path d="M1088.1 460.4L1125 446.9L1129.1 450.2L1091.8 464.2z" fill="#605924" stroke="#605924" stroke-width=".5"/><path d="M1088.1 460.4L1125 446.9M1091.8 464.2L1129.1 450.2" stroke="#f028f0" stroke-width=".65" fill="none"/><path d="M1243.4 499.3L1235.2 503.3L1230.8 447.9L1240.6 444.2z" fill="#bcaf47" stroke="#bcaf47" stroke-width=".5"/><path d="M1240.6 444.2L1230.8 447.9" stroke="#f028f0" stroke-width=".65" fill="none"/><path d="M1048.3 471.1L1052.8 475.9L1041.4 480.3L1037.2 475.5z" fill="#605924" stroke="#605924" stroke-width=".5"/><path d="M1048.3 471.1L1052.8 475.9M1037.2 475.5L1041.4 480.3" stroke="#f028f0" stroke-width=".65" fill="none"/><path d="M1455.7 564.4L1460.8 558.1L1508.7 500.6L1503.7 507z" fill="#0a0904" stroke="#0a0904" stroke-width=".5"/><path d="M1503.7 507L1508.7 500.6" stroke="#f028f0" stroke-width=".65" fill="none"/><clipPath id="o7"><path d="M1135.9 512.8L1149.5 506L1133.6 463.1L1117.5 469.6z"/></clipPath><path d="M1135.9 512.8L1149.5 506L1133.6 463.1L1117.5 469.6z" fill="#000" stroke="#e020e0" stroke-width=".6"/><g clip-path="url(#o7)"><path d="M1149.5 506L1145.7 502.4L1129.6 459.6L1133.6 463.1z" fill="#443f1a"/></g><clipPath id="o10"><path d="M1253.3 494.6L1264 489.3L1264.7 447.3L1252.5 452.3z"/></clipPath><path d="M1253.3 494.6L1264 489.3L1264.7 447.3L1252.5 452.3z" fill="#000" stroke="#e020e0" stroke-width=".6"/><g clip-path="url(#o10)"><path d="M1264 489.3L1259.4 485.9L1259.6 444.2L1264.7 447.3z" fill="#776f2d"/></g><path d="M1245 437.4L1254 434.1L1259.3 437.2L1250.2 440.6z" fill="#605924" stroke="#605924" stroke-width=".5"/><path d="M1245 437.4L1254 434.1M1250.2 440.6L1259.3 437.2" stroke="#f028f0" stroke-width=".65" fill="none"/><path d="M1045.6 475.9L1088.1 460.4L1091.8 464.2L1048.8 480.3z" fill="#605a24" stroke="#605a24" stroke-width=".5"/><path d="M1045.6 475.9L1088.1 460.4M1048.8 480.3L1091.8 464.2" stroke="#f028f0" stroke-width=".65" fill="none"/><path d="M1235.2 503.3L1226.9 507.4L1220.9 451.7L1230.8 447.9z" fill="#beb148" stroke="#beb148" stroke-width=".5"/><path d="M1230.8 447.9L1220.9 451.7" stroke="#f028f0" stroke-width=".65" fill="none"/><path d="M1345.7 522.9L1319.1 507.4L1330.6 451.6L1363.5 466.2z" fill="#c7b94b" stroke="#c7b94b" stroke-width=".5"/><path d="M1363.5 466.2L1330.6 451.6" stroke="#f028f0" stroke-width=".65" fill="none"/><path d="M1307.3 436L1335.9 448.3L1330.6 451.6L1301.9 438.9z" fill="#615a25" stroke="#615a25" stroke-width=".5"/><path d="M1307.3 436L1335.9 448.3M1301.9 438.9L1330.6 451.6" stroke="#f028f0" stroke-width=".65" fill="none"/><path d="M1235.6 440.8L1245 437.4L1250.2 440.6L1240.6 444.2z" fill="#615a25" stroke="#615a25" stroke-width=".5"/><path d="M1235.6 440.8L1245 437.4M1240.6 444.2L1250.2 440.6" stroke="#f028f0" stroke-width=".65" fill="none"/><path d="M1508.7 500.6L1513.7 494.4L1526.9 499.9L1522.1 506.3z" fill="#615a25" stroke="#615a25" stroke-width=".5"/><path d="M1508.7 500.6L1513.7 494.4M1522.1 506.3L1526.9 499.9" stroke="#f028f0" stroke-width=".65" fill="none"/><path d="M1226.9 507.4L1218.9 511.6L1211.2 455.5L1220.9 451.7z" fill="#bfb148" stroke="#bfb148" stroke-width=".5"/><path d="M1220.9 451.7L1211.2 455.5" stroke="#f028f0" stroke-width=".65" fill="none"/><path d="M1450.9 570.9L1455.7 564.4L1503.7 507L1498.8 513.6z" fill="#0d0c05" stroke="#0d0c05" stroke-width=".5"/><path d="M1498.8 513.6L1503.7 507" stroke="#f028f0" stroke-width=".65" fill="none"/><path d="M1052.9 476L1057.7 482.7L1045.9 487.1L1041.3 480.2z" fill="#615a25" stroke="#615a25" stroke-width=".5"/><path d="M1052.9 476L1057.7 482.7M1041.3 480.2L1045.9 487.1" stroke="#f028f0" stroke-width=".65" fill="none"/><path d="M1218.9 511.6L1211.2 515.8L1201.8 459.5L1211.2 455.5z" fill="#beb048" stroke="#beb048" stroke-width=".5"/><path d="M1211.2 455.5L1201.8 459.5" stroke="#f028f0" stroke-width=".65" fill="none"/><path d="M1225.8 444.4L1235.6 440.8L1240.6 444.2L1230.8 447.9z" fill="#625b25" stroke="#625b25" stroke-width=".5"/><path d="M1225.8 444.4L1235.6 440.8M1230.8 447.9L1240.6 444.2" stroke="#f028f0" stroke-width=".65" fill="none"/><path d="M1098.9 547.8L1104.3 556.4L1068 498.9L1062.7 490.4z" fill="#070703" stroke="#070703" stroke-width=".5"/><path d="M1062.7 490.4L1068 498.9" stroke="#f028f0" stroke-width=".65" fill="none"/><path d="M1211.2 515.8L1204.1 520.1L1193.1 463.5L1201.8 459.5z" fill="#bbae47" stroke="#bbae47" stroke-width=".5"/><path d="M1201.8 459.5L1193.1 463.5" stroke="#f028f0" stroke-width=".65" fill="none"/><path d="M1375.9 540.5L1345.7 522.9L1363.5 466.2L1401.7 483.2z" fill="#cfc04e" stroke="#cfc04e" stroke-width=".5"/><path d="M1401.7 483.2L1363.5 466.2" stroke="#f028f0" stroke-width=".65" fill="none"/><path d="M1446.4 577.5L1450.9 570.9L1498.8 513.6L1494.4 520.4z" fill="#111006" stroke="#111006" stroke-width=".5"/><path d="M1494.4 520.4L1498.8 513.6" stroke="#f028f0" stroke-width=".65" fill="none"/><path d="M1503.7 507L1508.7 500.6L1522.1 506.3L1517.4 512.9z" fill="#625b25" stroke="#625b25" stroke-width=".5"/><path d="M1503.7 507L1508.7 500.6M1517.4 512.9L1522.1 506.3" stroke="#f028f0" stroke-width=".65" fill="none"/><path d="M1215.9 448.1L1225.8 444.4L1230.8 447.9L1220.9 451.7z" fill="#625b25" stroke="#625b25" stroke-width=".5"/><path d="M1215.9 448.1L1225.8 444.4M1220.9 451.7L1230.8 447.9" stroke="#f028f0" stroke-width=".65" fill="none"/><path d="M1204.1 520.1L1197.8 524.3L1185.4 467.6L1193.1 463.5z" fill="#b6a945" stroke="#b6a945" stroke-width=".5"/><path d="M1193.1 463.5L1185.4 467.6" stroke="#f028f0" stroke-width=".65" fill="none"/><path d="M1446.4 577.5L1456.8 583.7L1508.8 526.8L1494.4 520.4z" fill="#d4c550" stroke="#d4c550" stroke-width=".5"/><path d="M1057.7 482.7L1062.7 490.4L1050.5 495L1045.9 487.1z" fill="#635c25" stroke="#635c25" stroke-width=".5"/><path d="M1057.7 482.7L1062.7 490.4M1045.9 487.1L1050.5 495" stroke="#f028f0" stroke-width=".65" fill="none"/><path d="M1335.9 448.3L1368.7 462.5L1363.5 466.2L1330.6 451.6z" fill="#635c25" stroke="#635c25" stroke-width=".5"/><path d="M1335.9 448.3L1368.7 462.5M1330.6 451.6L1363.5 466.2" stroke="#f028f0" stroke-width=".65" fill="none"/><path d="M1444.7 580.2L1446.3 577.6L1494.4 520.4L1492.8 523.1z" fill="#191709" stroke="#191709" stroke-width=".5"/><path d="M1492.8 523.1L1494.4 520.4" stroke="#f028f0" stroke-width=".65" fill="none"/><path d="M1410.2 560.5L1375.9 540.5L1401.7 483.2L1446.5 503z" fill="#d3c450" stroke="#d3c450" stroke-width=".5"/><path d="M1446.5 503L1401.7 483.2" stroke="#f028f0" stroke-width=".65" fill="none"/><path d="M1197.8 524.3L1192.7 528.5L1178.9 471.6L1185.4 467.6z" fill="#aca041" stroke="#aca041" stroke-width=".5"/><path d="M1185.4 467.6L1178.9 471.6" stroke="#f028f0" stroke-width=".65" fill="none"/><path d="M1206 451.9L1215.9 448.1L1220.9 451.7L1211.2 455.5z" fill="#635c25" stroke="#635c25" stroke-width=".5"/><path d="M1206 451.9L1215.9 448.1M1211.2 455.5L1220.9 451.7" stroke="#f028f0" stroke-width=".65" fill="none"/><path d="M1449.7 583.5L1410.2 560.5L1446.5 503L1499.8 526.6z" fill="#d4c550" stroke="#d4c550" stroke-width=".5"/><path d="M1499.8 526.6L1446.5 503" stroke="#f028f0" stroke-width=".65" fill="none"/><path d="M1104.3 556.4L1109.9 565.8L1073.6 508.4L1068 498.9z" fill="#090803" stroke="#090803" stroke-width=".5"/><path d="M1068 498.9L1073.6 508.4" stroke="#f028f0" stroke-width=".65" fill="none"/><path d="M1443.1 582.9L1444.7 580.2L1492.8 523.1L1491.3 526z" fill="#1b190a" stroke="#1b190a" stroke-width=".5"/><path d="M1491.3 526L1492.8 523.1" stroke="#f028f0" stroke-width=".65" fill="none"/><path d="M1192.7 528.5L1188.8 532.5L1174 475.4L1178.9 471.6z" fill="#877d33" stroke="#877d33" stroke-width=".5"/><path d="M1178.9 471.6L1174 475.4" stroke="#f028f0" stroke-width=".65" fill="none"/><path d="M1498.8 513.6L1503.7 507L1517.4 512.9L1512.9 519.8z" fill="#635c26" stroke="#635c26" stroke-width=".5"/><path d="M1498.8 513.6L1503.7 507M1512.9 519.8L1517.4 512.9" stroke="#f028f0" stroke-width=".65" fill="none"/><path d="M1196.4 455.9L1206 451.9L1211.2 455.5L1201.8 459.5z" fill="#645d26" stroke="#645d26" stroke-width=".5"/><path d="M1196.4 455.9L1206 451.9M1201.8 459.5L1211.2 455.5" stroke="#f028f0" stroke-width=".65" fill="none"/><path d="M1441.5 585.8L1443.1 582.9L1491.3 526L1489.8 529z" fill="#1e1c0b" stroke="#1e1c0b" stroke-width=".5"/><path d="M1489.8 529L1491.3 526" stroke="#f028f0" stroke-width=".65" fill="none"/><path d="M1178.4 535L1186.3 536.7L1170.7 479.4L1161.2 477.8z" fill="#a69b3f" stroke="#a69b3f" stroke-width=".5"/><path d="M1188.8 532.5L1186.3 536.7L1170.7 479.4L1174 475.4z" fill="#635c25" stroke="#635c25" stroke-width=".5"/><path d="M1174 475.4L1170.7 479.4" stroke="#f028f0" stroke-width=".65" fill="none"/><path d="M1439.9 588.8L1441.5 585.8L1489.8 529L1488.4 532.2z" fill="#201e0c" stroke="#201e0c" stroke-width=".5"/><path d="M1488.4 532.2L1489.8 529" stroke="#f028f0" stroke-width=".65" fill="none"/><path d="M1187.3 460L1196.4 455.9L1201.8 459.5L1193.1 463.5z" fill="#686127" stroke="#686127" stroke-width=".5"/><path d="M1187.3 460L1196.4 455.9M1193.1 463.5L1201.8 459.5" stroke="#f028f0" stroke-width=".65" fill="none"/><path d="M1368.7 462.5L1406.5 478.8L1401.7 483.2L1363.5 466.2z" fill="#686127" stroke="#686127" stroke-width=".5"/><path d="M1368.7 462.5L1406.5 478.8M1363.5 466.2L1401.7 483.2" stroke="#f028f0" stroke-width=".65" fill="none"/><path d="M1062.7 490.4L1068 498.9L1055.5 503.8L1050.5 495z" fill="#696128" stroke="#696128" stroke-width=".5"/><path d="M1062.7 490.4L1068 498.9M1050.5 495L1055.5 503.8" stroke="#f028f0" stroke-width=".65" fill="none"/><path d="M1186.6 535.9L1185.4 540.1L1169.4 482.7L1171.1 478.7z" fill="#47421b" stroke="#47421b" stroke-width=".5"/><path d="M1171.1 478.7L1169.4 482.7" stroke="#f028f0" stroke-width=".65" fill="none"/><clipPath id="o9"><path d="M1199.9 523L1211.2 515.9L1204 472.6L1190.7 479.5z"/></clipPath><path d="M1199.9 523L1211.2 515.9L1204 472.6L1190.7 479.5z" fill="#000" stroke="#e020e0" stroke-width=".6"/><g clip-path="url(#o9)"><path d="M1211.2 515.9L1206.1 512.2L1198.2 469L1204 472.6z" fill="#5e5724"/></g><path d="M1438.3 591.8L1439.9 588.8L1488.4 532.2L1486.9 535.4z" fill="#211e0c" stroke="#211e0c" stroke-width=".5"/><path d="M1486.9 535.4L1488.4 532.2" stroke="#f028f0" stroke-width=".65" fill="none"/><path d="M1494.4 520.4L1498.8 513.6L1512.9 519.8L1508.8 526.8z" fill="#6c6529" stroke="#6c6529" stroke-width=".5"/><path d="M1494.4 520.4L1498.8 513.6M1508.8 526.8L1512.9 519.8" stroke="#f028f0" stroke-width=".65" fill="none"/><path d="M1109.9 565.8L1115.9 575.9L1079.7 518.7L1073.6 508.4z" fill="#0a0904" stroke="#0a0904" stroke-width=".5"/><path d="M1073.6 508.4L1079.7 518.7" stroke="#f028f0" stroke-width=".65" fill="none"/><path d="M1178.9 464.2L1187.3 460L1193.1 463.5L1185.4 467.6z" fill="#6d6529" stroke="#6d6529" stroke-width=".5"/><path d="M1178.9 464.2L1187.3 460M1185.4 467.6L1193.1 463.5" stroke="#f028f0" stroke-width=".65" fill="none"/><path d="M1185.4 540.1L1185.7 543.8L1169.5 486.4L1169.4 482.7z" fill="#24210e" stroke="#24210e" stroke-width=".5"/><path d="M1169.4 482.7L1169.5 486.4" stroke="#f028f0" stroke-width=".65" fill="none"/><path d="M1436.7 594.9L1438.3 591.8L1486.9 535.4L1485.3 538.6z" fill="#211e0c" stroke="#211e0c" stroke-width=".5"/><path d="M1485.3 538.6L1486.9 535.4" stroke="#f028f0" stroke-width=".65" fill="none"/><path d="M1406.5 478.8L1450.8 497.9L1446.5 503L1401.7 483.2z" fill="#70682a" stroke="#70682a" stroke-width=".5"/><path d="M1406.5 478.8L1450.8 497.9M1401.7 483.2L1446.5 503" stroke="#f028f0" stroke-width=".65" fill="none"/><path d="M1171.5 468.6L1178.9 464.2L1185.4 467.6L1178.9 471.6z" fill="#71692b" stroke="#71692b" stroke-width=".5"/><path d="M1171.5 468.6L1178.9 464.2M1178.9 471.6L1185.4 467.6" stroke="#f028f0" stroke-width=".65" fill="none"/><path d="M1435 598L1436.7 594.9L1485.3 538.6L1483.8 541.9z" fill="#201e0c" stroke="#201e0c" stroke-width=".5"/><path d="M1483.8 541.9L1485.3 538.6" stroke="#f028f0" stroke-width=".65" fill="none"/><path d="M1450.8 497.9L1503.2 520.5L1499.8 526.6L1446.5 503z" fill="#726a2b" stroke="#726a2b" stroke-width=".5"/><path d="M1450.8 497.9L1503.2 520.5M1446.5 503L1499.8 526.6" stroke="#f028f0" stroke-width=".65" fill="none"/><path d="M1178.7 551.3L1176.8 546.1L1158.3 488.7L1160.3 493.8z" fill="#0b0a04" stroke="#0b0a04" stroke-width=".5"/><path d="M1160.3 493.8L1158.3 488.7" stroke="#f028f0" stroke-width=".65" fill="none"/><path d="M1492.8 523.1L1494.4 520.4L1508.8 526.7L1507.4 529.5z" fill="#736b2c" stroke="#736b2c" stroke-width=".5"/><path d="M1492.8 523.1L1494.4 520.4M1507.4 529.5L1508.8 526.7" stroke="#f028f0" stroke-width=".65" fill="none"/><path d="M1433.3 601L1435 598L1483.8 541.9L1482.1 545.1z" fill="#1e1c0b" stroke="#1e1c0b" stroke-width=".5"/><path d="M1482.1 545.1L1483.8 541.9" stroke="#f028f0" stroke-width=".65" fill="none"/><path d="M1165.3 473.3L1171.5 468.6L1178.9 471.6L1174 475.4z" fill="#766e2d" stroke="#766e2d" stroke-width=".5"/><path d="M1165.3 473.3L1171.5 468.6M1174 475.4L1178.9 471.6" stroke="#f028f0" stroke-width=".65" fill="none"/><path d="M1068 498.9L1073.6 508.4L1060.7 513.7L1055.5 503.8z" fill="#776f2d" stroke="#776f2d" stroke-width=".5"/><path d="M1068 498.9L1073.6 508.4M1055.5 503.8L1060.7 513.7" stroke="#f028f0" stroke-width=".65" fill="none"/><path d="M1491.3 526L1492.8 523.1L1507.4 529.5L1506.1 532.4z" fill="#776f2d" stroke="#776f2d" stroke-width=".5"/><path d="M1491.3 526L1492.8 523.1M1506.1 532.4L1507.4 529.5" stroke="#f028f0" stroke-width=".65" fill="none"/><path d="M1431.5 604L1433.3 601L1482.1 545.1L1480.4 548.3z" fill="#1b190a" stroke="#1b190a" stroke-width=".5"/><path d="M1480.4 548.3L1482.1 545.1" stroke="#f028f0" stroke-width=".65" fill="none"/><path d="M1115.9 575.9L1122.3 586.6L1086.2 529.8L1079.7 518.7z" fill="#0a0904" stroke="#0a0904" stroke-width=".5"/><path d="M1079.7 518.7L1086.2 529.8" stroke="#f028f0" stroke-width=".65" fill="none"/><path d="M1182 556.3L1178.7 551.3L1160.3 493.8L1164.1 498.8z" fill="#2c2911" stroke="#2c2911" stroke-width=".5"/><path d="M1164.1 498.8L1160.3 493.8" stroke="#f028f0" stroke-width=".65" fill="none"/><path d="M1489.8 529L1491.3 526L1506.1 532.4L1504.8 535.5z" fill="#7c732f" stroke="#7c732f" stroke-width=".5"/><path d="M1489.8 529L1491.3 526M1504.8 535.5L1506.1 532.4" stroke="#f028f0" stroke-width=".65" fill="none"/><path d="M1161.2 477.8L1165.3 473.3L1174 475.4L1170.7 479.4z" fill="#7c732f" stroke="#7c732f" stroke-width=".5"/><path d="M1161.2 477.8L1165.3 473.3M1170.7 479.4L1174 475.4" stroke="#f028f0" stroke-width=".65" fill="none"/><path d="M1429.6 606.8L1431.5 604L1480.4 548.3L1478.5 551.4z" fill="#181609" stroke="#181609" stroke-width=".5"/><path d="M1478.5 551.4L1480.4 548.3" stroke="#f028f0" stroke-width=".65" fill="none"/><path d="M1427.7 609.5L1429.6 606.8L1478.5 551.4L1476.5 554.3z" fill="#131107" stroke="#131107" stroke-width=".5"/><path d="M1476.5 554.3L1478.5 551.4" stroke="#f028f0" stroke-width=".65" fill="none"/><path d="M1488.4 532.2L1489.8 529L1504.8 535.5L1503.4 538.7z" fill="#807730" stroke="#807730" stroke-width=".5"/><path d="M1488.4 532.2L1489.8 529M1503.4 538.7L1504.8 535.5" stroke="#f028f0" stroke-width=".65" fill="none"/><path d="M1186.6 561.1L1182 556.3L1164.1 498.8L1169.4 503.6z" fill="#45401a" stroke="#45401a" stroke-width=".5"/><path d="M1169.4 503.6L1164.1 498.8" stroke="#f028f0" stroke-width=".65" fill="none"/><path d="M1171.1 478.7L1169.4 482.7L1158.5 483.4L1160.7 478.6z" fill="#827931" stroke="#827931" stroke-width=".5"/><path d="M1171.1 478.7L1169.4 482.7M1160.7 478.6L1158.5 483.4" stroke="#f028f0" stroke-width=".65" fill="none"/><path d="M1425.7 612L1427.7 609.5L1476.5 554.3L1474.4 557.1z" fill="#0c0b05" stroke="#0c0b05" stroke-width=".5"/><path d="M1474.4 557.1L1476.5 554.3" stroke="#f028f0" stroke-width=".65" fill="none"/><path d="M1486.9 535.4L1488.4 532.2L1503.4 538.7L1502.1 542.1z" fill="#847b32" stroke="#847b32" stroke-width=".5"/><path d="M1486.9 535.4L1488.4 532.2M1502.1 542.1L1503.4 538.7" stroke="#f028f0" stroke-width=".65" fill="none"/><path d="M1073.6 508.4L1079.7 518.7L1066.3 524.4L1060.7 513.7z" fill="#877e33" stroke="#877e33" stroke-width=".5"/><path d="M1073.6 508.4L1079.7 518.7M1060.7 513.7L1066.3 524.4" stroke="#f028f0" stroke-width=".65" fill="none"/><path d="M1122.3 586.6L1129 597.6L1093.3 541.5L1086.2 529.8z" fill="#090803" stroke="#090803" stroke-width=".5"/><path d="M1086.2 529.8L1093.3 541.5" stroke="#f028f0" stroke-width=".65" fill="none"/><path d="M1192.2 565.9L1186.6 561.1L1169.4 503.6L1176 508.5z" fill="#554f20" stroke="#554f20" stroke-width=".5"/><path d="M1176 508.5L1169.4 503.6" stroke="#f028f0" stroke-width=".65" fill="none"/><path d="M1169.4 482.7L1169.5 486.4L1158.3 488.7L1158.5 483.4z" fill="#887f33" stroke="#887f33" stroke-width=".5"/><path d="M1169.4 482.7L1169.5 486.4M1158.5 483.4L1158.3 488.7" stroke="#f028f0" stroke-width=".65" fill="none"/><path d="M1485.3 538.6L1486.9 535.4L1502.1 542.1L1500.7 545.5z" fill="#897f34" stroke="#897f34" stroke-width=".5"/><path d="M1485.3 538.6L1486.9 535.4M1500.7 545.5L1502.1 542.1" stroke="#f028f0" stroke-width=".65" fill="none"/><path d="M1434.2 622.7L1431.8 625.1L1484.6 571.5L1487.3 568.9z" fill="#060602" stroke="#060602" stroke-width=".5"/><path d="M1487.3 568.9L1484.6 571.5" stroke="#f028f0" stroke-width=".65" fill="none"/><path d="M1421.4 616.3L1431.8 625.1L1484.6 571.5L1469.5 561.8z" fill="#beb148" stroke="#beb148" stroke-width=".5"/><path d="M1483.8 541.9L1485.3 538.6L1500.7 545.5L1499.2 549z" fill="#8d8335" stroke="#8d8335" stroke-width=".5"/><path d="M1483.8 541.9L1485.3 538.6M1499.2 549L1500.7 545.5" stroke="#f028f0" stroke-width=".65" fill="none"/><path d="M1430.4 625.9L1426.4 627.1L1477.9 573.7L1483 572.4z" fill="#4c461d" stroke="#4c461d" stroke-width=".5"/><path d="M1483 572.4L1477.9 573.7" stroke="#f028f0" stroke-width=".65" fill="none"/><path d="M1198.6 570.7L1192.2 565.9L1176 508.5L1183.7 513.4z" fill="#585221" stroke="#585221" stroke-width=".5"/><path d="M1183.7 513.4L1176 508.5" stroke="#f028f0" stroke-width=".65" fill="none"/><path d="M1169.5 486.4L1171.2 490.2L1160.3 493.8L1158.3 488.7z" fill="#908536" stroke="#908536" stroke-width=".5"/><path d="M1169.5 486.4L1171.2 490.2M1158.3 488.7L1160.3 493.8" stroke="#f028f0" stroke-width=".65" fill="none"/><path d="M1426.4 627.1L1421.6 627.6L1471.7 574.4L1477.9 573.7z" fill="#575121" stroke="#575121" stroke-width=".5"/><path d="M1477.9 573.7L1471.7 574.4" stroke="#f028f0" stroke-width=".65" fill="none"/><path d="M1482.1 545.1L1483.8 541.9L1499.2 549L1497.7 552.5z" fill="#928837" stroke="#928837" stroke-width=".5"/><path d="M1482.1 545.1L1483.8 541.9M1497.7 552.5L1499.2 549" stroke="#f028f0" stroke-width=".65" fill="none"/><path d="M1421.6 627.6L1416.5 627.6L1465 574.4L1471.7 574.4z" fill="#5d5623" stroke="#5d5623" stroke-width=".5"/><path d="M1471.7 574.4L1465 574.4" stroke="#f028f0" stroke-width=".65" fill="none"/><path d="M1129 597.6L1136.2 608.9L1101 553.7L1093.3 541.5z" fill="#060602" stroke="#060602" stroke-width=".5"/><path d="M1093.3 541.5L1101 553.7" stroke="#f028f0" stroke-width=".65" fill="none"/><path d="M1205.7 575.5L1198.6 570.7L1183.7 513.4L1192.3 518.3z" fill="#5b5422" stroke="#5b5422" stroke-width=".5"/><path d="M1192.3 518.3L1183.7 513.4" stroke="#f028f0" stroke-width=".65" fill="none"/><path d="M1480.4 548.3L1482.1 545.1L1497.7 552.5L1496 556z" fill="#978c39" stroke="#978c39" stroke-width=".5"/><path d="M1480.4 548.3L1482.1 545.1M1496 556L1497.7 552.5" stroke="#f028f0" stroke-width=".65" fill="none"/><path d="M1171.2 490.2L1174.4 494.2L1164.1 498.8L1160.3 493.8z" fill="#988d39" stroke="#988d39" stroke-width=".5"/><path d="M1171.2 490.2L1174.4 494.2M1160.3 493.8L1164.1 498.8" stroke="#f028f0" stroke-width=".65" fill="none"/><path d="M1416.5 627.6L1411.2 627.2L1458.1 573.9L1465 574.4z" fill="#615a24" stroke="#615a24" stroke-width=".5"/><path d="M1465 574.4L1458.1 573.9" stroke="#f028f0" stroke-width=".65" fill="none"/><path d="M1079.7 518.7L1086.2 529.8L1072.5 536L1066.3 524.4z" fill="#988e3a" stroke="#988e3a" stroke-width=".5"/><path d="M1079.7 518.7L1086.2 529.8M1066.3 524.4L1072.5 536" stroke="#f028f0" stroke-width=".65" fill="none"/><path d="M1411.2 627.2L1405.9 626.4L1451.1 573L1458.1 573.9z" fill="#635c25" stroke="#635c25" stroke-width=".5"/><path d="M1458.1 573.9L1451.1 573" stroke="#f028f0" stroke-width=".65" fill="none"/><path d="M1478.5 551.4L1480.4 548.3L1496 556L1494.1 559.4z" fill="#9b903b" stroke="#9b903b" stroke-width=".5"/><path d="M1478.5 551.4L1480.4 548.3M1494.1 559.4L1496 556" stroke="#f028f0" stroke-width=".65" fill="none"/><path d="M1405.9 626.4L1400.7 625.4L1444 571.9L1451.1 573z" fill="#6b6428" stroke="#6b6428" stroke-width=".5"/><path d="M1451.1 573L1444 571.9" stroke="#f028f0" stroke-width=".65" fill="none"/><path d="M1213.2 580.3L1205.7 575.5L1192.3 518.3L1201.5 523.3z" fill="#5c5623" stroke="#5c5623" stroke-width=".5"/><path d="M1201.5 523.3L1192.3 518.3" stroke="#f028f0" stroke-width=".65" fill="none"/><path d="M1400.7 625.4L1395.5 624.4L1437.1 570.8L1444 571.9z" fill="#71692b" stroke="#71692b" stroke-width=".5"/><path d="M1444 571.9L1437.1 570.8" stroke="#f028f0" stroke-width=".65" fill="none"/><path d="M1476.5 554.3L1478.5 551.4L1494.1 559.4L1492.1 562.8z" fill="#a0953c" stroke="#a0953c" stroke-width=".5"/><path d="M1476.5 554.3L1478.5 551.4M1492.1 562.8L1494.1 559.4" stroke="#f028f0" stroke-width=".65" fill="none"/><path d="M1174.4 494.2L1179.2 498.3L1169.4 503.6L1164.1 498.8z" fill="#a0953c" stroke="#a0953c" stroke-width=".5"/><path d="M1174.4 494.2L1179.2 498.3M1164.1 498.8L1169.4 503.6" stroke="#f028f0" stroke-width=".65" fill="none"/><path d="M1395.5 624.4L1390.5 623.5L1430.5 569.8L1437.1 570.8z" fill="#726a2b" stroke="#726a2b" stroke-width=".5"/><path d="M1437.1 570.8L1430.5 569.8" stroke="#f028f0" stroke-width=".65" fill="none"/><path d="M1390.5 623.5L1385.7 622.7L1424.1 568.9L1430.5 569.8z" fill="#6e662a" stroke="#6e662a" stroke-width=".5"/><path d="M1430.5 569.8L1424.1 568.9" stroke="#f028f0" stroke-width=".65" fill="none"/><path d="M1474.4 557.1L1476.5 554.3L1492.1 562.8L1489.8 565.9z" fill="#a5993e" stroke="#a5993e" stroke-width=".5"/><path d="M1474.4 557.1L1476.5 554.3M1489.8 565.9L1492.1 562.8" stroke="#f028f0" stroke-width=".65" fill="none"/><path d="M1220.9 585.2L1213.2 580.3L1201.5 523.3L1211 528.4z" fill="#5d5623" stroke="#5d5623" stroke-width=".5"/><path d="M1211 528.4L1201.5 523.3" stroke="#f028f0" stroke-width=".65" fill="none"/><path d="M1385.7 622.7L1381.2 622.1L1418.2 568.2L1424.1 568.9z" fill="#655e26" stroke="#655e26" stroke-width=".5"/><path d="M1424.1 568.9L1418.2 568.2" stroke="#f028f0" stroke-width=".65" fill="none"/><path d="M1381.2 622.1L1377.1 621.9L1412.8 568L1418.2 568.2z" fill="#625b25" stroke="#625b25" stroke-width=".5"/><path d="M1418.2 568.2L1412.8 568" stroke="#f028f0" stroke-width=".65" fill="none"/><path d="M1472.1 559.5L1474.4 557.1L1489.8 565.9L1487.3 568.9z" fill="#a99d40" stroke="#a99d40" stroke-width=".5"/><path d="M1472.1 559.5L1474.4 557.1M1487.3 568.9L1489.8 565.9" stroke="#f028f0" stroke-width=".65" fill="none"/><path d="M1179.2 498.3L1185.4 502.6L1176 508.5L1169.4 503.6z" fill="#a99d40" stroke="#a99d40" stroke-width=".5"/><path d="M1179.2 498.3L1185.4 502.6M1169.4 503.6L1176 508.5" stroke="#f028f0" stroke-width=".65" fill="none"/><path d="M1377.1 621.9L1373.4 622L1408 568.2L1412.8 568z" fill="#5f5824" stroke="#5f5824" stroke-width=".5"/><path d="M1412.8 568L1408 568.2" stroke="#f028f0" stroke-width=".65" fill="none"/><path d="M1086.2 529.8L1093.3 541.5L1079.1 548.3L1072.5 536z" fill="#aa9e40" stroke="#aa9e40" stroke-width=".5"/><path d="M1086.2 529.8L1093.3 541.5M1072.5 536L1079.1 548.3" stroke="#f028f0" stroke-width=".65" fill="none"/><path d="M1228.7 590.3L1220.9 585.2L1211 528.4L1220.7 533.7z" fill="#5d5723" stroke="#5d5723" stroke-width=".5"/><path d="M1220.7 533.7L1211 528.4" stroke="#f028f0" stroke-width=".65" fill="none"/><path d="M1373.4 622L1370.1 622.6L1403.8 568.8L1408 568.2z" fill="#5a5422" stroke="#5a5422" stroke-width=".5"/><path d="M1408 568.2L1403.8 568.8" stroke="#f028f0" stroke-width=".65" fill="none"/><path d="M1469.5 561.8L1472.1 559.5L1487.3 568.9L1484.6 571.5z" fill="#ab9f41" stroke="#ab9f41" stroke-width=".5"/><path d="M1469.5 561.8L1472.1 559.5M1484.6 571.5L1487.3 568.9" stroke="#f028f0" stroke-width=".65" fill="none"/><path d="M1360.2 613.9L1366.8 623.9L1399.6 570.2L1390 559.2z" fill="#70682a" stroke="#70682a" stroke-width=".5"/><path d="M1370.1 622.6L1366.8 623.9L1399.6 570.2L1403.8 568.8z" fill="#565021" stroke="#565021" stroke-width=".5"/><path d="M1403.8 568.8L1399.6 570.2" stroke="#f028f0" stroke-width=".65" fill="none"/><path d="M1367.6 623.5L1364.4 625.5L1396.8 572L1400.6 569.8z" fill="#353114" stroke="#353114" stroke-width=".5"/><path d="M1400.6 569.8L1396.8 572" stroke="#f028f0" stroke-width=".65" fill="none"/><path d="M1467.2 562.1L1471.1 561L1483 572.4L1477.9 573.7z" fill="#ada141" stroke="#ada141" stroke-width=".5"/><path d="M1467.2 562.1L1471.1 561M1477.9 573.7L1483 572.4" stroke="#f028f0" stroke-width=".65" fill="none"/><path d="M1236.2 595.4L1228.7 590.3L1220.7 533.7L1230.1 539.2z" fill="#5d5623" stroke="#5d5623" stroke-width=".5"/><path d="M1230.1 539.2L1220.7 533.7" stroke="#f028f0" stroke-width=".65" fill="none"/><path d="M1185.4 502.6L1192.7 507L1183.7 513.4L1176 508.5z" fill="#aea142" stroke="#aea142" stroke-width=".5"/><path d="M1185.4 502.6L1192.7 507M1176 508.5L1183.7 513.4" stroke="#f028f0" stroke-width=".65" fill="none"/><path d="M1364.4 625.5L1361.9 628L1393.8 574.8L1396.8 572z" fill="#23210d" stroke="#23210d" stroke-width=".5"/><path d="M1396.8 572L1393.8 574.8" stroke="#f028f0" stroke-width=".65" fill="none"/><path d="M1463 562.5L1467.2 562.1L1477.9 573.7L1471.7 574.4z" fill="#afa342" stroke="#afa342" stroke-width=".5"/><path d="M1463 562.5L1467.2 562.1M1471.7 574.4L1477.9 573.7" stroke="#f028f0" stroke-width=".65" fill="none"/><path d="M1361.9 628L1359.6 631.4L1391 578.6L1393.8 574.8z" fill="#100f06" stroke="#100f06" stroke-width=".5"/><path d="M1393.8 574.8L1391 578.6" stroke="#f028f0" stroke-width=".65" fill="none"/><path d="M1243.2 600.8L1236.2 595.4L1230.1 539.2L1238.9 544.9z" fill="#5c5523" stroke="#5c5523" stroke-width=".5"/><path d="M1238.9 544.9L1230.1 539.2" stroke="#f028f0" stroke-width=".65" fill="none"/><path d="M1458.1 562.4L1463 562.5L1471.7 574.4L1465 574.4z" fill="#b1a443" stroke="#b1a443" stroke-width=".5"/><path d="M1458.1 562.4L1463 562.5M1465 574.4L1471.7 574.4" stroke="#f028f0" stroke-width=".65" fill="none"/><path d="M1192.7 507L1201 511.6L1192.3 518.3L1183.7 513.4z" fill="#b2a643" stroke="#b2a643" stroke-width=".5"/><path d="M1192.7 507L1201 511.6M1183.7 513.4L1192.3 518.3" stroke="#f028f0" stroke-width=".65" fill="none"/><path d="M1149.1 649.9L1140.9 639.1L1103.3 587.4L1112.8 599.9z" fill="#090803" stroke="#090803" stroke-width=".5"/><path d="M1112.8 599.9L1103.3 587.4" stroke="#f028f0" stroke-width=".65" fill="none"/><path d="M1452.6 562L1458.1 562.4L1465 574.4L1458.1 573.9z" fill="#b3a643" stroke="#b3a643" stroke-width=".5"/><path d="M1452.6 562L1458.1 562.4M1458.1 573.9L1465 574.4" stroke="#f028f0" stroke-width=".65" fill="none"/><path d="M1093.3 541.5L1101 553.7L1086.5 561.2L1079.1 548.3z" fill="#b3a643" stroke="#b3a643" stroke-width=".5"/><path d="M1093.3 541.5L1101 553.7M1079.1 548.3L1086.5 561.2" stroke="#f028f0" stroke-width=".65" fill="none"/><path d="M1257 599.4L1249.6 606.4L1247.1 551L1256.6 543.4z" fill="#5c5623" stroke="#5c5623" stroke-width=".5"/><path d="M1249.6 606.4L1243.2 600.8L1238.9 544.9L1247.1 551z" fill="#5b5422" stroke="#5b5422" stroke-width=".5"/><path d="M1247.1 551L1238.9 544.9" stroke="#f028f0" stroke-width=".65" fill="none"/><path d="M1344 633.5L1346.4 628.7L1373.6 575.5L1370.8 581z" fill="#060602" stroke="#060602" stroke-width=".5"/><path d="M1370.8 581L1373.6 575.5" stroke="#f028f0" stroke-width=".65" fill="none"/><path d="M1446.6 561.3L1452.6 562L1458.1 573.9L1451.1 573z" fill="#b4a744" stroke="#b4a744" stroke-width=".5"/><path d="M1446.6 561.3L1452.6 562M1451.1 573L1458.1 573.9" stroke="#f028f0" stroke-width=".65" fill="none"/><path d="M1253.5 610.4L1249.4 606.2L1246.8 550.7L1252.1 555.3z" fill="#585221" stroke="#585221" stroke-width=".5"/><path d="M1252.1 555.3L1246.8 550.7" stroke="#f028f0" stroke-width=".65" fill="none"/><path d="M1257.4 606.1L1253.2 610.4L1251.6 555.3L1257 550.6z" fill="#595322" stroke="#595322" stroke-width=".5"/><path d="M1257 550.6L1251.6 555.3" stroke="#f028f0" stroke-width=".65" fill="none"/><path d="M1440.2 560.4L1446.6 561.3L1451.1 573L1444 571.9z" fill="#b6a945" stroke="#b6a945" stroke-width=".5"/><path d="M1440.2 560.4L1446.6 561.3M1444 571.9L1451.1 573" stroke="#f028f0" stroke-width=".65" fill="none"/><path d="M1341.7 638.5L1344 633.5L1370.8 581L1368.3 586.7z" fill="#0b0a04" stroke="#0b0a04" stroke-width=".5"/><path d="M1368.3 586.7L1370.8 581" stroke="#f028f0" stroke-width=".65" fill="none"/><path d="M1201 511.6L1209.9 516.3L1201.5 523.3L1192.3 518.3z" fill="#b7aa45" stroke="#b7aa45" stroke-width=".5"/><path d="M1201 511.6L1209.9 516.3M1192.3 518.3L1201.5 523.3" stroke="#f028f0" stroke-width=".65" fill="none"/><path d="M1433.7 559.4L1440.2 560.4L1444 571.9L1437.1 570.8z" fill="#b7aa45" stroke="#b7aa45" stroke-width=".5"/><path d="M1433.7 559.4L1440.2 560.4M1437.1 570.8L1444 571.9" stroke="#f028f0" stroke-width=".65" fill="none"/><path d="M1257.8 615.1L1253.5 610.4L1252.1 555.3L1257.6 560.5z" fill="#575121" stroke="#575121" stroke-width=".5"/><path d="M1257.6 560.5L1252.1 555.3" stroke="#f028f0" stroke-width=".65" fill="none"/><path d="M1253.2 610.4L1249.3 615.5L1246.6 560.9L1251.6 555.3z" fill="#575121" stroke="#575121" stroke-width=".5"/><path d="M1251.6 555.3L1246.6 560.9" stroke="#f028f0" stroke-width=".65" fill="none"/><path d="M1157.6 659.7L1149.1 649.9L1112.8 599.9L1123 611.3z" fill="#111006" stroke="#111006" stroke-width=".5"/><path d="M1123 611.3L1112.8 599.9" stroke="#f028f0" stroke-width=".65" fill="none"/><path d="M1339.5 643.6L1341.7 638.5L1368.3 586.7L1365.8 592.5z" fill="#0c0b05" stroke="#0c0b05" stroke-width=".5"/><path d="M1365.8 592.5L1368.3 586.7" stroke="#f028f0" stroke-width=".65" fill="none"/><path d="M1427 558.4L1433.7 559.4L1437.1 570.8L1430.5 569.8z" fill="#b8ab46" stroke="#b8ab46" stroke-width=".5"/><path d="M1427 558.4L1433.7 559.4M1430.5 569.8L1437.1 570.8" stroke="#f028f0" stroke-width=".65" fill="none"/><path d="M1262.2 620.4L1257.8 615.1L1257.6 560.5L1263.3 566.3z" fill="#575121" stroke="#575121" stroke-width=".5"/><path d="M1263.3 566.3L1257.6 560.5" stroke="#f028f0" stroke-width=".65" fill="none"/><path d="M1249.3 615.5L1245.5 621.5L1241.6 567.5L1246.6 560.9z" fill="#544e20" stroke="#544e20" stroke-width=".5"/><path d="M1246.6 560.9L1241.6 567.5" stroke="#f028f0" stroke-width=".65" fill="none"/><path d="M1420.4 557.5L1427 558.4L1430.5 569.8L1424.1 568.9z" fill="#baad46" stroke="#baad46" stroke-width=".5"/><path d="M1420.4 557.5L1427 558.4M1424.1 568.9L1430.5 569.8" stroke="#f028f0" stroke-width=".65" fill="none"/><path d="M1337.2 648.5L1339.5 643.6L1365.8 592.5L1363.2 598.2z" fill="#0a0a04" stroke="#0a0a04" stroke-width=".5"/><path d="M1363.2 598.2L1365.8 592.5" stroke="#f028f0" stroke-width=".65" fill="none"/><path d="M1209.9 516.3L1219.4 521.1L1211 528.4L1201.5 523.3z" fill="#bbae47" stroke="#bbae47" stroke-width=".5"/><path d="M1209.9 516.3L1219.4 521.1M1201.5 523.3L1211 528.4" stroke="#f028f0" stroke-width=".65" fill="none"/><path d="M1266.9 626L1262.2 620.4L1263.3 566.3L1269.4 572.6z" fill="#575121" stroke="#575121" stroke-width=".5"/><path d="M1269.4 572.6L1263.3 566.3" stroke="#f028f0" stroke-width=".65" fill="none"/><path d="M1413.8 556.8L1420.4 557.5L1424.1 568.9L1418.2 568.2z" fill="#bbae47" stroke="#bbae47" stroke-width=".5"/><path d="M1413.8 556.8L1420.4 557.5M1418.2 568.2L1424.1 568.9" stroke="#f028f0" stroke-width=".65" fill="none"/><path d="M1245.5 621.5L1241.6 628.2L1236.4 575.1L1241.6 567.5z" fill="#504a1e" stroke="#504a1e" stroke-width=".5"/><path d="M1241.6 567.5L1236.4 575.1" stroke="#f028f0" stroke-width=".65" fill="none"/><path d="M1101 553.7L1109.3 566L1094.5 574.3L1086.5 561.2z" fill="#bcae47" stroke="#bcae47" stroke-width=".5"/><path d="M1101 553.7L1109.3 566M1086.5 561.2L1094.5 574.3" stroke="#f028f0" stroke-width=".65" fill="none"/><path d="M1166.3 667.8L1157.6 659.7L1123 611.3L1133.9 620.9z" fill="#1c1a0b" stroke="#1c1a0b" stroke-width=".5"/><path d="M1133.9 620.9L1123 611.3" stroke="#f028f0" stroke-width=".65" fill="none"/><path d="M1407.3 556.5L1413.8 556.8L1418.2 568.2L1412.8 568z" fill="#bdaf47" stroke="#bdaf47" stroke-width=".5"/><path d="M1407.3 556.5L1413.8 556.8M1412.8 568L1418.2 568.2" stroke="#f028f0" stroke-width=".65" fill="none"/><path d="M1271.7 632L1266.9 626L1269.4 572.6L1275.9 579.3z" fill="#575121" stroke="#575121" stroke-width=".5"/><path d="M1275.9 579.3L1269.4 572.6" stroke="#f028f0" stroke-width=".65" fill="none"/><path d="M1241.6 628.2L1237.6 635.5L1231 583.3L1236.4 575.1z" fill="#4f4a1e" stroke="#4f4a1e" stroke-width=".5"/><path d="M1236.4 575.1L1231 583.3" stroke="#f028f0" stroke-width=".65" fill="none"/><path d="M1401 556.7L1407.3 556.5L1412.8 568L1408 568.2z" fill="#beb148" stroke="#beb148" stroke-width=".5"/><path d="M1401 556.7L1407.3 556.5M1408 568.2L1412.8 568" stroke="#f028f0" stroke-width=".65" fill="none"/><path d="M1276.8 638.2L1271.7 632L1275.9 579.3L1282.6 586.3z" fill="#575121" stroke="#575121" stroke-width=".5"/><path d="M1282.6 586.3L1275.9 579.3" stroke="#f028f0" stroke-width=".65" fill="none"/><path d="M1219.4 521.1L1229.1 526.3L1220.7 533.7L1211 528.4z" fill="#c0b248" stroke="#c0b248" stroke-width=".5"/><path d="M1219.4 521.1L1229.1 526.3M1211 528.4L1220.7 533.7" stroke="#f028f0" stroke-width=".65" fill="none"/><path d="M1174.9 673.5L1166.3 667.8L1133.9 620.9L1144.9 627.8z" fill="#27250f" stroke="#27250f" stroke-width=".5"/><path d="M1144.9 627.8L1133.9 620.9" stroke="#f028f0" stroke-width=".65" fill="none"/><path d="M1343.2 665.8L1339.7 670.2L1368.5 623.9L1372.9 618.6z" fill="#131207" stroke="#131207" stroke-width=".5"/><path d="M1372.9 618.6L1368.5 623.9" stroke="#f028f0" stroke-width=".65" fill="none"/><path d="M1395 557.6L1401 556.7L1408 568.2L1403.8 568.8z" fill="#c0b349" stroke="#c0b349" stroke-width=".5"/><path d="M1395 557.6L1401 556.7M1403.8 568.8L1408 568.2" stroke="#f028f0" stroke-width=".65" fill="none"/><path d="M1237.6 635.5L1233.3 643.1L1225.1 592L1231 583.3z" fill="#514b1e" stroke="#514b1e" stroke-width=".5"/><path d="M1231 583.3L1225.1 592" stroke="#f028f0" stroke-width=".65" fill="none"/><path d="M1183.2 661.6L1174.9 673.5L1144.9 627.8L1157.2 613.5z" fill="#5e5723" stroke="#5e5723" stroke-width=".5"/><path d="M1282 644.4L1276.8 638.2L1282.6 586.3L1289.7 593.5z" fill="#585121" stroke="#585121" stroke-width=".5"/><path d="M1289.7 593.5L1282.6 586.3" stroke="#f028f0" stroke-width=".65" fill="none"/><path d="M1339.7 670.2L1335.3 673.7L1362.9 628.1L1368.5 623.9z" fill="#28250f" stroke="#28250f" stroke-width=".5"/><path d="M1368.5 623.9L1362.9 628.1" stroke="#f028f0" stroke-width=".65" fill="none"/><path d="M1390 559.2L1395 557.6L1403.8 568.8L1399.6 570.2z" fill="#c2b449" stroke="#c2b449" stroke-width=".5"/><path d="M1390 559.2L1395 557.6M1399.6 570.2L1403.8 568.8" stroke="#f028f0" stroke-width=".65" fill="none"/><path d="M1233.3 643.1L1228.6 650.8L1218.7 600.8L1225.1 592z" fill="#554f20" stroke="#554f20" stroke-width=".5"/><path d="M1225.1 592L1218.7 600.8" stroke="#f028f0" stroke-width=".65" fill="none"/><path d="M1287.4 650.6L1282 644.4L1289.7 593.5L1297.1 600.6z" fill="#585221" stroke="#585221" stroke-width=".5"/><path d="M1297.1 600.6L1289.7 593.5" stroke="#f028f0" stroke-width=".65" fill="none"/><path d="M1184.4 677.3L1175.8 674L1146.1 628.4L1157.6 632.5z" fill="#443f1a" stroke="#443f1a" stroke-width=".5"/><path d="M1157.6 632.5L1146.1 628.4" stroke="#f028f0" stroke-width=".65" fill="none"/><path d="M1335.3 673.7L1329.8 675.8L1355.6 630.7L1362.9 628.1z" fill="#423d19" stroke="#423d19" stroke-width=".5"/><path d="M1362.9 628.1L1355.6 630.7" stroke="#f028f0" stroke-width=".65" fill="none"/><path d="M1322.3 662.3L1324.4 675.9L1348.3 630.8L1344.4 614.4z" fill="#45401a" stroke="#45401a" stroke-width=".5"/><path d="M1293 656.5L1287.4 650.6L1297.1 600.6L1304.7 607.6z" fill="#595322" stroke="#595322" stroke-width=".5"/><path d="M1304.7 607.6L1297.1 600.6" stroke="#f028f0" stroke-width=".65" fill="none"/><path d="M1229.1 526.3L1238.8 531.6L1230.1 539.2L1220.7 533.7z" fill="#c4b64a" stroke="#c4b64a" stroke-width=".5"/><path d="M1229.1 526.3L1238.8 531.6M1220.7 533.7L1230.1 539.2" stroke="#f028f0" stroke-width=".65" fill="none"/><path d="M1228.6 650.8L1223.4 658.3L1211.5 609.6L1218.7 600.8z" fill="#565021" stroke="#565021" stroke-width=".5"/><path d="M1218.7 600.8L1211.5 609.6" stroke="#f028f0" stroke-width=".65" fill="none"/><path d="M1384.4 562.2L1389.1 559.6L1400.6 569.8L1396.8 572z" fill="#c4b64a" stroke="#c4b64a" stroke-width=".5"/><path d="M1384.4 562.2L1389.1 559.6M1396.8 572L1400.6 569.8" stroke="#f028f0" stroke-width=".65" fill="none"/><path d="M1109.3 566L1118.2 578L1103.3 587.4L1094.5 574.3z" fill="#c5b74a" stroke="#c5b74a" stroke-width=".5"/><path d="M1109.3 566L1118.2 578M1094.5 574.3L1103.3 587.4" stroke="#f028f0" stroke-width=".65" fill="none"/><path d="M1329.8 675.8L1324.4 675.9L1348.3 630.8L1355.6 630.7z" fill="#554f20" stroke="#554f20" stroke-width=".5"/><path d="M1355.6 630.7L1348.3 630.8" stroke="#f028f0" stroke-width=".65" fill="none"/><path d="M1298.8 662.1L1293 656.5L1304.7 607.6L1312.7 614.1z" fill="#5a5422" stroke="#5a5422" stroke-width=".5"/><path d="M1312.7 614.1L1304.7 607.6" stroke="#f028f0" stroke-width=".65" fill="none"/><path d="M1193.8 678L1184.4 677.3L1157.6 632.5L1170.2 633.4z" fill="#554f20" stroke="#554f20" stroke-width=".5"/><path d="M1170.2 633.4L1157.6 632.5" stroke="#f028f0" stroke-width=".65" fill="none"/><path d="M1223.4 658.3L1217.5 665.2L1203.2 617.9L1211.5 609.6z" fill="#585221" stroke="#585221" stroke-width=".5"/><path d="M1211.5 609.6L1203.2 617.9" stroke="#f028f0" stroke-width=".65" fill="none"/><path d="M1304.7 667L1298.8 662.1L1312.7 614.1L1320.9 620.1z" fill="#5b5522" stroke="#5b5522" stroke-width=".5"/><path d="M1320.9 620.1L1312.7 614.1" stroke="#f028f0" stroke-width=".65" fill="none"/><path d="M1323 675.7L1317.2 674.3L1338.3 628.8L1346.3 630.6z" fill="#5b5422" stroke="#5b5422" stroke-width=".5"/><path d="M1346.3 630.6L1338.3 628.8" stroke="#f028f0" stroke-width=".65" fill="none"/><path d="M1310.8 671.2L1304.7 667L1320.9 620.1L1329.4 625.1z" fill="#5c5523" stroke="#5c5523" stroke-width=".5"/><path d="M1329.4 625.1L1320.9 620.1" stroke="#f028f0" stroke-width=".65" fill="none"/><path d="M1317.2 674.3L1310.8 671.2L1329.4 625.1L1338.3 628.8z" fill="#5c5523" stroke="#5c5523" stroke-width=".5"/><path d="M1338.3 628.8L1329.4 625.1" stroke="#f028f0" stroke-width=".65" fill="none"/><path d="M1202.7 675.8L1193.8 678L1170.2 633.4L1182.5 630.7z" fill="#5a5322" stroke="#5a5322" stroke-width=".5"/><path d="M1182.5 630.7L1170.2 633.4" stroke="#f028f0" stroke-width=".65" fill="none"/><path d="M1217.5 665.2L1210.7 671.3L1193.6 625.2L1203.2 617.9z" fill="#5a5422" stroke="#5a5422" stroke-width=".5"/><path d="M1203.2 617.9L1193.6 625.2" stroke="#f028f0" stroke-width=".65" fill="none"/><path d="M1380.1 566L1384.4 562.2L1396.8 572L1393.8 574.8z" fill="#c7b94b" stroke="#c7b94b" stroke-width=".5"/><path d="M1380.1 566L1384.4 562.2M1393.8 574.8L1396.8 572" stroke="#f028f0" stroke-width=".65" fill="none"/><path d="M1210.7 671.3L1202.7 675.8L1182.5 630.7L1193.6 625.2z" fill="#5b5522" stroke="#5b5522" stroke-width=".5"/><path d="M1193.6 625.2L1182.5 630.7" stroke="#f028f0" stroke-width=".65" fill="none"/><path d="M1238.8 531.6L1248.1 537.4L1238.9 544.9L1230.1 539.2z" fill="#c8ba4c" stroke="#c8ba4c" stroke-width=".5"/><path d="M1238.8 531.6L1248.1 537.4M1230.1 539.2L1238.9 544.9" stroke="#f028f0" stroke-width=".65" fill="none"/><path d="M1376.6 570.5L1380.1 566L1393.8 574.8L1391 578.6z" fill="#cabb4c" stroke="#cabb4c" stroke-width=".5"/><path d="M1376.6 570.5L1380.1 566M1391 578.6L1393.8 574.8" stroke="#f028f0" stroke-width=".65" fill="none"/><path d="M1248.1 537.4L1256.6 543.4L1247.1 551L1238.9 544.9z" fill="#ccbe4d" stroke="#ccbe4d" stroke-width=".5"/><path d="M1248.1 537.4L1256.6 543.4M1238.9 544.9L1247.1 551" stroke="#f028f0" stroke-width=".65" fill="none"/><path d="M1373.6 575.5L1376.6 570.5L1391 578.6L1388.5 583.2z" fill="#cdbe4d" stroke="#cdbe4d" stroke-width=".5"/><path d="M1373.6 575.5L1376.6 570.5M1388.5 583.2L1391 578.6" stroke="#f028f0" stroke-width=".65" fill="none"/><path d="M1118.2 578L1127.6 589.4L1112.8 599.9L1103.3 587.4z" fill="#cdbf4d" stroke="#cdbf4d" stroke-width=".5"/><path d="M1118.2 578L1127.6 589.4M1103.3 587.4L1112.8 599.9" stroke="#f028f0" stroke-width=".65" fill="none"/><path d="M1240.9 548.8L1246.9 543.8L1257 550.6L1251.6 555.3z" fill="#d0c14e" stroke="#d0c14e" stroke-width=".5"/><path d="M1240.9 548.8L1246.9 543.8M1251.6 555.3L1257 550.6" stroke="#f028f0" stroke-width=".65" fill="none"/><path d="M1257 543.7L1262.5 548.3L1252.1 555.3L1246.8 550.7z" fill="#d0c14e" stroke="#d0c14e" stroke-width=".5"/><path d="M1257 543.7L1262.5 548.3M1246.8 550.7L1252.1 555.3" stroke="#f028f0" stroke-width=".65" fill="none"/><path d="M1370.8 581L1373.6 575.5L1388.5 583.2L1386.2 588.5z" fill="#d0c14f" stroke="#d0c14f" stroke-width=".5"/><path d="M1370.8 581L1373.6 575.5M1386.2 588.5L1388.5 583.2" stroke="#f028f0" stroke-width=".65" fill="none"/><path d="M1262.5 548.3L1268.4 553.5L1257.6 560.5L1252.1 555.3z" fill="#d3c450" stroke="#d3c450" stroke-width=".5"/><path d="M1262.5 548.3L1268.4 553.5M1252.1 555.3L1257.6 560.5" stroke="#f028f0" stroke-width=".65" fill="none"/><path d="M1235 555L1240.9 548.8L1251.6 555.3L1246.6 560.9z" fill="#d3c450" stroke="#d3c450" stroke-width=".5"/><path d="M1235 555L1240.9 548.8M1246.6 560.9L1251.6 555.3" stroke="#f028f0" stroke-width=".65" fill="none"/><path d="M1368.3 586.7L1370.8 581L1386.2 588.5L1384 594.3z" fill="#d3c450" stroke="#d3c450" stroke-width=".5"/><path d="M1368.3 586.7L1370.8 581M1384 594.3L1386.2 588.5" stroke="#f028f0" stroke-width=".65" fill="none"/><path d="M1127.6 589.4L1137.4 599.5L1123 611.3L1112.8 599.9z" fill="#d4c550" stroke="#d4c550" stroke-width=".5"/><path d="M1127.6 589.4L1137.4 599.5M1112.8 599.9L1123 611.3" stroke="#f028f0" stroke-width=".65" fill="none"/><path d="M1268.4 553.5L1274.4 559.2L1263.3 566.3L1257.6 560.5z" fill="#d4c550" stroke="#d4c550" stroke-width=".5"/><path d="M1268.4 553.5L1274.4 559.2M1257.6 560.5L1263.3 566.3" stroke="#f028f0" stroke-width=".65" fill="none"/><path d="M1229.3 561.9L1235 555L1246.6 560.9L1241.6 567.5z" fill="#d4c550" stroke="#d4c550" stroke-width=".5"/><path d="M1229.3 561.9L1235 555M1241.6 567.5L1246.6 560.9" stroke="#f028f0" stroke-width=".65" fill="none"/><clipPath id="o11"><path d="M1192.8 677.3L1214.6 667.6L1203 632.6L1175 643.9z"/></clipPath><path d="M1192.8 677.3L1214.6 667.6L1203 632.6L1175 643.9z" fill="#000" stroke="#e020e0" stroke-width=".6"/><g clip-path="url(#o11)"><path d="M1192.8 677.3L1189.7 664.6L1171.7 629.1L1175 643.9z" fill="#1e1c0b"/></g><path d="M1365.8 592.5L1368.3 586.7L1384 594.3L1381.7 600.4z" fill="#d4c550" stroke="#d4c550" stroke-width=".5"/><path d="M1365.8 592.5L1368.3 586.7M1381.7 600.4L1384 594.3" stroke="#f028f0" stroke-width=".65" fill="none"/><path d="M1274.4 559.2L1280.7 565.3L1269.4 572.6L1263.3 566.3z" fill="#d4c550" stroke="#d4c550" stroke-width=".5"/><path d="M1274.4 559.2L1280.7 565.3M1263.3 566.3L1269.4 572.6" stroke="#f028f0" stroke-width=".65" fill="none"/><path d="M1223.7 569.5L1229.3 561.9L1241.6 567.5L1236.4 575.1z" fill="#d4c550" stroke="#d4c550" stroke-width=".5"/><path d="M1223.7 569.5L1229.3 561.9M1236.4 575.1L1241.6 567.5" stroke="#f028f0" stroke-width=".65" fill="none"/><path d="M1363.2 598.2L1365.8 592.5L1381.7 600.4L1379.2 606.6z" fill="#d4c550" stroke="#d4c550" stroke-width=".5"/><path d="M1363.2 598.2L1365.8 592.5M1379.2 606.6L1381.7 600.4" stroke="#f028f0" stroke-width=".65" fill="none"/><path d="M1137.4 599.5L1147.2 607.7L1133.9 620.9L1123 611.3z" fill="#d4c550" stroke="#d4c550" stroke-width=".5"/><path d="M1137.4 599.5L1147.2 607.7M1123 611.3L1133.9 620.9" stroke="#f028f0" stroke-width=".65" fill="none"/><path d="M1280.7 565.3L1287.2 571.7L1275.9 579.3L1269.4 572.6z" fill="#d4c550" stroke="#d4c550" stroke-width=".5"/><path d="M1280.7 565.3L1287.2 571.7M1269.4 572.6L1275.9 579.3" stroke="#f028f0" stroke-width=".65" fill="none"/><path d="M1360.5 603.4L1363.2 598.2L1379.2 606.6L1376.3 612.8z" fill="#d4c550" stroke="#d4c550" stroke-width=".5"/><path d="M1360.5 603.4L1363.2 598.2M1376.3 612.8L1379.2 606.6" stroke="#f028f0" stroke-width=".65" fill="none"/><path d="M1218 577.5L1223.7 569.5L1236.4 575.1L1231 583.3z" fill="#d4c550" stroke="#d4c550" stroke-width=".5"/><path d="M1218 577.5L1223.7 569.5M1231 583.3L1236.4 575.1" stroke="#f028f0" stroke-width=".65" fill="none"/><path d="M1287.2 571.7L1294 578.3L1282.6 586.3L1275.9 579.3z" fill="#d4c550" stroke="#d4c550" stroke-width=".5"/><path d="M1287.2 571.7L1294 578.3M1275.9 579.3L1282.6 586.3" stroke="#f028f0" stroke-width=".65" fill="none"/><path d="M1357.6 607.9L1360.5 603.4L1376.3 612.8L1372.9 618.6z" fill="#d4c550" stroke="#d4c550" stroke-width=".5"/><path d="M1357.6 607.9L1360.5 603.4M1372.9 618.6L1376.3 612.8" stroke="#f028f0" stroke-width=".65" fill="none"/><path d="M1212.1 585.6L1218 577.5L1231 583.3L1225.1 592z" fill="#d4c550" stroke="#d4c550" stroke-width=".5"/><path d="M1212.1 585.6L1218 577.5M1225.1 592L1231 583.3" stroke="#f028f0" stroke-width=".65" fill="none"/><path d="M1147.2 607.7L1157.2 613.5L1144.9 627.8L1133.9 620.9z" fill="#d4c550" stroke="#d4c550" stroke-width=".5"/><path d="M1147.2 607.7L1157.2 613.5M1133.9 620.9L1144.9 627.8" stroke="#f028f0" stroke-width=".65" fill="none"/><path d="M1294 578.3L1300.9 585L1289.7 593.5L1282.6 586.3z" fill="#d4c550" stroke="#d4c550" stroke-width=".5"/><path d="M1294 578.3L1300.9 585M1282.6 586.3L1289.7 593.5" stroke="#f028f0" stroke-width=".65" fill="none"/><path d="M1354.5 611.3L1357.6 607.9L1372.9 618.6L1368.5 623.9z" fill="#d4c550" stroke="#d4c550" stroke-width=".5"/><path d="M1354.5 611.3L1357.6 607.9M1368.5 623.9L1372.9 618.6" stroke="#f028f0" stroke-width=".65" fill="none"/><path d="M1205.9 593.6L1212.1 585.6L1225.1 592L1218.7 600.8z" fill="#d4c550" stroke="#d4c550" stroke-width=".5"/><path d="M1205.9 593.6L1212.1 585.6M1218.7 600.8L1225.1 592" stroke="#f028f0" stroke-width=".65" fill="none"/><path d="M1300.9 585L1308 591.4L1297.1 600.6L1289.7 593.5z" fill="#d4c550" stroke="#d4c550" stroke-width=".5"/><path d="M1300.9 585L1308 591.4M1289.7 593.5L1297.1 600.6" stroke="#f028f0" stroke-width=".65" fill="none"/><path d="M1351.5 613.5L1354.5 611.3L1368.5 623.9L1362.9 628.1z" fill="#d4c550" stroke="#d4c550" stroke-width=".5"/><path d="M1351.5 613.5L1354.5 611.3M1362.9 628.1L1368.5 623.9" stroke="#f028f0" stroke-width=".65" fill="none"/><path d="M1156.1 613L1165.4 616.3L1157.6 632.5L1146.1 628.4z" fill="#d4c550" stroke="#d4c550" stroke-width=".5"/><path d="M1156.1 613L1165.4 616.3M1146.1 628.4L1157.6 632.5" stroke="#f028f0" stroke-width=".65" fill="none"/><path d="M1308 591.4L1315.1 597.5L1304.7 607.6L1297.1 600.6z" fill="#d4c550" stroke="#d4c550" stroke-width=".5"/><path d="M1308 591.4L1315.1 597.5M1297.1 600.6L1304.7 607.6" stroke="#f028f0" stroke-width=".65" fill="none"/><path d="M1348.8 614.5L1351.5 613.5L1362.9 628.1L1355.6 630.7z" fill="#d4c550" stroke="#d4c550" stroke-width=".5"/><path d="M1348.8 614.5L1351.5 613.5M1355.6 630.7L1362.9 628.1" stroke="#f028f0" stroke-width=".65" fill="none"/><path d="M1199.4 601L1205.9 593.6L1218.7 600.8L1211.5 609.6z" fill="#d4c550" stroke="#d4c550" stroke-width=".5"/><path d="M1199.4 601L1205.9 593.6M1211.5 609.6L1218.7 600.8" stroke="#f028f0" stroke-width=".65" fill="none"/><path d="M1315.1 597.5L1322.1 603L1312.7 614.1L1304.7 607.6z" fill="#d4c550" stroke="#d4c550" stroke-width=".5"/><path d="M1315.1 597.5L1322.1 603M1304.7 607.6L1312.7 614.1" stroke="#f028f0" stroke-width=".65" fill="none"/><path d="M1344.4 614.4L1348.8 614.5L1355.6 630.7L1348.3 630.8z" fill="#d4c550" stroke="#d4c550" stroke-width=".5"/><path d="M1344.4 614.4L1348.8 614.5M1348.3 630.8L1355.6 630.7" stroke="#f028f0" stroke-width=".65" fill="none"/><path d="M1165.4 616.3L1172.8 616.8L1170.2 633.4L1157.6 632.5z" fill="#d4c550" stroke="#d4c550" stroke-width=".5"/><path d="M1165.4 616.3L1172.8 616.8M1157.6 632.5L1170.2 633.4" stroke="#f028f0" stroke-width=".65" fill="none"/><path d="M1192.8 607.3L1199.4 601L1211.5 609.6L1203.2 617.9z" fill="#d4c550" stroke="#d4c550" stroke-width=".5"/><path d="M1192.8 607.3L1199.4 601M1203.2 617.9L1211.5 609.6" stroke="#f028f0" stroke-width=".65" fill="none"/><path d="M1322.1 603L1328.9 607.7L1320.9 620.1L1312.7 614.1z" fill="#d4c550" stroke="#d4c550" stroke-width=".5"/><path d="M1322.1 603L1328.9 607.7M1312.7 614.1L1320.9 620.1" stroke="#f028f0" stroke-width=".65" fill="none"/><path d="M1340.7 613.5L1346.3 614.6L1346.3 630.6L1338.3 628.8z" fill="#d4c550" stroke="#d4c550" stroke-width=".5"/><path d="M1340.7 613.5L1346.3 614.6M1338.3 628.8L1346.3 630.6" stroke="#f028f0" stroke-width=".65" fill="none"/><path d="M1328.9 607.7L1335.2 611.2L1329.4 625.1L1320.9 620.1z" fill="#d4c550" stroke="#d4c550" stroke-width=".5"/><path d="M1328.9 607.7L1335.2 611.2M1320.9 620.1L1329.4 625.1" stroke="#f028f0" stroke-width=".65" fill="none"/><path d="M1335.2 611.2L1340.7 613.5L1338.3 628.8L1329.4 625.1z" fill="#d4c550" stroke="#d4c550" stroke-width=".5"/><path d="M1335.2 611.2L1340.7 613.5M1329.4 625.1L1338.3 628.8" stroke="#f028f0" stroke-width=".65" fill="none"/><path d="M1172.8 616.8L1179.5 615.3L1182.5 630.7L1170.2 633.4z" fill="#d4c550" stroke="#d4c550" stroke-width=".5"/><path d="M1172.8 616.8L1179.5 615.3M1170.2 633.4L1182.5 630.7" stroke="#f028f0" stroke-width=".65" fill="none"/><path d="M1186.1 612.2L1192.8 607.3L1203.2 617.9L1193.6 625.2z" fill="#d4c550" stroke="#d4c550" stroke-width=".5"/><path d="M1186.1 612.2L1192.8 607.3M1193.6 625.2L1203.2 617.9" stroke="#f028f0" stroke-width=".65" fill="none"/><path d="M1179.5 615.3L1186.1 612.2L1193.6 625.2L1182.5 630.7z" fill="#d4c550" stroke="#d4c550" stroke-width=".5"/><path d="M1179.5 615.3L1186.1 612.2M1182.5 630.7L1193.6 625.2" stroke="#f028f0" stroke-width=".65" fill="none"/></g><path d="M1298.7 849.4L1503.5 507.4M1503.5 507.4L1246.9 402.2M1246.9 402.2L1039.6 477.9M1039.6 477.9L1298.7 849.4M1307.9 860.6L1524.8 481.9M1524.8 481.9L1246.3 382.6M1246.3 382.6L1022.9 453.3M1022.9 453.3L1307.9 860.6M1322.7 878.5L1550 451.6M1550 451.6L1245.7 361M1245.7 361L1003.6 424.8M1003.6 424.8L1322.7 878.5M1298.7 849.4L1322.7 878.5M1503.5 507.4L1550 451.6M1246.9 402.2L1245.7 361M1039.6 477.9L1003.6 424.8M1110.1 579L1341.3 440.9M1441.8 610.4L1163.7 432.6" stroke="#f020f0" stroke-width=".55" fill="none" opacity=".7"/><path d="M1043.4 477.7L1084.6 535.3M1043.4 477.7L1183.6 426.2M1183.6 426.2L1246.3 403.2M1246.3 403.2L1303.5 427.1M1084.6 535.3L1179.1 667.4M1179.1 667.4L1253.4 602.9M1182.3 535.8L1276.4 479.7M1182.3 535.8L1253.4 602.9M1253.4 602.9L1323.4 669M1323.4 669L1363.4 618.8M1363.4 618.8L1426.5 620.6M1426.5 620.6L1451.6 580.5M1451.6 580.5L1497.3 507.3M1433.6 480.9L1497.3 507.3M1408.9 506.4L1433.6 480.9M1310.8 459.1L1408.9 506.4M1084.6 535.3L1239.8 458.6M1239.8 458.6L1303.5 427.1M1183.6 426.2L1239.8 458.6M1239.8 458.6L1276.4 479.7M1276.4 479.7L1451.6 580.5M1276.4 479.7L1339.5 442M1303.5 427.1L1339.5 442M1339.5 442L1433.6 480.9" stroke="#ff1a10" stroke-width=".7" fill="none"/><path d="M1043.4 477.7L1039.5 481.1L1037.1 484.6L1036 488L1036.2 491.4L1037.5 494.7L1039.7 498L1042.9 501.4L1046.8 504.8L1051.3 508.2L1056.2 511.7L1061.3 515.2L1066.6 518.9L1071.7 522.7L1076.6 526.7L1080.9 530.9L1084.6 535.3M1043.4 477.7L1016.5 498.1M1084.6 535.3L1068.6 513M1043.4 477.7L1048.8 474.1L1055.4 470.6L1063.2 467L1071.8 463.4L1081.1 459.9L1090.8 456.4L1100.9 453L1111.2 449.6L1121.5 446.3L1131.6 443.1L1141.5 440.1L1151 437.1L1160.1 434.2L1168.6 431.4L1176.5 428.8L1183.6 426.2M1043.4 477.7L1066.2 460.4M1183.6 426.2L1144.6 440.5M1183.6 426.2L1188.1 424.5L1192.6 422.6L1197.1 420.7L1201.5 418.7L1205.8 416.7L1210 414.8L1214.1 412.9L1218.1 411.1L1222 409.4L1225.8 407.9L1229.4 406.5L1233 405.4L1236.4 404.5L1239.8 403.8L1243.1 403.4L1246.3 403.2M1183.6 426.2L1206.5 417.9M1246.3 403.2L1229.3 403.1M1246.3 403.2L1249.5 403.4L1252.6 403.9L1255.8 404.6L1259 405.6L1262.3 406.8L1265.6 408.2L1269 409.8L1272.5 411.5L1276.1 413.3L1279.7 415.2L1283.5 417.2L1287.3 419.3L1291.2 421.3L1295.3 423.3L1299.3 425.3L1303.5 427.1M1246.3 403.2L1263.4 403.4M1303.5 427.1L1282.3 418.3M1084.6 535.3L1088.8 541.3L1093.1 548.1L1097.6 555.5L1102.3 563.5L1107.3 572.1L1112.5 581.3L1118 590.9L1123.9 600.7L1130 610.8L1136.5 620.9L1143.3 630.8L1150.2 640.3L1157.4 649L1164.7 656.7L1172 662.9L1179.1 667.4M1084.6 535.3L1109 569.4M1179.1 667.4L1143.3 649.3M1179.1 667.4L1186 670.3L1192.5 671.1L1198.7 670.2L1204.5 667.8L1209.8 664L1214.8 659.3L1219.4 653.7L1223.7 647.6L1227.7 641.3L1231.5 634.8L1235.1 628.4L1238.7 622.3L1242.2 616.6L1245.8 611.3L1249.5 606.8L1253.4 602.9M1179.1 667.4L1218.5 689M1253.4 602.9L1230.9 622.4M1182.3 535.8L1184.7 532L1188.3 528.1L1192.8 524.2L1198.2 520.4L1204.2 516.5L1210.7 512.8L1217.6 509.1L1224.7 505.5L1232 501.9L1239.2 498.4L1246.2 495.1L1253.1 491.8L1259.6 488.6L1265.7 485.5L1271.3 482.5L1276.4 479.7M1182.3 535.8L1191 516.6M1276.4 479.7L1249.5 495.7M1182.3 535.8L1181.1 539.8L1181 543.8L1182.2 547.8L1184.4 551.7L1187.6 555.6L1191.7 559.6L1196.6 563.5L1202.1 567.5L1208.2 571.6L1214.6 575.7L1221.3 579.9L1228.1 584.2L1234.9 588.6L1241.4 593.2L1247.7 597.9L1253.4 602.9M1182.3 535.8L1171.2 559.1M1253.4 602.9L1226.7 577.7M1253.4 602.9L1257.1 606.6L1260.9 610.7L1264.8 615.1L1268.9 619.9L1273.1 624.9L1277.4 630.1L1281.8 635.4L1286.4 640.7L1291 645.9L1295.7 650.8L1300.5 655.5L1305.2 659.6L1309.9 663.2L1314.6 666.1L1319.1 668L1323.4 669M1253.4 602.9L1273.9 622.3M1323.4 669L1301.1 666.8M1323.4 669L1327.1 669.1L1330.5 668L1333.6 666L1336.3 663.2L1338.8 659.7L1341.1 655.7L1343.2 651.4L1345.2 647L1347.1 642.5L1349 638L1351 633.8L1353 629.8L1355.3 626.3L1357.7 623.2L1360.4 620.7L1363.4 618.8M1323.4 669L1344.7 672.8M1363.4 618.8L1345.8 627M1363.4 618.8L1366.6 617.6L1370.1 616.9L1373.8 616.6L1377.7 616.7L1381.8 617L1386 617.6L1390.3 618.4L1394.7 619.2L1399.2 620L1403.6 620.8L1407.9 621.5L1412.1 622L1416.2 622.2L1419.9 622.1L1423.4 621.6L1426.5 620.6M1363.4 618.8L1379.3 611M1426.5 620.6L1410.7 627.4M1426.5 620.6L1428.6 618.7L1430.5 616.6L1432.4 614.3L1434.2 611.9L1435.8 609.3L1437.5 606.7L1439 604L1440.5 601.2L1442 598.5L1443.4 595.7L1444.8 593L1446.1 590.3L1447.5 587.7L1448.8 585.2L1450.2 582.8L1451.6 580.5M1426.5 620.6L1437.4 611.3M1451.6 580.5L1443.9 592.8M1451.6 580.5L1455.4 574.7L1459.5 569L1463.8 563.3L1468.2 557.7L1472.6 552.3L1476.8 547.1L1480.8 542.1L1484.6 537.2L1488 532.6L1491 528.3L1493.6 524.1L1495.6 520.2L1497 516.6L1497.8 513.2L1497.9 510.1L1497.3 507.3M1451.6 580.5L1469.3 552.1M1497.3 507.3L1503 522.5M1433.6 480.9L1437.4 482.4L1441.6 483.8L1446 485.1L1450.7 486.5L1455.5 487.8L1460.4 489.1L1465.3 490.5L1470.1 491.9L1474.8 493.3L1479.3 494.9L1483.5 496.5L1487.3 498.3L1490.7 500.3L1493.5 502.4L1495.7 504.7L1497.3 507.3M1433.6 480.9L1453.4 489.1M1497.3 507.3L1491.5 493.6M1408.9 506.4L1413.2 507L1416.8 507L1419.8 506.5L1422.3 505.4L1424.2 504L1425.8 502.2L1426.9 500.2L1427.8 498L1428.5 495.7L1429 493.3L1429.5 490.9L1430.1 488.6L1430.7 486.4L1431.4 484.4L1432.4 482.5L1433.6 480.9M1408.9 506.4L1434.2 511.5M1433.6 480.9L1425.8 489M1310.8 459.1L1315.9 461.6L1321.4 464.4L1327.1 467.5L1333.1 470.7L1339.3 474.1L1345.8 477.6L1352.4 481.1L1359.1 484.7L1365.9 488.3L1372.7 491.8L1379.5 495.1L1386.1 498.2L1392.4 500.9L1398.4 503.3L1403.9 505.1L1408.9 506.4M1310.8 459.1L1339.2 472.8M1408.9 506.4L1384.8 501.5" stroke="#a0a0a0" stroke-width=".6" fill="none"/><rect x="1015.2" y="497.1" width="2.600" height="2" fill="#10a010"/><rect x="1067.3" y="512" width="2.600" height="2" fill="#10a010"/><rect x="1064.9" y="459.4" width="2.600" height="2" fill="#10a010"/><rect x="1143.3" y="439.5" width="2.600" height="2" fill="#10a010"/><rect x="1205.2" y="416.9" width="2.600" height="2" fill="#10a010"/><rect x="1228" y="402.1" width="2.600" height="2" fill="#10a010"/><rect x="1262.1" y="402.4" width="2.600" height="2" fill="#10a010"/><rect x="1281" y="417.3" width="2.600" height="2" fill="#10a010"/><rect x="1107.7" y="568.4" width="2.600" height="2" fill="#10a010"/><rect x="1142" y="648.3" width="2.600" height="2" fill="#10a010"/><rect x="1217.2" y="688" width="2.600" height="2" fill="#10a010"/><rect x="1229.6" y="621.4" width="2.600" height="2" fill="#10a010"/><rect x="1189.7" y="515.6" width="2.600" height="2" fill="#10a010"/><rect x="1248.2" y="494.7" width="2.600" height="2" fill="#10a010"/><rect x="1169.9" y="558.1" width="2.600" height="2" fill="#10a010"/><rect x="1225.4" y="576.7" width="2.600" height="2" fill="#10a010"/><rect x="1272.6" y="621.3" width="2.600" height="2" fill="#10a010"/><rect x="1299.8" y="665.8" width="2.600" height="2" fill="#10a010"/><rect x="1343.4" y="671.8" width="2.600" height="2" fill="#10a010"/><rect x="1344.5" y="626" width="2.600" height="2" fill="#10a010"/><rect x="1378" y="610" width="2.600" height="2" fill="#10a010"/><rect x="1409.4" y="626.4" width="2.600" height="2" fill="#10a010"/><rect x="1436.1" y="610.3" width="2.600" height="2" fill="#10a010"/><rect x="1442.6" y="591.8" width="2.600" height="2" fill="#10a010"/><rect x="1468" y="551.1" width="2.600" height="2" fill="#10a010"/><rect x="1501.7" y="521.5" width="2.600" height="2" fill="#10a010"/><rect x="1452.1" y="488.1" width="2.600" height="2" fill="#10a010"/><rect x="1490.2" y="492.6" width="2.600" height="2" fill="#10a010"/><rect x="1432.9" y="510.5" width="2.600" height="2" fill="#10a010"/><rect x="1424.5" y="488" width="2.600" height="2" fill="#10a010"/><rect x="1337.9" y="471.8" width="2.600" height="2" fill="#10a010"/><rect x="1383.5" y="500.5" width="2.600" height="2" fill="#10a010"/><rect x="1146.3" y="503.1" width="2.600" height="2" fill="#10a010"/><rect x="1196.8" y="478.2" width="2.600" height="2" fill="#10a010"/><rect x="1256.3" y="448.8" width="2.600" height="2" fill="#10a010"/><rect x="1272.8" y="440.6" width="2.600" height="2" fill="#10a010"/><rect x="1292.8" y="430.7" width="2.600" height="2" fill="#10a010"/><rect x="1297.5" y="428.4" width="2.600" height="2" fill="#10a010"/><rect x="1198.9" y="435" width="2.600" height="2" fill="#10a010"/><rect x="1217.4" y="445.7" width="2.600" height="2" fill="#10a010"/><rect x="1249.7" y="464.3" width="2.600" height="2" fill="#10a010"/><rect x="1261.8" y="471.3" width="2.600" height="2" fill="#10a010"/><rect x="1319.8" y="504.7" width="2.600" height="2" fill="#10a010"/><rect x="1376.4" y="537.3" width="2.600" height="2" fill="#10a010"/><rect x="1287.1" y="471.5" width="2.600" height="2" fill="#10a010"/><rect x="1298.5" y="464.7" width="2.600" height="2" fill="#10a010"/><rect x="1319.4" y="452.2" width="2.600" height="2" fill="#10a010"/><rect x="1329" y="446.5" width="2.600" height="2" fill="#10a010"/><rect x="1313.4" y="430.9" width="2.600" height="2" fill="#10a010"/><rect x="1325.3" y="435.8" width="2.600" height="2" fill="#10a010"/><rect x="1365.6" y="452.5" width="2.600" height="2" fill="#10a010"/><rect x="1396.8" y="465.4" width="2.600" height="2" fill="#10a010"/><rect x="1023.5" y="446.6" width="3" height="2.200" fill="#f0a020"/><rect x="1102" y="398.2" width="3" height="2.200" fill="#f0a020"/><rect x="1211" y="369.3" width="3" height="2.200" fill="#f0a020"/><rect x="1272.9" y="369.6" width="3" height="2.200" fill="#f0a020"/><rect x="1085.2" y="531.1" width="3" height="2.200" fill="#f0a020"/><rect x="1205.6" y="578.7" width="3" height="2.200" fill="#f0a020"/><rect x="1228.5" y="448" width="3" height="2.200" fill="#f0a020"/><rect x="1201.7" y="507.3" width="3" height="2.200" fill="#f0a020"/><rect x="1292.3" y="579.4" width="3" height="2.200" fill="#f0a020"/><rect x="1371.1" y="589.9" width="3" height="2.200" fill="#f0a020"/><rect x="1434.2" y="564.5" width="3" height="2.200" fill="#f0a020"/><rect x="1488.6" y="542.4" width="3" height="2.200" fill="#f0a020"/><rect x="1523.7" y="480.9" width="3" height="2.200" fill="#f0a020"/><rect x="1498.7" y="437.7" width="3" height="2.200" fill="#f0a020"/><rect x="1449.4" y="437.3" width="3" height="2.200" fill="#f0a020"/><rect x="1369.3" y="425.9" width="3" height="2.200" fill="#f0a020"/><rect x="1157.9" y="435.5" width="3" height="2.200" fill="#f0a020"/><rect x="1265.5" y="395.7" width="3" height="2.200" fill="#f0a020"/><rect x="1299.7" y="383" width="3" height="2.200" fill="#f0a020"/><rect x="1201.1" y="391.9" width="3" height="2.200" fill="#f0a020"/><rect x="1255.2" y="415.6" width="3" height="2.200" fill="#f0a020"/><rect x="1364.2" y="463.3" width="3" height="2.200" fill="#f0a020"/><rect x="1298.3" y="415.9" width="3" height="2.200" fill="#f0a020"/><rect x="1333.5" y="399.6" width="3" height="2.200" fill="#f0a020"/><rect x="1327.1" y="386.1" width="3" height="2.200" fill="#f0a020"/><rect x="1398.9" y="407.8" width="3" height="2.200" fill="#f0a020"/><path d="M1238 457.5l3 2.400m0-2.400l-3 2.400M1177.5 666.5l3 2.400m0-2.400l-3 2.400M1041.8 476.5l3 2.400m0-2.400l-3 2.400M1321.8 667.6l3 2.400m0-2.400l-3 2.400M1361.9 617.4l3 2.400m0-2.400l-3 2.400M1495.8 506.1l3 2.400m0-2.400l-3 2.400M1449.5 579.4l3 2.400m0-2.400l-3 2.400M1432.1 479.8l3 2.400m0-2.400l-3 2.400M1407.3 505.2l3 2.400m0-2.400l-3 2.400M1274.6 478.6l3 2.400m0-2.400l-3 2.400M1182 425l3 2.400m0-2.400l-3 2.400M1182.1 425.2l3 2.400m0-2.400l-3 2.400M1274.8 478.5l3 2.400m0-2.400l-3 2.400M1302 425.9l3 2.400m0-2.400l-3 2.400M1432 479.9l3 2.400m0-2.400l-3 2.400M1301.8 426l3 2.400m0-2.400l-3 2.400M1244.7 402l3 2.400m0-2.400l-3 2.400M1309.2 457.9l3 2.400m0-2.400l-3 2.400M1287.8 432.9l3 2.400m0-2.400l-3 2.400M1309.1 458l3 2.400m0-2.400l-3 2.400M1425.2 619.4l3 2.400m0-2.400l-3 2.400M1083 534.1l3 2.400m0-2.400l-3 2.400M1337.8 440.9l3 2.400m0-2.400l-3 2.400M1180.9 534.6l3 2.400m0-2.400l-3 2.400M1252 601.7l3 2.400m0-2.400l-3 2.400M1450.1 579.4l3 2.400m0-2.400l-3 2.400" stroke="#2040ff" stroke-width=".9" fill="none"/><path d="M1230 451.6L1265.9 472.4M1283.2 452.4L1245.7 472.1" stroke="#f0e000" stroke-width=".9" fill="none"/><path d="M1256 466.7V427" stroke="#1030ff" stroke-width=".9"/><path d="M1253.8 429L1256 420.500 1258.2 429z" fill="#1030ff"/><path d="M1247 460.7V453.7L1256 458.2" stroke="#109010" stroke-width=".6" fill="none"/><path d="M1247 453.7l6 2.300" stroke="#1030ff" stroke-width=".7"/><circle cx="1230" cy="451.6" r="1.900" fill="#0a6a0a"/><path d="M1281.2 450.8l4.400-1.200-2.200 3.600z" fill="#f01010"/><g transform="translate(1576.3 660.3) rotate(38)"><ellipse rx="24.200" ry="13.400" fill="none" stroke="#6464cc" stroke-width="5.400"/></g><path d="M1561.1 653.900L1572.700 647.200 1572.300 656.400 1564 660.700z" fill="#6e6a5c"/><path d="M1572.700 647.200L1592.700 658.700 1591.100 667.500 1572.300 656.400z" fill="#b9bdb2"/><path d="M1564 660.700L1572.300 656.400 1591.100 667.500 1579.100 672.700z" fill="#c6c4c0"/><path d="M1572.300 656.400L1591.100 667.500" stroke="#444" stroke-width=".6"/></svg>
<div style="left:1607px;top:38.8px;width:110.2px;height:8.5px;background:#475986;"></div>
<span class="t" style="left:1609.2px;top:39.35px;color:#fff;font-size:4.9px;">Explorer</span>
<svg style="left:1708.7px;top:40.65px" width="5" height="5" viewBox="0 0 5 5"><path d="M.8 .8l3.400 3.400M4.200 .8l-3.400 3.400" stroke="#fff" stroke-width=".7"/></svg>
<div style="left:1607px;top:48px;width:110.2px;height:25px;background:#c1cbe1;"></div>
<svg style="left:1611.4px;top:50.6px" width="8" height="8" viewBox="0 0 8 8"><path d="M1.5 .5h3.5l2 2v5h-5.5z" fill="#fff" stroke="#222" stroke-width=".7"/><path d="M5 .5v2h2" fill="none" stroke="#222" stroke-width=".5"/></svg>
<svg style="left:1621.4px;top:52.2px" width="4" height="6" viewBox="0 0 4 6"><path d="M0 3h3.400l-1.700 1.800z" fill="#222"/></svg>
<div style="left:1627.4px;top:50.4px;width:0.5px;height:8.5px;background:#a0aeCC;"></div>
<svg style="left:1629.4px;top:50.6px" width="8" height="8" viewBox="0 0 8 8"><path d="M3 .8l1.600 4.400M5 .8l-1.600 4.400M3 6.600h.1M5 6.600h.1" stroke="#889" stroke-width=".8" fill="none"/></svg>
<svg style="left:1640.6px;top:50.6px" width="8" height="8" viewBox="0 0 8 8"><path d="M.6 .6h3l1 1v3.6h-4z" fill="#fff" stroke="#222" stroke-width=".6"/><path d="M3.4 3h2.6l1.4 1.4v3h-4z" fill="#fff" stroke="#1a2ab0" stroke-width=".6"/></svg>
<svg style="left:1651.4px;top:50.6px" width="8" height="8" viewBox="0 0 8 8"><g opacity="0.35" style="filter:grayscale(1)"><rect x=".8" y="1.2" width="5.4" height="6" fill="#8a7a50" stroke="#333" stroke-width=".6"/><rect x="2.4" y=".4" width="2.2" height="1.6" fill="#999" stroke="#333" stroke-width=".4"/><rect x="3.4" y="3.4" width="3.8" height="4" fill="#fff" stroke="#333" stroke-width=".5"/></g></svg>
<div style="left:1662.6px;top:50.4px;width:0.5px;height:8.5px;background:#a0aeCC;"></div>
<svg style="left:1666px;top:50.6px" width="8" height="8" viewBox="0 0 8 8"><path d="M1.200 1.200l5.600 5.600M6.800 1.200l-5.600 5.600" stroke="#889" stroke-width=".8"/></svg>
<div style="left:1677.6px;top:50.4px;width:0.5px;height:8.5px;background:#a0aeCC;"></div>
<svg style="left:1680.4px;top:50.6px" width="8" height="8" viewBox="0 0 8 8"><path d="M4 .8v6.400" stroke="#889" stroke-width="1.100"/></svg>
<svg style="left:1691.4px;top:50.6px" width="8" height="8" viewBox="0 0 8 8"><path d="M4 .8v5M1.800 4.200l2.200 3 2.200-3z" stroke="#889" stroke-width=".9" fill="#889"/></svg>
<svg style="left:1609.6px;top:63.2px" width="8" height="8" viewBox="0 0 8 8"><ellipse cx="3" cy="3.800" rx="1.500" ry="2.800" fill="none" stroke="#1a2ab0" stroke-width=".8"/><rect x="5.400" y="5.800" width="1.400" height="1.400" fill="#1a2ab0"/></svg>
<svg style="left:1620.6px;top:63.2px" width="8" height="8" viewBox="0 0 8 8"><ellipse cx="3" cy="3.800" rx="1.500" ry="2.800" fill="none" stroke="#1a2ab0" stroke-width=".8"/><rect x="5.400" y="5.800" width="1.400" height="1.400" fill="#1a2ab0"/></svg>
<div style="left:1631.6px;top:63px;width:0.5px;height:8.5px;background:#a0aeCC;"></div>
<svg style="left:1634.8px;top:63.2px" width="8" height="8" viewBox="0 0 8 8"><ellipse cx="3.200" cy="3.600" rx="2.600" ry="2" fill="none" stroke="#1a2ab0" stroke-width=".8"/><path d="M4.600 5.400l1.400 1.800 1.400-2" fill="none" stroke="#1a2ab0" stroke-width=".7"/></svg>
<svg style="left:1646px;top:63.2px" width="8" height="8" viewBox="0 0 8 8"><ellipse cx="3.200" cy="3.600" rx="2.600" ry="2" fill="none" stroke="#1a2ab0" stroke-width=".8"/><path d="M4.600 5.400l1.400 1.800 1.400-2" fill="none" stroke="#1a2ab0" stroke-width=".7"/></svg>
<div style="left:1657.6px;top:63px;width:0.5px;height:8.5px;background:#a0aeCC;"></div>
<svg style="left:1660.8px;top:63.2px" width="8" height="8" viewBox="0 0 8 8"><path d="M.8 4l2.600-2.400 3.400 2-2.400 2.400z" fill="none" stroke="#1a2ab0" stroke-width=".9"/><path d="M3 1.600h3.600" stroke="#1a2ab0" stroke-width=".9"/><rect x="5.600" y="5.600" width="1.500" height="1.500" fill="#1a2ab0"/></svg>
<svg style="left:1672px;top:63.2px" width="8" height="8" viewBox="0 0 8 8"><path d="M.8 4l2.600-2.400 3.400 2-2.400 2.400z" fill="none" stroke="#1a2ab0" stroke-width=".9"/><path d="M3 1.600h3.600" stroke="#1a2ab0" stroke-width=".9"/><rect x="5.600" y="5.600" width="1.500" height="1.500" fill="#1a2ab0"/></svg>
<div style="left:1607px;top:73px;width:110.2px;height:304.4px;background:#fff;"></div>
<div style="left:1608px;top:73.4px;width:101.5px;height:8.4px;background:#f4f4f7;"></div><span class="t" style="left:1616.7px;top:73.5px;color:#000;font-size:5.300px;height:8px;overflow:hidden">Wall</span><div style="left:1608px;top:82.4px;width:101.5px;height:8.4px;background:#f4f4f7;"></div><svg style="left:1608.6px;top:84.3px" width="4.4" height="4.4" viewBox="0 0 4.4 4.4"><rect x=".25" y=".25" width="3.900" height="3.900" fill="#fff" stroke="#333" stroke-width=".7"/><path d="M1.100 2.200h2.200" stroke="#111" stroke-width=".6"/></svg><span class="t" style="left:1616.7px;top:82.5px;color:#000;font-size:5.300px;height:8px;overflow:hidden">Wall</span><span class="t" style="left:1625.7px;top:91.5px;color:#3a1010;font-size:5.300px;height:8px;overflow:hidden">Box</span><svg style="left:1617.6px;top:102.3px" width="4.4" height="4.4" viewBox="0 0 4.4 4.4"><rect x=".25" y=".25" width="3.900" height="3.900" fill="#fff" stroke="#333" stroke-width=".7"/><path d="M1.100 2.200h2.200" stroke="#111" stroke-width=".6"/></svg><span class="t" style="left:1625.7px;top:100.5px;color:#3a1010;font-size:5.300px;height:8px;overflow:hidden">Box</span><span class="t" style="left:1634.7px;top:109.5px;color:#3a1010;font-size:5.300px;height:8px;overflow:hidden">Space</span><span class="t" style="left:1634.7px;top:118.5px;color:#3a1010;font-size:5.300px;height:8px;overflow:hidden">Box</span><span class="t" style="left:1625.7px;top:127.5px;color:#3a1010;font-size:5.300px;height:8px;overflow:hidden">Box</span><span class="t" style="left:1625.7px;top:136.5px;color:#3a1010;font-size:5.300px;height:8px;overflow:hidden">Box</span><svg style="left:1617.6px;top:147.3px" width="4.4" height="4.4" viewBox="0 0 4.4 4.4"><rect x=".25" y=".25" width="3.900" height="3.900" fill="#fff" stroke="#333" stroke-width=".7"/><path d="M1.100 2.200h2.200" stroke="#111" stroke-width=".6"/></svg><span class="t" style="left:1625.7px;top:145.5px;color:#3a1010;font-size:5.300px;height:8px;overflow:hidden">Box</span><span class="t" style="left:1634.7px;top:154.5px;color:#3a1010;font-size:5.300px;height:8px;overflow:hidden">Space</span><span class="t" style="left:1634.7px;top:163.5px;color:#3a1010;font-size:5.300px;height:8px;overflow:hidden">Box</span><span class="t" style="left:1625.7px;top:172.5px;color:#3a1010;font-size:5.300px;height:8px;overflow:hidden">Box</span><div style="left:1608px;top:181.4px;width:101.5px;height:8.4px;background:#f4f4f7;"></div><span class="t" style="left:1616.7px;top:181.5px;color:#000;font-size:5.300px;height:8px;overflow:hidden">Wall</span><div style="left:1608px;top:190.4px;width:101.5px;height:8.4px;background:#f4f4f7;"></div><span class="t" style="left:1616.7px;top:190.5px;color:#000;font-size:5.300px;height:8px;overflow:hidden">Wall</span><div style="left:1608px;top:199.4px;width:101.5px;height:8.4px;background:#f4f4f7;"></div><svg style="left:1608.6px;top:201.3px" width="4.4" height="4.4" viewBox="0 0 4.4 4.4"><rect x=".25" y=".25" width="3.900" height="3.900" fill="#fff" stroke="#333" stroke-width=".7"/><path d="M1.100 2.200h2.200" stroke="#111" stroke-width=".6"/></svg><span class="t" style="left:1616.7px;top:199.5px;color:#000;font-size:5.300px;height:8px;overflow:hidden">Wall</span><span class="t" style="left:1625.7px;top:208.5px;color:#3a1010;font-size:5.300px;height:8px;overflow:hidden">Box</span><svg style="left:1617.6px;top:219.3px" width="4.4" height="4.4" viewBox="0 0 4.4 4.4"><rect x=".25" y=".25" width="3.900" height="3.900" fill="#fff" stroke="#333" stroke-width=".7"/><path d="M1.100 2.200h2.200" stroke="#111" stroke-width=".6"/></svg><span class="t" style="left:1625.7px;top:217.5px;color:#3a1010;font-size:5.300px;height:8px;overflow:hidden">Box</span><span class="t" style="left:1634.7px;top:226.5px;color:#3a1010;font-size:5.300px;height:8px;overflow:hidden">Space</span><span class="t" style="left:1634.7px;top:235.5px;color:#3a1010;font-size:5.300px;height:8px;overflow:hidden">Box</span><span class="t" style="left:1625.7px;top:244.5px;color:#3a1010;font-size:5.300px;height:8px;overflow:hidden">Box</span><span class="t" style="left:1625.7px;top:253.5px;color:#3a1010;font-size:5.300px;height:8px;overflow:hidden">Box</span><svg style="left:1617.6px;top:264.3px" width="4.4" height="4.4" viewBox="0 0 4.4 4.4"><rect x=".25" y=".25" width="3.900" height="3.900" fill="#fff" stroke="#333" stroke-width=".7"/><path d="M1.100 2.200h2.200" stroke="#111" stroke-width=".6"/></svg><span class="t" style="left:1625.7px;top:262.5px;color:#3a1010;font-size:5.300px;height:8px;overflow:hidden">Box</span><span class="t" style="left:1634.7px;top:271.5px;color:#3a1010;font-size:5.300px;height:8px;overflow:hidden">Space</span><span class="t" style="left:1634.7px;top:280.5px;color:#3a1010;font-size:5.300px;height:8px;overflow:hidden">Box</span><span class="t" style="left:1625.7px;top:289.5px;color:#3a1010;font-size:5.300px;height:8px;overflow:hidden">Box</span><div style="left:1608px;top:298.4px;width:101.5px;height:8.4px;background:#f4f4f7;"></div><span class="t" style="left:1616.7px;top:298.5px;color:#000;font-size:5.300px;height:8px;overflow:hidden">Wall</span><div style="left:1608px;top:307.4px;width:101.5px;height:8.4px;background:#f4f4f7;"></div><svg style="left:1608.6px;top:309.3px" width="4.4" height="4.4" viewBox="0 0 4.4 4.4"><rect x=".25" y=".25" width="3.900" height="3.900" fill="#fff" stroke="#333" stroke-width=".7"/><path d="M1.100 2.200h2.200" stroke="#111" stroke-width=".6"/></svg><span class="t" style="left:1616.7px;top:307.5px;color:#000;font-size:5.300px;height:8px;overflow:hidden">Wall</span><span class="t" style="left:1625.7px;top:316.5px;color:#3a1010;font-size:5.300px;height:8px;overflow:hidden">Box</span><svg style="left:1617.6px;top:327.3px" width="4.4" height="4.4" viewBox="0 0 4.4 4.4"><rect x=".25" y=".25" width="3.900" height="3.900" fill="#fff" stroke="#333" stroke-width=".7"/><path d="M1.100 2.200h2.200" stroke="#111" stroke-width=".6"/></svg><span class="t" style="left:1625.7px;top:325.5px;color:#3a1010;font-size:5.300px;height:8px;overflow:hidden">Box</span><span class="t" style="left:1634.7px;top:334.5px;color:#3a1010;font-size:5.300px;height:8px;overflow:hidden">Space</span><span class="t" style="left:1634.7px;top:343.5px;color:#3a1010;font-size:5.300px;height:8px;overflow:hidden">Box</span><span class="t" style="left:1625.7px;top:352.5px;color:#3a1010;font-size:5.300px;height:8px;overflow:hidden">Box</span><span class="t" style="left:1625.7px;top:361.5px;color:#3a1010;font-size:5.300px;height:8px;overflow:hidden">Box</span><svg style="left:1617.6px;top:372.3px" width="4.4" height="4.4" viewBox="0 0 4.4 4.4"><rect x=".25" y=".25" width="3.900" height="3.900" fill="#fff" stroke="#333" stroke-width=".7"/><path d="M1.100 2.200h2.200" stroke="#111" stroke-width=".6"/></svg><span class="t" style="left:1625.7px;top:370.5px;color:#3a1010;font-size:5.300px;height:6.9px;overflow:hidden">Box</span><svg style="left:0px;top:0px" width="1" height="1" viewBox="0 0 1 1"><path d="M1613.0 86.5H1615.7M1610.8 88.7V91.0M1619.8 91.0V100.0M1619.8 95.5H1624.7M1619.8 100.0V109.0M1619.8 104.5H1624.7M1622.0 104.5H1624.7M1619.8 106.7V109.0M1628.8 109.0V118.0M1628.8 113.5H1633.7M1619.8 109.0V118.0M1628.8 118.0V122.5M1628.8 122.5H1633.7M1619.8 118.0V127.0M1619.8 127.0V136.0M1619.8 131.5H1624.7M1619.8 136.0V145.0M1619.8 140.5H1624.7M1619.8 145.0V154.0M1619.8 149.5H1624.7M1622.0 149.5H1624.7M1619.8 151.7V154.0M1628.8 154.0V163.0M1628.8 158.5H1633.7M1619.8 154.0V163.0M1628.8 163.0V167.5M1628.8 167.5H1633.7M1619.8 163.0V172.0M1619.8 172.0V176.5M1619.8 176.5H1624.7M1613.0 203.5H1615.7M1610.8 205.7V208.0M1619.8 208.0V217.0M1619.8 212.5H1624.7M1619.8 217.0V226.0M1619.8 221.5H1624.7M1622.0 221.5H1624.7M1619.8 223.7V226.0M1628.8 226.0V235.0M1628.8 230.5H1633.7M1619.8 226.0V235.0M1628.8 235.0V239.5M1628.8 239.5H1633.7M1619.8 235.0V244.0M1619.8 244.0V253.0M1619.8 248.5H1624.7M1619.8 253.0V262.0M1619.8 257.5H1624.7M1619.8 262.0V271.0M1619.8 266.5H1624.7M1622.0 266.5H1624.7M1619.8 268.7V271.0M1628.8 271.0V280.0M1628.8 275.5H1633.7M1619.8 271.0V280.0M1628.8 280.0V284.5M1628.8 284.5H1633.7M1619.8 280.0V289.0M1619.8 289.0V293.5M1619.8 293.5H1624.7M1613.0 311.5H1615.7M1610.8 313.7V316.0M1619.8 316.0V325.0M1619.8 320.5H1624.7M1619.8 325.0V334.0M1619.8 329.5H1624.7M1622.0 329.5H1624.7M1619.8 331.7V334.0M1628.8 334.0V343.0M1628.8 338.5H1633.7M1619.8 334.0V343.0M1628.8 343.0V347.5M1628.8 347.5H1633.7M1619.8 343.0V352.0M1619.8 352.0V361.0M1619.8 356.5H1624.7M1619.8 361.0V370.0M1619.8 365.5H1624.7M1619.8 370.0V379.0M1619.8 374.5H1624.7M1622.0 374.5H1624.7M1619.8 376.7V379.0" fill="none" stroke="#8a8a8a" stroke-width=".5"/></svg>
<div style="left:1709.8px;top:73px;width:7.4px;height:304.4px;background:#f3f3f3;"></div>
<svg style="left:1709.8px;top:74px" width="7.4" height="7" viewBox="0 0 7.4 7"><path d="M1.700 4.800l2-2.600 2 2.600z" fill="#222"/><path d="M.5 6.700h6.400" stroke="#222" stroke-width=".6"/></svg>
<svg style="left:1709.8px;top:370px" width="7.4" height="7" viewBox="0 0 7.4 7"><path d="M1.700 2.200l2 2.600 2-2.600z" fill="#222"/></svg>
<div style="left:1709.8px;top:81.5px;width:7.4px;height:79.2px;background:#fbfbfb;border-bottom:.5px solid #aaa"></div>
<div style="left:1607px;top:379.7px;width:110.2px;height:12px;background:#c1cbe1;"></div>
<div style="left:1607.8px;top:380.2px;width:11px;height:11px;background:#ffe9a8;border-radius:1px"></div>
<svg style="left:1609.3px;top:381.7px" width="8" height="8" viewBox="0 0 8 8"><path d="M.6 3l2-2.200h4.800v4l-2 2.600h-4.800z" fill="#18a028" stroke="#111" stroke-width=".6"/><path d="M.6 3h4.800v4.400M5.400 3l2-2.200" fill="none" stroke="#111" stroke-width=".5"/><path d="M.9 2.800l1.800-1.800h4.200l-1.700 1.800z" fill="#70e070"/></svg>
<svg style="left:1624px;top:381.7px" width="8" height="8" viewBox="0 0 8 8"><path d="M.8 3l2-2.200h4.600v3.800l-2 2.600h-4.600z" fill="#fff" stroke="#1a1a90" stroke-width=".6"/><path d="M.8 3h4.600v4.200M5.400 3l2-2.200M2.800 .8v3.800h4.600M2.800 4.600l-2 2.600" fill="none" stroke="#1a1a90" stroke-width=".45"/><path d="M.8 3l2-2.200v3.800l-2 2.600z" fill="#e01818"/><path d="M.8 3l2-2.200h4.600v3.800l-2 2.600h-4.600z" fill="none" stroke="#1a1a90" stroke-width=".6"/></svg>
<svg style="left:1634.8px;top:381.7px" width="8" height="8" viewBox="0 0 8 8"><path d="M.8 3l2-2.200h4.600v3.800l-2 2.600h-4.600z" fill="#fff" stroke="#1a1a90" stroke-width=".6"/><path d="M.8 3h4.600v4.200M5.400 3l2-2.200M2.800 .8v3.800h4.600M2.800 4.600l-2 2.600" fill="none" stroke="#1a1a90" stroke-width=".45"/><path d="M.8 3h4.600v4.200h-4.600z" fill="#e01818" opacity=".0"/><path d="M2.800 4.600h4.600l-2 2.600h-4.600z" fill="#e01818"/><path d="M.8 3l2-2.200h4.600v3.800l-2 2.600h-4.600z" fill="none" stroke="#1a1a90" stroke-width=".6"/></svg>
<svg style="left:1645.7px;top:381.7px" width="8" height="8" viewBox="0 0 8 8"><path d="M.8 3l2-2.200h4.600v3.800l-2 2.600h-4.600z" fill="#fff" stroke="#1a1a90" stroke-width=".6"/><path d="M.8 3h4.600v4.200M5.400 3l2-2.200M2.800 .8v3.800h4.600M2.800 4.600l-2 2.600" fill="none" stroke="#1a1a90" stroke-width=".45"/><path d="M.8 3h4.600v4.200h-4.600z" fill="#e01818"/><path d="M.8 3l2-2.200h4.600v3.800l-2 2.600h-4.600z" fill="none" stroke="#1a1a90" stroke-width=".6"/></svg>
<svg style="left:1657px;top:381.7px" width="8" height="8" viewBox="0 0 8 8"><path d="M.8 3l2-2.200h4.600v3.800l-2 2.600h-4.600z" fill="#fff" stroke="#1a1a90" stroke-width=".6"/><path d="M.8 3h4.600v4.200M5.400 3l2-2.200M2.800 .8v3.800h4.600M2.800 4.600l-2 2.600" fill="none" stroke="#1a1a90" stroke-width=".45"/><path d="M.8 3l2-2.200h4.600l-2 2.200z" fill="#e01818"/><path d="M.8 3l2-2.200h4.600v3.800l-2 2.600h-4.600z" fill="none" stroke="#1a1a90" stroke-width=".6"/></svg>
<svg style="left:1667.8px;top:381.7px" width="8" height="8" viewBox="0 0 8 8"><path d="M.8 3l2-2.200h4.600v3.800l-2 2.600h-4.600z" fill="#fff" stroke="#1a1a90" stroke-width=".6"/><path d="M.8 3h4.600v4.200M5.400 3l2-2.200M2.800 .8v3.800h4.600M2.800 4.600l-2 2.600" fill="none" stroke="#1a1a90" stroke-width=".45"/><path d="M5.400 3l2-2.200v3.800l-2 2.600z" fill="#e01818"/><path d="M.8 3l2-2.200h4.600v3.800l-2 2.600h-4.600z" fill="none" stroke="#1a1a90" stroke-width=".6"/></svg>
<svg style="left:1679px;top:381.7px" width="8" height="8" viewBox="0 0 8 8"><path d="M.8 3l2-2.200h4.600v3.800l-2 2.600h-4.600z" fill="#fff" stroke="#1a1a90" stroke-width=".6"/><path d="M.8 3h4.600v4.200M5.400 3l2-2.200M2.800 .8v3.800h4.600M2.800 4.600l-2 2.600" fill="none" stroke="#1a1a90" stroke-width=".45"/><path d="M2.800 .8h4.600v3.800h-4.600z" fill="#e01818"/><path d="M.8 3l2-2.200h4.600v3.800l-2 2.600h-4.600z" fill="none" stroke="#1a1a90" stroke-width=".6"/></svg>
<div style="left:1690.6px;top:381.5px;width:0.5px;height:8.5px;background:#a0aeCC;"></div>
<svg style="left:1693.2px;top:381.7px" width="8" height="8" viewBox="0 0 8 8"><path d="M1.400 6.800v-4.400l1.800-1.400v4.400zM3.800 6.800h2.800v-4.800" fill="none" stroke="#889" stroke-width=".7"/></svg>
<div style="left:1607px;top:391.7px;width:110.2px;height:292.5px;background:#fff;"></div>
<div style="left:1607px;top:392.2px;width:8.6px;height:135px;background:#f4f4f7;"></div><div style="left:1607px;top:392.2px;width:110.2px;height:9px;background:#f1f1f5;"></div><svg style="left:1608.6px;top:394.5px" width="4.4" height="4.4" viewBox="0 0 4.4 4.4"><rect x=".25" y=".25" width="3.900" height="3.900" fill="#fff" stroke="#333" stroke-width=".7"/><path d="M1.100 2.200h2.200" stroke="#111" stroke-width=".6"/></svg><span class="t" style="left:1616.7px;top:392.7px;color:#a9abbb;font-size:5.3px;">Cube</span><span class="t" style="left:1616.7px;top:401.7px;color:#000;font-size:5.3px;">Name</span><div style="left:1615.6px;top:409.9px;width:101.6px;height:0.5px;background:#f1f1f5;"></div><div style="left:1607px;top:410.2px;width:110.2px;height:9px;background:#f1f1f5;"></div><svg style="left:1608.6px;top:412.5px" width="4.4" height="4.4" viewBox="0 0 4.4 4.4"><rect x=".25" y=".25" width="3.900" height="3.900" fill="#fff" stroke="#333" stroke-width=".7"/><path d="M1.100 2.200h2.200" stroke="#111" stroke-width=".6"/></svg><span class="t" style="left:1616.7px;top:410.7px;color:#a9abbb;font-size:5.3px;">Inset</span><span class="t" style="left:1616.7px;top:419.7px;color:#000;font-size:5.3px;">Left</span><span class="t" style="left:1658.6px;top:419.7px;color:#000;font-size:5.3px;">0</span><div style="left:1615.6px;top:427.9px;width:101.6px;height:0.5px;background:#f1f1f5;"></div><span class="t" style="left:1616.7px;top:428.7px;color:#000;font-size:5.3px;">Front</span><span class="t" style="left:1658.6px;top:428.7px;color:#000;font-size:5.3px;">0</span><div style="left:1615.6px;top:436.9px;width:101.6px;height:0.5px;background:#f1f1f5;"></div><span class="t" style="left:1616.7px;top:437.7px;color:#000;font-size:5.3px;">Bottom</span><span class="t" style="left:1658.6px;top:437.7px;color:#000;font-size:5.3px;">0</span><div style="left:1615.6px;top:445.9px;width:101.6px;height:0.5px;background:#f1f1f5;"></div><span class="t" style="left:1616.7px;top:446.7px;color:#000;font-size:5.3px;">Right</span><span class="t" style="left:1658.6px;top:446.7px;color:#000;font-size:5.3px;">0</span><div style="left:1615.6px;top:454.9px;width:101.6px;height:0.5px;background:#f1f1f5;"></div><span class="t" style="left:1616.7px;top:455.7px;color:#000;font-size:5.3px;">Back</span><span class="t" style="left:1658.6px;top:455.7px;color:#000;font-size:5.3px;">0</span><div style="left:1615.6px;top:463.9px;width:101.6px;height:0.5px;background:#f1f1f5;"></div><span class="t" style="left:1616.7px;top:464.7px;color:#000;font-size:5.3px;">Top</span><span class="t" style="left:1658.6px;top:464.7px;color:#000;font-size:5.3px;">0</span><div style="left:1615.6px;top:472.9px;width:101.6px;height:0.5px;background:#f1f1f5;"></div><div style="left:1607px;top:473.2px;width:110.2px;height:9px;background:#f1f1f5;"></div><svg style="left:1608.6px;top:475.5px" width="4.4" height="4.4" viewBox="0 0 4.4 4.4"><rect x=".25" y=".25" width="3.900" height="3.900" fill="#fff" stroke="#333" stroke-width=".7"/><path d="M1.100 2.200h2.200" stroke="#111" stroke-width=".6"/></svg><span class="t" style="left:1616.7px;top:473.7px;color:#a9abbb;font-size:5.3px;">Surface</span><span class="t" style="left:1616.7px;top:482.7px;color:#000;font-size:5.3px;">Inherit</span><div style="left:1615.6px;top:490.9px;width:101.6px;height:0.5px;background:#f1f1f5;"></div><span class="t" style="left:1616.7px;top:491.7px;color:#000;font-size:5.3px;">Transpose</span><span class="t" style="left:1658.6px;top:491.7px;color:#000;font-size:5.3px;">false</span><div style="left:1615.6px;top:499.9px;width:101.6px;height:0.5px;background:#f1f1f5;"></div><span class="t" style="left:1616.7px;top:500.7px;color:#000;font-size:5.3px;">Flip X</span><span class="t" style="left:1658.6px;top:500.7px;color:#000;font-size:5.3px;">false</span><div style="left:1615.6px;top:508.9px;width:101.6px;height:0.5px;background:#f1f1f5;"></div><span class="t" style="left:1616.7px;top:509.70000000000005px;color:#000;font-size:5.3px;">Flip Y</span><span class="t" style="left:1658.6px;top:509.70000000000005px;color:#000;font-size:5.3px;">false</span><div style="left:1615.6px;top:517.9px;width:101.6px;height:0.5px;background:#f1f1f5;"></div><span class="t" style="left:1616.7px;top:518.7px;color:#000;font-size:5.3px;">Projection</span><span class="t" style="left:1658.6px;top:518.7px;color:#000;font-size:5.3px;">Auto</span><div style="left:1615.6px;top:526.9px;width:101.6px;height:0.5px;background:#f1f1f5;"></div><div style="left:1657.2px;top:401.2px;width:0.5px;height:9px;background:#ececf2;"></div>
<span class="t" style="left:937.6px;top:688.4px;color:#f4f4f8;font-size:5.3px;">Width: 10.250000, Length: 12.250000, Height: 2.000000, Polygons: 55680</span><span class="t" style="left:1371.8px;top:688.4px;color:#f4f4f8;font-size:5.3px;">Position X</span><div style="left:1399.2px;top:688px;width:30.6px;height:9px;background:#fff;"></div><span class="t" style="left:1400.2px;top:688.6px;color:#000;font-size:5.3px;">-2</span><div style="left:1419.7px;top:688px;width:10.1px;height:9px;background:#f2f2f2;"></div><svg style="left:1419.7px;top:688px" width="10.1" height="9" viewBox="0 0 10.1 9"><path d="M.3 1.500h4.500M.3 3.500h4.500M.3 5.500h4.500M.3 7.500h4.500" stroke="#999" stroke-width=".5"/><path d="M5.600 3.800l1.900-2.300 1.900 2.300zM5.600 5.300l1.900 2.300 1.900-2.300z" fill="none" stroke="#444" stroke-width=".5"/><path d="M5.200 4.500h4.800" stroke="#888" stroke-width=".4"/></svg><span class="t" style="left:1432.6px;top:688.4px;color:#f4f4f8;font-size:5.3px;">Position Y</span><div style="left:1460.2px;top:688px;width:30.6px;height:9px;background:#fff;"></div><span class="t" style="left:1461.2px;top:688.6px;color:#000;font-size:5.3px;">0</span><div style="left:1480.7px;top:688px;width:10.1px;height:9px;background:#f2f2f2;"></div><svg style="left:1480.7px;top:688px" width="10.1" height="9" viewBox="0 0 10.1 9"><path d="M.3 1.500h4.500M.3 3.500h4.500M.3 5.500h4.500M.3 7.500h4.500" stroke="#999" stroke-width=".5"/><path d="M5.600 3.800l1.900-2.300 1.900 2.300zM5.600 5.300l1.900 2.300 1.900-2.300z" fill="none" stroke="#444" stroke-width=".5"/><path d="M5.200 4.500h4.800" stroke="#888" stroke-width=".4"/></svg><span class="t" style="left:1494.6px;top:688.4px;color:#f4f4f8;font-size:5.3px;">Position Z</span><div style="left:1521.8px;top:688px;width:30.6px;height:9px;background:#fff;"></div><span class="t" style="left:1522.8px;top:688.6px;color:#000;font-size:5.3px;">1</span><div style="left:1542.3px;top:688px;width:10.1px;height:9px;background:#f2f2f2;"></div><svg style="left:1542.3px;top:688px" width="10.1" height="9" viewBox="0 0 10.1 9"><path d="M.3 1.500h4.500M.3 3.500h4.500M.3 5.500h4.500M.3 7.500h4.500" stroke="#999" stroke-width=".5"/><path d="M5.600 3.800l1.900-2.300 1.900 2.300zM5.600 5.300l1.900 2.300 1.900-2.300z" fill="none" stroke="#444" stroke-width=".5"/><path d="M5.200 4.500h4.800" stroke="#888" stroke-width=".4"/></svg><span class="t" style="left:1555.8px;top:688.4px;color:#f4f4f8;font-size:5.3px;">Radius</span><div style="left:1576.2px;top:688px;width:30.6px;height:9px;background:#fff;"></div><span class="t" style="left:1577.2px;top:688.6px;color:#000;font-size:5.3px;">0.125</span><div style="left:1596.7px;top:688px;width:10.1px;height:9px;background:#f2f2f2;"></div><svg style="left:1596.7px;top:688px" width="10.1" height="9" viewBox="0 0 10.1 9"><path d="M.3 1.500h4.500M.3 3.500h4.500M.3 5.500h4.500M.3 7.500h4.500" stroke="#999" stroke-width=".5"/><path d="M5.600 3.800l1.900-2.300 1.900 2.300zM5.600 5.300l1.900 2.300 1.900-2.300z" fill="none" stroke="#444" stroke-width=".5"/><path d="M5.200 4.500h4.800" stroke="#888" stroke-width=".4"/></svg><span class="t" style="left:1611.4px;top:688.4px;color:#6d6878;font-size:5.3px;">Radius 2</span><div style="left:1633.4px;top:688px;width:30.6px;height:9px;background:#fff;"></div><span class="t" style="left:1634.4px;top:688.6px;color:#000;font-size:5.3px;">0</span><div style="left:1653.9px;top:688px;width:10.1px;height:9px;background:#f2f2f2;"></div><svg style="left:1653.9px;top:688px" width="10.1" height="9" viewBox="0 0 10.1 9"><path d="M.3 1.500h4.500M.3 3.500h4.500M.3 5.500h4.500M.3 7.500h4.500" stroke="#999" stroke-width=".5"/><path d="M5.600 3.800l1.900-2.300 1.900 2.300zM5.600 5.300l1.900 2.300 1.900-2.300z" fill="none" stroke="#444" stroke-width=".5"/><path d="M5.200 4.500h4.800" stroke="#888" stroke-width=".4"/></svg><span class="t" style="left:1668.8px;top:688.4px;color:#6d6878;font-size:5.3px;">Range</span><div style="left:1687.6px;top:688px;width:30.6px;height:9px;background:#fff;"></div><span class="t" style="left:1688.6px;top:688.6px;color:#000;font-size:5.3px;">0</span><div style="left:1708.1px;top:688px;width:10.1px;height:9px;background:#f2f2f2;"></div><svg style="left:1708.1px;top:688px" width="10.1" height="9" viewBox="0 0 10.1 9"><path d="M.3 1.500h4.500M.3 3.500h4.500M.3 5.500h4.500M.3 7.500h4.500" stroke="#999" stroke-width=".5"/><path d="M5.600 3.800l1.900-2.300 1.900 2.300zM5.600 5.300l1.900 2.300 1.900-2.300z" fill="none" stroke="#444" stroke-width=".5"/><path d="M5.200 4.500h4.800" stroke="#888" stroke-width=".4"/></svg>
<div style="left:0px;top:700.4px;width:1720px;height:1.6px;background:#fff;"></div>
</div></body></html>
